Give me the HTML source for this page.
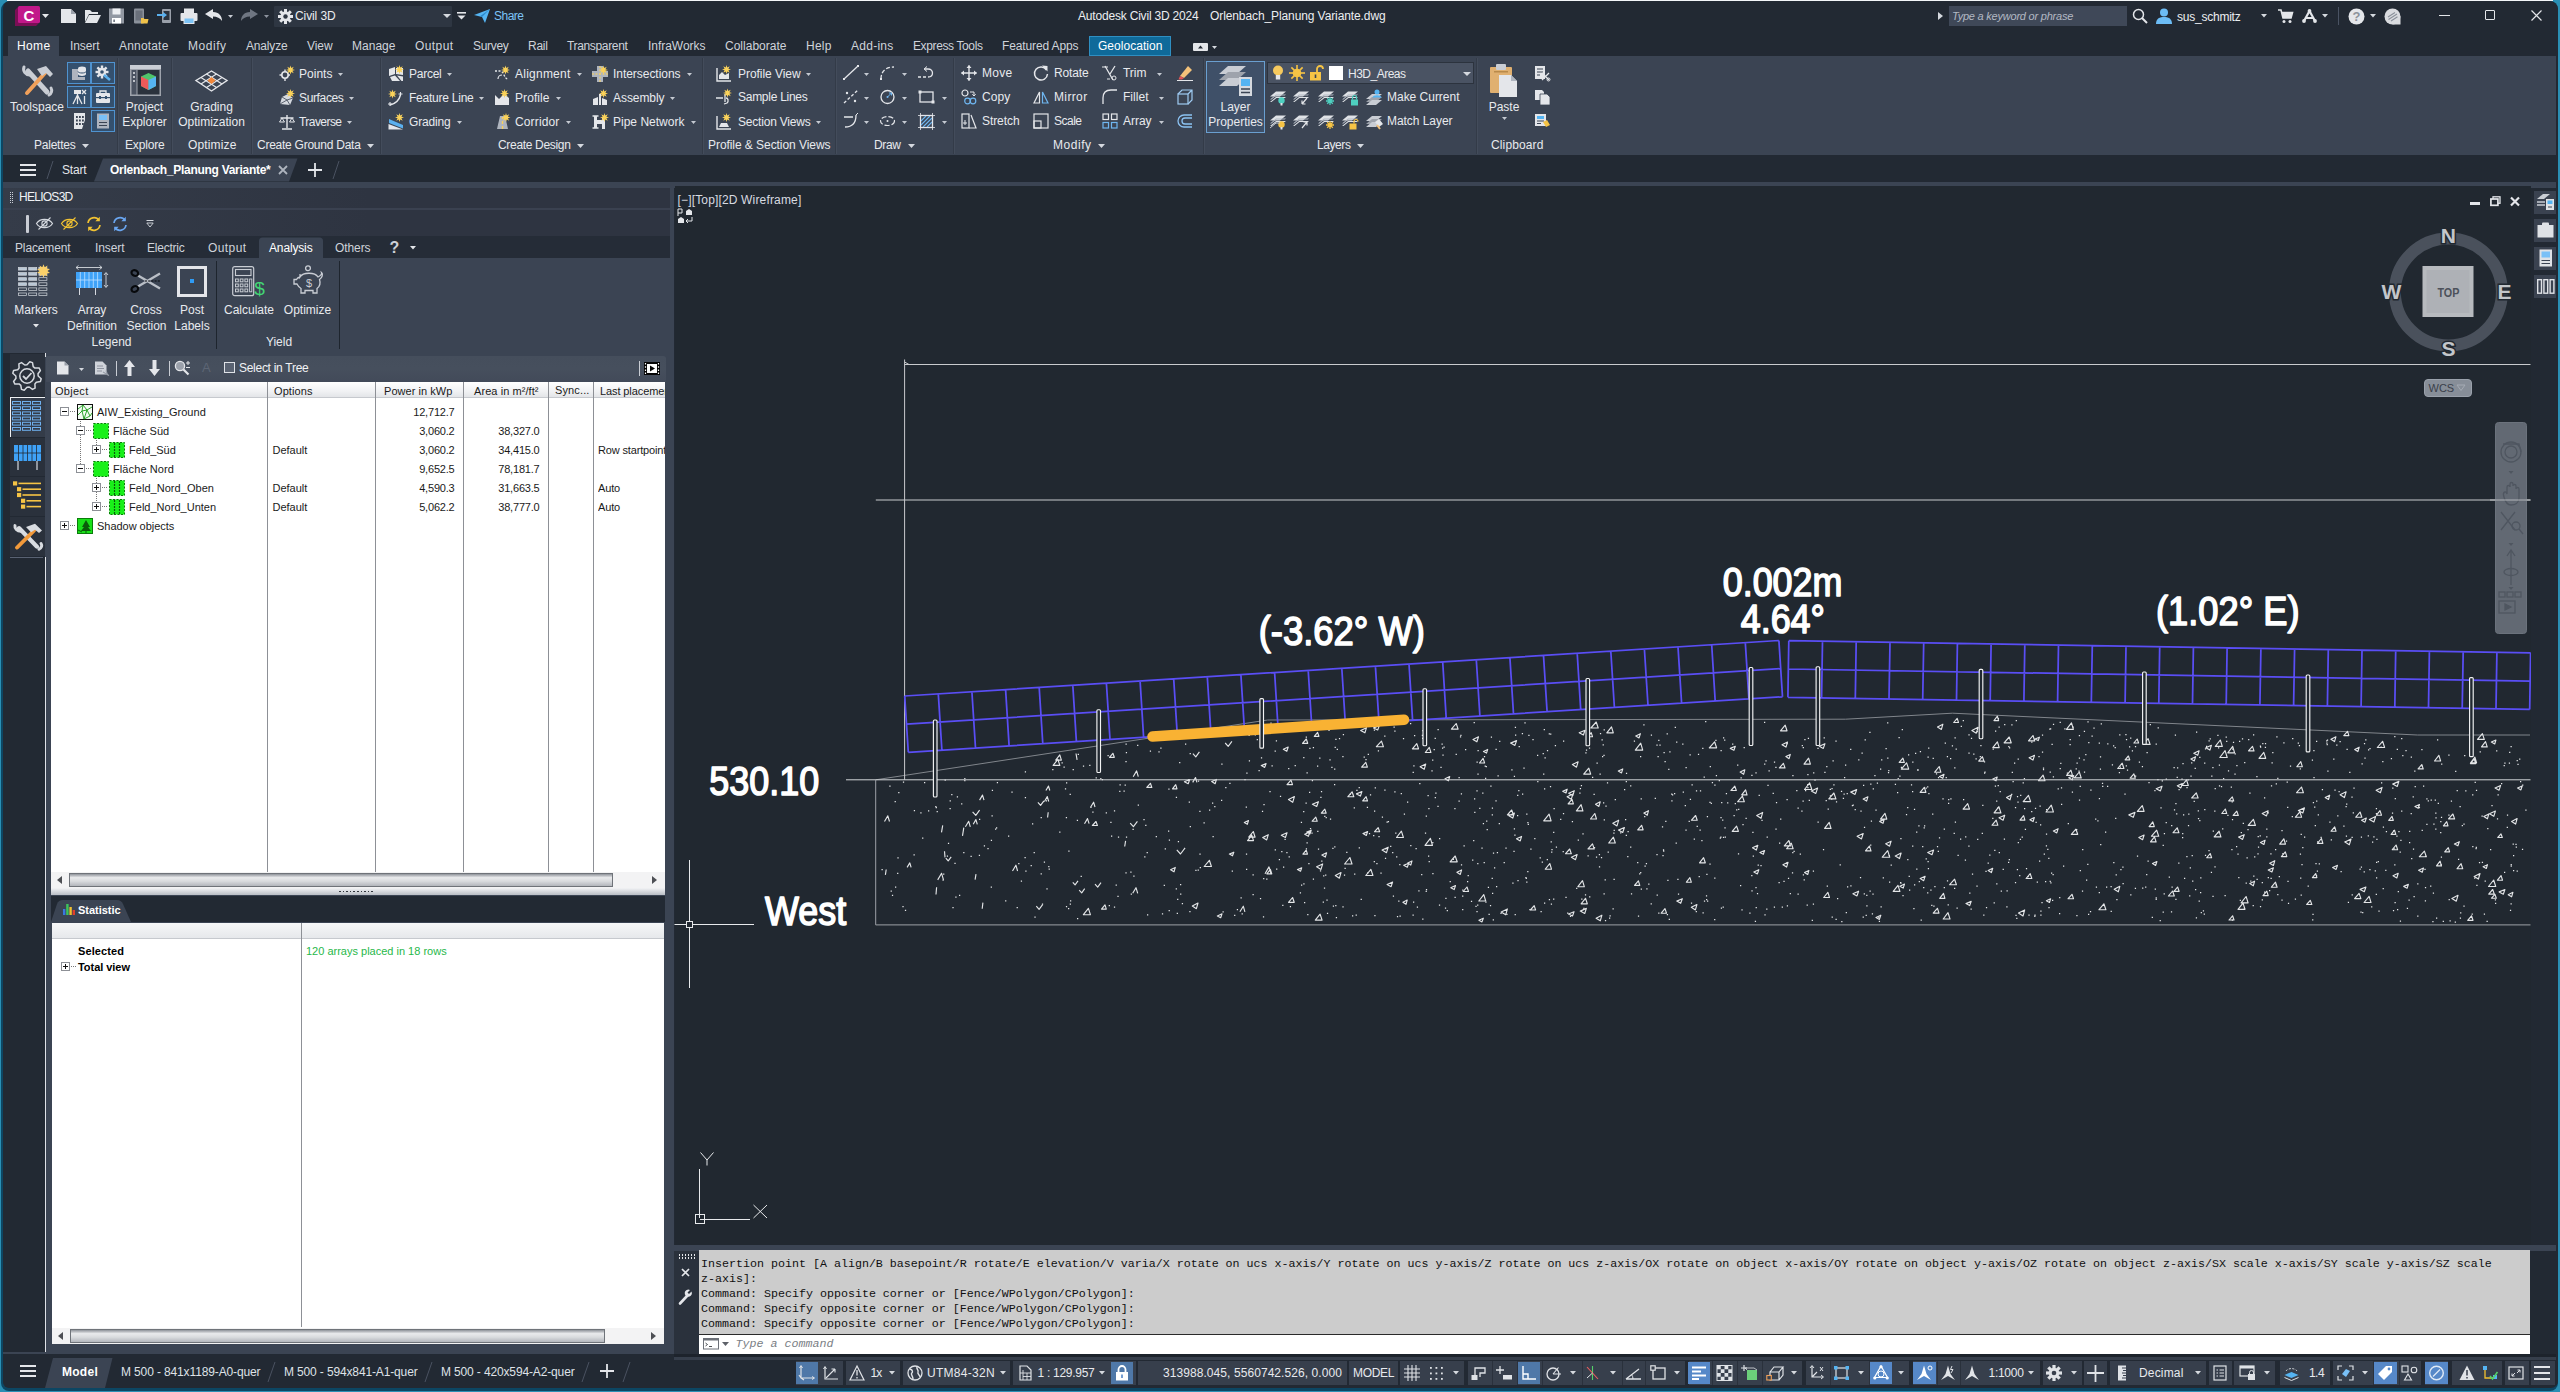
<!DOCTYPE html><html><head><meta charset="utf-8"><title>Autodesk Civil 3D 2024</title><style>html,body{margin:0;padding:0;background:#222933;}
body{width:2560px;height:1392px;position:relative;overflow:hidden;font-family:"Liberation Sans",sans-serif;}
#r{position:absolute;left:0;top:0;width:2560px;height:1392px;overflow:hidden;}
#r div,#r span,#r svg{position:absolute;}
#r span{white-space:nowrap;}
#r svg{overflow:visible;}
.m{font-family:"Liberation Mono",monospace;}
</style></head><body><div id="r">
<div style="left:0px;top:0px;width:2560px;height:1392px;background:#2a8fb4;"></div>
<div style="left:1.2px;top:1px;width:2557.2px;height:1389.7px;background:#0c4663;border-radius:9px 9px 8px 8px;"></div>
<div style="left:2.6px;top:1.2px;width:2555.7px;height:1387px;background:#222933;border-radius:7px 8px 7px 6px;"></div>
<div style="left:7px;top:0px;width:2546px;height:1px;background:#f4f7f9;"></div>
<div style="left:2.6px;top:56px;width:2553px;height:99px;background:#3b4453;"></div>
<div style="left:8px;top:36px;width:51px;height:21px;background:#3b4453;"></div>
<div style="left:2.6px;top:182px;width:2553.4px;height:6px;background:#3b4453;"></div>
<svg style="left:15px;top:6px;" width="26" height="21" viewBox="0 0 26 21"><path d="M3 1H24V17L21 20H0V4Z" fill="#7a0f55"/><rect x="3" y="0" width="22" height="17" rx="1.5" fill="#c2188a"/><text x="14" y="14.5" font-size="15" font-weight="bold" text-anchor="middle" fill="#fff" font-family="Liberation Sans, sans-serif">C</text></svg>
<svg style="left:42.0px;top:14.0px;" width="7" height="4" viewBox="0 0 7 4"><path d="M0 0H7L3.5 4Z" fill="#e6e8ec"/></svg>
<svg style="left:60px;top:8px;" width="18" height="16" viewBox="0 0 18 16"><path d="M1 1H11L16 6V15H1Z" fill="#e4e6ea"/><path d="M11 1V6H16" fill="#9aa0aa"/></svg>
<svg style="left:84px;top:8px;" width="18" height="16" viewBox="0 0 18 16"><path d="M1 14V2H6L8 4H14V6H5L1 14Z" fill="#e4e6ea"/><path d="M5 7H17L13 15H1Z" fill="#e4e6ea"/></svg>
<svg style="left:108px;top:8px;" width="18" height="16" viewBox="0 0 18 16"><path d="M1 0.5H16V15.5H1Z" fill="#9298a2"/><rect x="4.5" y="0.5" width="8" height="6" fill="#eceef1"/><rect x="4" y="10" width="9" height="5.5" fill="#ffffff"/><rect x="5.5" y="11.5" width="1.2" height="2.5" fill="#3b4453"/></svg>
<svg style="left:132px;top:8px;" width="18" height="16" viewBox="0 0 18 16"><rect x="2" y="0.5" width="10" height="15" rx="1" fill="#8b919b"/><rect x="3.5" y="2.5" width="7" height="10" fill="#6a707b"/><path d="M9 10H11.5L12.5 11H16.5L15.5 15.5H9Z" fill="#f0c24a"/></svg>
<svg style="left:156px;top:8px;" width="18" height="16" viewBox="0 0 18 16"><rect x="6" y="1" width="9" height="14" rx="1" fill="#9aa0aa"/><rect x="7.5" y="3" width="6" height="9" fill="#2b323d"/><path d="M1 6H7V4L11 7L7 10V8H1Z" fill="#5ab0ee"/></svg>
<svg style="left:180px;top:8px;" width="18" height="16" viewBox="0 0 18 16"><rect x="4" y="0.5" width="10" height="5" fill="#e4e6ea"/><rect x="0.5" y="5" width="17" height="8" rx="1" fill="#e4e6ea"/><rect x="4" y="10" width="10" height="5.5" fill="#7dc3f5" stroke="#e4e6ea" stroke-width="1"/></svg>
<svg style="left:205px;top:9px;" width="18" height="13" viewBox="0 0 18 13"><path d="M0 5L8 0V3C14 3 17 7 17 12C15 9 12 7.5 8 7.5V10Z" fill="#e4e6ea"/></svg>
<svg style="left:227.5px;top:14.5px;" width="5" height="3" viewBox="0 0 5 3"><path d="M0 0H5L2.5 3Z" fill="#c8ccd3"/></svg>
<svg style="left:241px;top:9px;" width="18" height="13" viewBox="0 0 18 13"><path d="M17 5L9 0V3C3 3 0 7 0 12C2 9 5 7.5 9 7.5V10Z" fill="#6f7682"/></svg>
<svg style="left:263.5px;top:14.5px;" width="5" height="3" viewBox="0 0 5 3"><path d="M0 0H5L2.5 3Z" fill="#8d939e"/></svg>
<div style="left:274px;top:6px;width:178px;height:21px;background:#2e3642;border-radius:1px;"></div>
<svg style="left:278px;top:9px;" width="15" height="15" viewBox="0 0 15 15"><g fill="#e4e6ea"><circle cx="7.5" cy="7.5" r="5"/><rect x="6" y="0" width="3" height="15" transform="rotate(0 7.5 7.5)"/><rect x="6" y="0" width="3" height="15" transform="rotate(45 7.5 7.5)"/><rect x="6" y="0" width="3" height="15" transform="rotate(90 7.5 7.5)"/><rect x="6" y="0" width="3" height="15" transform="rotate(135 7.5 7.5)"/></g><circle cx="7.5" cy="7.5" r="2.2" fill="#2e3642"/></svg>
<span style="left:295px;top:8.0px;font-size:12px;line-height:16px;color:#eceef1;letter-spacing:-0.10px;">Civil 3D</span>
<svg style="left:443.0px;top:14.0px;" width="8" height="4" viewBox="0 0 8 4"><path d="M0 0H8L4.0 4Z" fill="#d5d9df"/></svg>
<svg style="left:457px;top:12px;" width="9" height="8" viewBox="0 0 9 8"><rect x="0" y="0" width="9" height="1.6" fill="#e4e6ea"/><path d="M0.5 3.5H8.5L4.5 7.5Z" fill="#e4e6ea"/></svg>
<svg style="left:474px;top:9px;" width="16" height="14" viewBox="0 0 16 14"><path d="M0 6L16 0L11 14L8 8Z" fill="#55b4f2"/><path d="M8 8L16 0L6 7.2Z" fill="#2a86c9"/></svg>
<span style="left:494px;top:8.0px;font-size:12px;line-height:16px;color:#7cc4f7;letter-spacing:-0.50px;">Share</span>
<span style="left:1078px;top:8.0px;font-size:12px;line-height:16px;color:#eceef1;letter-spacing:-0.19px;">Autodesk Civil 3D 2024</span>
<span style="left:1210px;top:8.0px;font-size:12px;line-height:16px;color:#eceef1;letter-spacing:-0.10px;">Orlenbach_Planung Variante.dwg</span>
<svg style="left:1938px;top:12px;" width="5" height="8" viewBox="0 0 5 8"><path d="M0 0L5 4L0 8Z" fill="#d5d9df"/></svg>
<div style="left:1949px;top:6px;width:178px;height:20px;background:#3f4858;"></div>
<span style="left:1952px;top:8.0px;font-size:11px;line-height:16px;color:#b3b9c4;font-style:italic;letter-spacing:-0.22px;">Type a keyword or phrase</span>
<svg style="left:2132px;top:8px;" width="16" height="16" viewBox="0 0 16 16"><circle cx="6.5" cy="6.5" r="5" fill="none" stroke="#e4e6ea" stroke-width="1.5"/><path d="M10 10L15 15" stroke="#e4e6ea" stroke-width="2"/></svg>
<svg style="left:2156px;top:8px;" width="16" height="16" viewBox="0 0 16 16"><circle cx="8" cy="4.5" r="4" fill="#6cbcf5"/><path d="M0 16C0 10 4 9 8 9C12 9 16 10 16 16Z" fill="#6cbcf5"/></svg>
<span style="left:2177px;top:9.0px;font-size:12px;line-height:16px;color:#eceef1;letter-spacing:-0.23px;">sus_schmitz</span>
<svg style="left:2261.0px;top:14.25px;" width="6" height="3.5" viewBox="0 0 6 3.5"><path d="M0 0H6L3.0 3.5Z" fill="#d5d9df"/></svg>
<svg style="left:2278px;top:9px;" width="15" height="15" viewBox="0 0 15 15"><path d="M0 1H3L5 9H13L14.5 3.5H4" fill="none" stroke="#e4e6ea" stroke-width="1.6"/><circle cx="6" cy="12.5" r="1.5" fill="#e4e6ea"/><circle cx="12" cy="12.5" r="1.5" fill="#e4e6ea"/><path d="M4 3.5H14.5L13 9H5Z" fill="#e4e6ea"/></svg>
<svg style="left:2301.5px;top:9px;" width="15" height="14" viewBox="0 0 15 14"><path d="M7.5 2L2 12M7.5 2L13 12M3.5 9H11.5" stroke="#e4e6ea" stroke-width="2.2" fill="none"/><circle cx="7.5" cy="2" r="1.9" fill="#e4e6ea"/><circle cx="2" cy="12" r="1.9" fill="#e4e6ea"/><circle cx="13" cy="12" r="1.9" fill="#e4e6ea"/></svg>
<svg style="left:2322.0px;top:14.25px;" width="6" height="3.5" viewBox="0 0 6 3.5"><path d="M0 0H6L3.0 3.5Z" fill="#d5d9df"/></svg>
<div style="left:2338px;top:7px;width:1px;height:18px;background:#4a5363;"></div>
<svg style="left:2348px;top:8px;" width="17" height="17" viewBox="0 0 17 17"><circle cx="8.5" cy="8.5" r="8" fill="#e4e6ea"/><text x="8.5" y="13" font-size="13" font-weight="bold" text-anchor="middle" fill="#8d929b" font-family="Liberation Sans, sans-serif">?</text></svg>
<svg style="left:2370.0px;top:14.25px;" width="6" height="3.5" viewBox="0 0 6 3.5"><path d="M0 0H6L3.0 3.5Z" fill="#d5d9df"/></svg>
<svg style="left:2384px;top:8px;" width="17" height="17" viewBox="0 0 17 17"><circle cx="8.5" cy="8.5" r="8" fill="#d9dbdf"/><rect x="8.5" y="8.5" width="8" height="8" fill="#d9dbdf"/><path d="M4 9L11 4.5M4.5 11.5L13 6M7 13L13.5 8.8" stroke="#8a909a" stroke-width="1.1"/></svg>
<div style="left:2439px;top:15px;width:11px;height:1px;background:#e4e6ea;"></div>
<div style="left:2485px;top:10.3px;width:10px;height:10px;border:1px solid #e4e6ea;box-sizing:border-box;border-radius:1px;"></div>
<svg style="left:2530.5px;top:9.8px;" width="11" height="11" viewBox="0 0 11 11"><path d="M0.5 0.5L10.5 10.5M10.5 0.5L0.5 10.5" stroke="#e4e6ea" stroke-width="1.2"/></svg>
<span style="left:17px;top:38.0px;font-size:12px;line-height:16px;color:#fff;letter-spacing:0.37px;">Home</span>
<span style="left:70px;top:38.0px;font-size:12px;line-height:16px;color:#cfd3da;letter-spacing:-0.09px;">Insert</span>
<span style="left:119px;top:38.0px;font-size:12px;line-height:16px;color:#cfd3da;letter-spacing:0.18px;">Annotate</span>
<span style="left:188px;top:38.0px;font-size:12px;line-height:16px;color:#cfd3da;letter-spacing:0.53px;">Modify</span>
<span style="left:246px;top:38.0px;font-size:12px;line-height:16px;color:#cfd3da;letter-spacing:-0.17px;">Analyze</span>
<span style="left:307px;top:38.0px;font-size:12px;line-height:16px;color:#cfd3da;letter-spacing:-0.07px;">View</span>
<span style="left:352px;top:38.0px;font-size:12px;line-height:16px;color:#cfd3da;letter-spacing:0.02px;">Manage</span>
<span style="left:415px;top:38.0px;font-size:12px;line-height:16px;color:#cfd3da;letter-spacing:0.41px;">Output</span>
<span style="left:473px;top:38.0px;font-size:12px;line-height:16px;color:#cfd3da;letter-spacing:-0.31px;">Survey</span>
<span style="left:528px;top:38.0px;font-size:12px;line-height:16px;color:#cfd3da;letter-spacing:-0.29px;">Rail</span>
<span style="left:567px;top:38.0px;font-size:12px;line-height:16px;color:#cfd3da;letter-spacing:-0.34px;">Transparent</span>
<span style="left:648px;top:38.0px;font-size:12px;line-height:16px;color:#cfd3da;letter-spacing:-0.03px;">InfraWorks</span>
<span style="left:725px;top:38.0px;font-size:12px;line-height:16px;color:#cfd3da;letter-spacing:0.01px;">Collaborate</span>
<span style="left:806px;top:38.0px;font-size:12px;line-height:16px;color:#cfd3da;letter-spacing:0.21px;">Help</span>
<span style="left:851px;top:38.0px;font-size:12px;line-height:16px;color:#cfd3da;letter-spacing:0.26px;">Add-ins</span>
<span style="left:913px;top:38.0px;font-size:12px;line-height:16px;color:#cfd3da;letter-spacing:-0.38px;">Express Tools</span>
<span style="left:1002px;top:38.0px;font-size:12px;line-height:16px;color:#cfd3da;letter-spacing:-0.12px;">Featured Apps</span>
<div style="left:1089px;top:36px;width:82px;height:20px;background:#0f6a9a;border:1px solid #2f8fc2;box-sizing:border-box;"></div>
<span style="left:1098px;top:38.0px;font-size:12px;line-height:16px;color:#fff;letter-spacing:0.04px;">Geolocation</span>
<svg style="left:1193px;top:43px;" width="15" height="8" viewBox="0 0 15 8"><rect x="0" y="0" width="15" height="8" rx="1" fill="#e4e6ea"/><path d="M5 5.5H10L7.5 2.5Z" fill="#222933"/></svg>
<svg style="left:1211.5px;top:45.5px;" width="5" height="3" viewBox="0 0 5 3"><path d="M0 0H5L2.5 3Z" fill="#d5d9df"/></svg>
<div style="left:117px;top:58px;width:1px;height:96px;background:#333b48;"></div>
<div style="left:118px;top:58px;width:1px;height:96px;background:#434c5b;"></div>
<div style="left:171px;top:58px;width:1px;height:96px;background:#333b48;"></div>
<div style="left:172px;top:58px;width:1px;height:96px;background:#434c5b;"></div>
<div style="left:251px;top:58px;width:1px;height:96px;background:#333b48;"></div>
<div style="left:252px;top:58px;width:1px;height:96px;background:#434c5b;"></div>
<div style="left:380px;top:58px;width:1px;height:96px;background:#333b48;"></div>
<div style="left:381px;top:58px;width:1px;height:96px;background:#434c5b;"></div>
<div style="left:702px;top:58px;width:1px;height:96px;background:#333b48;"></div>
<div style="left:703px;top:58px;width:1px;height:96px;background:#434c5b;"></div>
<div style="left:835px;top:58px;width:1px;height:96px;background:#333b48;"></div>
<div style="left:836px;top:58px;width:1px;height:96px;background:#434c5b;"></div>
<div style="left:953px;top:58px;width:1px;height:96px;background:#333b48;"></div>
<div style="left:954px;top:58px;width:1px;height:96px;background:#434c5b;"></div>
<div style="left:1203px;top:58px;width:1px;height:96px;background:#333b48;"></div>
<div style="left:1204px;top:58px;width:1px;height:96px;background:#434c5b;"></div>
<div style="left:1476px;top:58px;width:1px;height:96px;background:#333b48;"></div>
<div style="left:1477px;top:58px;width:1px;height:96px;background:#434c5b;"></div>
<span style="left:34px;top:137.0px;font-size:12px;line-height:16px;color:#e8eaee;letter-spacing:-0.23px;">Palettes</span>
<svg style="left:81.5px;top:143.5px;" width="7" height="4" viewBox="0 0 7 4"><path d="M0 0H7L3.5 4Z" fill="#d5d9df"/></svg>
<span style="left:125px;top:137.0px;font-size:12px;line-height:16px;color:#e8eaee;letter-spacing:-0.17px;">Explore</span>
<span style="left:188px;top:137.0px;font-size:12px;line-height:16px;color:#e8eaee;letter-spacing:0.14px;">Optimize</span>
<span style="left:257px;top:137.0px;font-size:12px;line-height:16px;color:#e8eaee;letter-spacing:-0.25px;">Create Ground Data</span>
<svg style="left:366.5px;top:143.5px;" width="7" height="4" viewBox="0 0 7 4"><path d="M0 0H7L3.5 4Z" fill="#d5d9df"/></svg>
<span style="left:498px;top:137.0px;font-size:12px;line-height:16px;color:#e8eaee;letter-spacing:-0.32px;">Create Design</span>
<svg style="left:576.5px;top:143.5px;" width="7" height="4" viewBox="0 0 7 4"><path d="M0 0H7L3.5 4Z" fill="#d5d9df"/></svg>
<span style="left:708px;top:137.0px;font-size:12px;line-height:16px;color:#e8eaee;letter-spacing:-0.06px;">Profile &amp; Section Views</span>
<span style="left:874px;top:137.0px;font-size:12px;line-height:16px;color:#e8eaee;letter-spacing:-0.38px;">Draw</span>
<svg style="left:907.5px;top:143.5px;" width="7" height="4" viewBox="0 0 7 4"><path d="M0 0H7L3.5 4Z" fill="#d5d9df"/></svg>
<span style="left:1053px;top:137.0px;font-size:12px;line-height:16px;color:#e8eaee;letter-spacing:0.53px;">Modify</span>
<svg style="left:1097.5px;top:143.5px;" width="7" height="4" viewBox="0 0 7 4"><path d="M0 0H7L3.5 4Z" fill="#d5d9df"/></svg>
<span style="left:1317px;top:137.0px;font-size:12px;line-height:16px;color:#e8eaee;letter-spacing:-0.42px;">Layers</span>
<svg style="left:1356.5px;top:143.5px;" width="7" height="4" viewBox="0 0 7 4"><path d="M0 0H7L3.5 4Z" fill="#d5d9df"/></svg>
<span style="left:1491px;top:137.0px;font-size:12px;line-height:16px;color:#e8eaee;letter-spacing:0.13px;">Clipboard</span>
<svg style="left:20px;top:64px;" width="35" height="33" viewBox="0 0 35 33"><g stroke-linecap="round"><path d="M8 7L27 28" stroke="#c9cdd4" stroke-width="5"/><path d="M4 3A6 6 0 0 0 10 11" stroke="#c9cdd4" stroke-width="3" fill="none"/><path d="M29 31A5 5 0 0 0 31 24" stroke="#c9cdd4" stroke-width="3" fill="none"/><path d="M7 29L25 9" stroke="#f0a05a" stroke-width="4"/><path d="M17 5L26 2L33 10L30 13L26 9L22 12Z" fill="#c9cdd4" stroke="none"/></g></svg>
<span style="left:-113px;width:300px;text-align:center;top:99.0px;font-size:12px;line-height:16px;color:#e8eaee;">Toolspace</span>
<div style="left:67px;top:62px;width:24px;height:22px;background:#34506e;border:1px solid #4f93d0;box-sizing:border-box;"></div>
<div style="left:91px;top:62px;width:24px;height:22px;background:#34506e;border:1px solid #4f93d0;box-sizing:border-box;"></div>
<div style="left:67px;top:86px;width:24px;height:22px;background:#34506e;border:1px solid #4f93d0;box-sizing:border-box;"></div>
<div style="left:91px;top:86px;width:24px;height:22px;background:#34506e;border:1px solid #4f93d0;box-sizing:border-box;"></div>
<div style="left:91px;top:110px;width:24px;height:22px;background:#34506e;border:1px solid #4f93d0;box-sizing:border-box;"></div>
<svg style="left:71px;top:65px;" width="16" height="16" viewBox="0 0 16 16"><path d="M1 4H7V12H14V15H1Z" fill="#aeb4be"/><ellipse cx="11" cy="3.5" rx="4" ry="2" fill="#e4e6ea"/><path d="M7 4V9C7 11.5 15 11.5 15 9V4" fill="#e4e6ea"/><path d="M7 6.5C7 8.5 15 8.5 15 6.5" stroke="#34506e" fill="none"/></svg>
<svg style="left:95px;top:65px;" width="16" height="16" viewBox="0 0 16 16"><g fill="#e4e6ea"><circle cx="7" cy="7" r="4.2"/><rect x="5.8" y="0.5" width="2.4" height="13" transform="rotate(0 7 7)"/><rect x="5.8" y="0.5" width="2.4" height="13" transform="rotate(45 7 7)"/><rect x="5.8" y="0.5" width="2.4" height="13" transform="rotate(90 7 7)"/><rect x="5.8" y="0.5" width="2.4" height="13" transform="rotate(135 7 7)"/></g><circle cx="7" cy="7" r="1.8" fill="#34506e"/><path d="M9 10L15 15" stroke="#5ab0ee" stroke-width="2.5"/></svg>
<svg style="left:71px;top:89px;" width="16" height="16" viewBox="0 0 16 16"><rect x="3" y="1" width="7" height="4" fill="#e4e6ea"/><path d="M11 1L15 5M15 1L11 5" stroke="#e4e6ea" stroke-width="1.3"/><path d="M6.5 5V15M6.5 6L2 15M6.5 6L11 15M13.5 7V15" stroke="#e4e6ea" stroke-width="1.3" fill="none"/></svg>
<svg style="left:95px;top:89px;" width="16" height="16" viewBox="0 0 16 16"><path d="M5 4V2H11V4" stroke="#e4e6ea" fill="none" stroke-width="1.3"/><rect x="1" y="4" width="14" height="10" rx="1" fill="#e4e6ea"/><rect x="1" y="8" width="14" height="1.2" fill="#34506e"/><rect x="4" y="7" width="2" height="3" fill="#34506e"/><rect x="10" y="7" width="2" height="3" fill="#34506e"/></svg>
<svg style="left:72px;top:112px;" width="16" height="18" viewBox="0 0 16 18"><path d="M2 1H13V8L10 17H2Z" fill="#e4e6ea"/><rect x="4" y="4.0" width="1.8" height="2" fill="#3b4453"/><rect x="4" y="7.5" width="1.8" height="2" fill="#3b4453"/><rect x="4" y="11.0" width="1.8" height="2" fill="#3b4453"/><rect x="7" y="4.0" width="1.8" height="2" fill="#3b4453"/><rect x="7" y="7.5" width="1.8" height="2" fill="#3b4453"/><rect x="7" y="11.0" width="1.8" height="2" fill="#3b4453"/><rect x="10" y="4.0" width="1.8" height="2" fill="#3b4453"/><rect x="10" y="7.5" width="1.8" height="2" fill="#3b4453"/><rect x="10" y="11.0" width="1.8" height="2" fill="#3b4453"/></svg>
<svg style="left:95px;top:113px;" width="16" height="16" viewBox="0 0 16 16"><rect x="2" y="0.5" width="12" height="15" fill="#aeb4be"/><rect x="4" y="2" width="8" height="5" fill="#79c0f7"/><path d="M4 9.5H12M4 12.5H12" stroke="#3b4453" stroke-width="1.2"/></svg>
<svg style="left:130px;top:65px;" width="31" height="31" viewBox="0 0 31 31"><rect x="0" y="0" width="31" height="31" fill="#9ea3ac"/><rect x="0" y="0" width="31" height="4" fill="#c9cdd4"/><rect x="1.5" y="5" width="5" height="24.5" fill="#4a5261"/><rect x="7.5" y="5" width="22" height="24.5" fill="#2b323d"/><path d="M3 8H5M3 12H5M3 16H5" stroke="#e4e6ea" stroke-width="1.5"/><path d="M18.5 8L26 11.5V21L18.5 25L11 21V11.5Z" fill="#4fc36b"/><path d="M11 11.5L18.5 15V25L11 21Z" fill="#ee5a5a"/><path d="M26 11.5L18.5 15V25L26 21Z" fill="#55b4f2"/></svg>
<span style="left:-5.5px;width:300px;text-align:center;top:99.0px;font-size:12px;line-height:16px;color:#e8eaee;">Project</span>
<span style="left:-5.5px;width:300px;text-align:center;top:114.0px;font-size:12px;line-height:16px;color:#e8eaee;">Explorer</span>
<svg style="left:195px;top:70px;" width="33" height="22" viewBox="0 0 33 22"><path d="M16.5 1L32 10.5L16.5 21L1 10.5Z" fill="none" stroke="#e4e6ea" stroke-width="1.4"/><path d="M6 7.5L21.5 17.5M11.5 4L27 14M27 7.5L11.5 17.5M21.5 4L6 14" stroke="#e4e6ea" stroke-width="1.2"/><path d="M16.5 7L20.5 10.5L16.5 14L12.5 10.5Z" fill="#f2873a"/></svg>
<span style="left:61.5px;width:300px;text-align:center;top:99.0px;font-size:12px;line-height:16px;color:#e8eaee;">Grading</span>
<span style="left:61.5px;width:300px;text-align:center;top:114.0px;font-size:12px;line-height:16px;color:#e8eaee;">Optimization</span>
<svg style="left:279px;top:66px;" width="16" height="16" viewBox="0 0 16 16"><circle cx="6" cy="9" r="3.2" fill="none" stroke="#e4e6ea" stroke-width="1.6"/><path d="M6 3.5V5.5M6 12.5V15M0.5 9H2.8M9.2 9H11" stroke="#e4e6ea" stroke-width="1.4"/><path d="M11.5 -0.5L12.3 2.1L14.7 0.8L13.4 3.2L16.0 4.0L13.4 4.8L14.7 7.2L12.3 5.9L11.5 8.5L10.7 5.9L8.3 7.2L9.6 4.8L7.0 4.0L9.6 3.2L8.3 0.8L10.7 2.1Z" fill="#fad25a"/></svg>
<span style="left:299px;top:66.0px;font-size:12px;line-height:16px;color:#e8eaee;letter-spacing:0.02px;">Points</span>
<svg style="left:337.5px;top:73.0px;" width="5" height="3" viewBox="0 0 5 3"><path d="M0 0H5L2.5 3Z" fill="#c5cad2"/></svg>
<svg style="left:279px;top:90px;" width="16" height="16" viewBox="0 0 16 16"><path d="M1 14L3 7L9 4L14 8L11 15Z" fill="#d5d9df"/><path d="M3 7L8 10L14 8M8 10L11 15M8 10L1 14" stroke="#3b4453" stroke-width="0.8" fill="none"/><path d="M11.5 -1.0L12.3 1.6L14.7 0.3L13.4 2.7L16.0 3.5L13.4 4.3L14.7 6.7L12.3 5.4L11.5 8.0L10.7 5.4L8.3 6.7L9.6 4.3L7.0 3.5L9.6 2.7L8.3 0.3L10.7 1.6Z" fill="#fad25a"/></svg>
<span style="left:299px;top:90.0px;font-size:12px;line-height:16px;color:#e8eaee;letter-spacing:-0.36px;">Surfaces</span>
<svg style="left:348.5px;top:97.0px;" width="5" height="3" viewBox="0 0 5 3"><path d="M0 0H5L2.5 3Z" fill="#c5cad2"/></svg>
<svg style="left:279px;top:114px;" width="16" height="16" viewBox="0 0 16 16"><path d="M8 1V14M3 15H13M1.5 4H14.5" stroke="#e4e6ea" stroke-width="1.4" fill="none"/><path d="M0.5 8H5.5L3 4ZM10.5 8H15.5L13 4Z" fill="none" stroke="#e4e6ea" stroke-width="1"/></svg>
<span style="left:299px;top:114.0px;font-size:12px;line-height:16px;color:#e8eaee;letter-spacing:-0.55px;">Traverse</span>
<svg style="left:346.5px;top:121.0px;" width="5" height="3" viewBox="0 0 5 3"><path d="M0 0H5L2.5 3Z" fill="#c5cad2"/></svg>
<svg style="left:388px;top:66px;" width="16" height="16" viewBox="0 0 16 16"><path d="M1 3L7 1V8L1 10ZM8 2H15V9L8 8ZM2 11L7 9.5L12 15L4 15ZM9 9.5L15 10.5V15H13.5Z" fill="#e4e6ea"/><path d="M11.5 -1.0L12.3 1.6L14.7 0.3L13.4 2.7L16.0 3.5L13.4 4.3L14.7 6.7L12.3 5.4L11.5 8.0L10.7 5.4L8.3 6.7L9.6 4.3L7.0 3.5L9.6 2.7L8.3 0.3L10.7 1.6Z" fill="#fad25a"/></svg>
<span style="left:409px;top:66.0px;font-size:12px;line-height:16px;color:#e8eaee;letter-spacing:-0.25px;">Parcel</span>
<svg style="left:446.5px;top:73.0px;" width="5" height="3" viewBox="0 0 5 3"><path d="M0 0H5L2.5 3Z" fill="#c5cad2"/></svg>
<svg style="left:388px;top:90px;" width="16" height="16" viewBox="0 0 16 16"><path d="M2 15C6 14 11 11 12.5 5" stroke="#e4e6ea" stroke-width="1.4" fill="none"/><path d="M0 14H4M2 12V16M10.5 4H14.5M12.5 2V6" stroke="#e4e6ea" stroke-width="1.1"/><path d="M4.5 -0.5L5.3 2.1L7.7 0.8L6.4 3.2L9.0 4.0L6.4 4.8L7.7 7.2L5.3 5.9L4.5 8.5L3.7 5.9L1.3 7.2L2.6 4.8L0.0 4.0L2.6 3.2L1.3 0.8L3.7 2.1Z" fill="#fad25a"/></svg>
<span style="left:409px;top:90.0px;font-size:12px;line-height:16px;color:#e8eaee;letter-spacing:-0.24px;">Feature Line</span>
<svg style="left:478.5px;top:97.0px;" width="5" height="3" viewBox="0 0 5 3"><path d="M0 0H5L2.5 3Z" fill="#c5cad2"/></svg>
<svg style="left:388px;top:114px;" width="16" height="16" viewBox="0 0 16 16"><path d="M0.5 10L15 15.5H0.5Z" fill="#e4e6ea"/><path d="M1 5L15 11V14.5L1 9Z" fill="#5ab0ee"/><path d="M11.5 -1.0L12.3 1.6L14.7 0.3L13.4 2.7L16.0 3.5L13.4 4.3L14.7 6.7L12.3 5.4L11.5 8.0L10.7 5.4L8.3 6.7L9.6 4.3L7.0 3.5L9.6 2.7L8.3 0.3L10.7 1.6Z" fill="#fad25a"/></svg>
<span style="left:409px;top:114.0px;font-size:12px;line-height:16px;color:#e8eaee;letter-spacing:-0.17px;">Grading</span>
<svg style="left:456.5px;top:121.0px;" width="5" height="3" viewBox="0 0 5 3"><path d="M0 0H5L2.5 3Z" fill="#c5cad2"/></svg>
<svg style="left:494px;top:66px;" width="16" height="16" viewBox="0 0 16 16"><path d="M1 5H6C10 5 10 13 14 13" stroke="#e4e6ea" stroke-width="1.3" fill="none" stroke-dasharray="2 1.5"/><path d="M4 13A4 4 0 0 1 8 9" stroke="#e4e6ea" stroke-width="1.2" fill="none"/><path d="M11.5 -0.5L12.3 2.1L14.7 0.8L13.4 3.2L16.0 4.0L13.4 4.8L14.7 7.2L12.3 5.9L11.5 8.5L10.7 5.9L8.3 7.2L9.6 4.8L7.0 4.0L9.6 3.2L8.3 0.8L10.7 2.1Z" fill="#fad25a"/></svg>
<span style="left:515px;top:66.0px;font-size:12px;line-height:16px;color:#e8eaee;letter-spacing:0.24px;">Alignment</span>
<svg style="left:576.5px;top:73.0px;" width="5" height="3" viewBox="0 0 5 3"><path d="M0 0H5L2.5 3Z" fill="#c5cad2"/></svg>
<svg style="left:494px;top:90px;" width="16" height="16" viewBox="0 0 16 16"><path d="M1 5L5 9L10 4L15 8V15H1Z" fill="#e4e6ea"/><path d="M10.5 -1.0L11.3 1.6L13.7 0.3L12.4 2.7L15.0 3.5L12.4 4.3L13.7 6.7L11.3 5.4L10.5 8.0L9.7 5.4L7.3 6.7L8.6 4.3L6.0 3.5L8.6 2.7L7.3 0.3L9.7 1.6Z" fill="#fad25a"/></svg>
<span style="left:515px;top:90.0px;font-size:12px;line-height:16px;color:#e8eaee;letter-spacing:0.07px;">Profile</span>
<svg style="left:555.5px;top:97.0px;" width="5" height="3" viewBox="0 0 5 3"><path d="M0 0H5L2.5 3Z" fill="#c5cad2"/></svg>
<svg style="left:494px;top:114px;" width="16" height="16" viewBox="0 0 16 16"><path d="M3 15L6 2H11L14 15Z" fill="#aeb4be"/><path d="M8.5 3V5M8.5 7V10M8.5 12V15" stroke="#fad25a" stroke-width="1.3"/><path d="M12.0 -1.0L12.8 1.6L15.2 0.3L13.9 2.7L16.5 3.5L13.9 4.3L15.2 6.7L12.8 5.4L12.0 8.0L11.2 5.4L8.8 6.7L10.1 4.3L7.5 3.5L10.1 2.7L8.8 0.3L11.2 1.6Z" fill="#fad25a"/></svg>
<span style="left:515px;top:114.0px;font-size:12px;line-height:16px;color:#e8eaee;letter-spacing:0.14px;">Corridor</span>
<svg style="left:565.5px;top:121.0px;" width="5" height="3" viewBox="0 0 5 3"><path d="M0 0H5L2.5 3Z" fill="#c5cad2"/></svg>
<svg style="left:592px;top:66px;" width="16" height="16" viewBox="0 0 16 16"><path d="M5 0H11V5H16V11H11V16H5V11H0V5H5Z" fill="#aeb4be"/><path d="M8 0V16M0 8H16" stroke="#fad25a" stroke-width="1" stroke-dasharray="2 1.5"/><path d="M11.5 -0.5L12.3 2.1L14.7 0.8L13.4 3.2L16.0 4.0L13.4 4.8L14.7 7.2L12.3 5.9L11.5 8.5L10.7 5.9L8.3 7.2L9.6 4.8L7.0 4.0L9.6 3.2L8.3 0.8L10.7 2.1Z" fill="#fad25a"/></svg>
<span style="left:613px;top:66.0px;font-size:12px;line-height:16px;color:#e8eaee;letter-spacing:-0.04px;">Intersections</span>
<svg style="left:686.5px;top:73.0px;" width="5" height="3" viewBox="0 0 5 3"><path d="M0 0H5L2.5 3Z" fill="#c5cad2"/></svg>
<svg style="left:592px;top:90px;" width="16" height="16" viewBox="0 0 16 16"><path d="M1 15V9L6 7V15ZM7 15V4H9V15ZM10 15V8L15 10V15Z" fill="#e4e6ea"/><path d="M11.5 -1.0L12.3 1.6L14.7 0.3L13.4 2.7L16.0 3.5L13.4 4.3L14.7 6.7L12.3 5.4L11.5 8.0L10.7 5.4L8.3 6.7L9.6 4.3L7.0 3.5L9.6 2.7L8.3 0.3L10.7 1.6Z" fill="#fad25a"/></svg>
<span style="left:613px;top:90.0px;font-size:12px;line-height:16px;color:#e8eaee;letter-spacing:-0.06px;">Assembly</span>
<svg style="left:669.5px;top:97.0px;" width="5" height="3" viewBox="0 0 5 3"><path d="M0 0H5L2.5 3Z" fill="#c5cad2"/></svg>
<svg style="left:592px;top:114px;" width="16" height="16" viewBox="0 0 16 16"><path d="M2 2H5V14H2ZM5 6H10V10H5ZM10 3H13V15H10Z" fill="#e4e6ea"/><path d="M0.5 2H6.5M0.5 14H6.5" stroke="#e4e6ea" stroke-width="1.5"/><path d="M12.5 -1.0L13.3 1.6L15.7 0.3L14.4 2.7L17.0 3.5L14.4 4.3L15.7 6.7L13.3 5.4L12.5 8.0L11.7 5.4L9.3 6.7L10.6 4.3L8.0 3.5L10.6 2.7L9.3 0.3L11.7 1.6Z" fill="#fad25a"/></svg>
<span style="left:613px;top:114.0px;font-size:12px;line-height:16px;color:#e8eaee;letter-spacing:0.01px;">Pipe Network</span>
<svg style="left:690.5px;top:121.0px;" width="5" height="3" viewBox="0 0 5 3"><path d="M0 0H5L2.5 3Z" fill="#c5cad2"/></svg>
<svg style="left:716px;top:66px;" width="16" height="16" viewBox="0 0 16 16"><path d="M1 2V15H15" stroke="#e4e6ea" stroke-width="1.4" fill="none"/><path d="M3 13V9L6 6L9 9L13 7V13Z" fill="#e4e6ea"/><path d="M10.5 -1.0L11.3 1.6L13.7 0.3L12.4 2.7L15.0 3.5L12.4 4.3L13.7 6.7L11.3 5.4L10.5 8.0L9.7 5.4L7.3 6.7L8.6 4.3L6.0 3.5L8.6 2.7L7.3 0.3L9.7 1.6Z" fill="#fad25a"/></svg>
<span style="left:738px;top:66.0px;font-size:12px;line-height:16px;color:#e8eaee;letter-spacing:-0.05px;">Profile View</span>
<svg style="left:805.5px;top:73.0px;" width="5" height="3" viewBox="0 0 5 3"><path d="M0 0H5L2.5 3Z" fill="#c5cad2"/></svg>
<svg style="left:716px;top:89px;" width="16" height="16" viewBox="0 0 16 16"><path d="M0 9H7M10 9C12 9 13 12 11 14L8 15" stroke="#e4e6ea" stroke-width="1.3" fill="none"/><path d="M9 5V13" stroke="#e4e6ea" stroke-width="1.3"/><path d="M11.5 -0.5L12.3 2.1L14.7 0.8L13.4 3.2L16.0 4.0L13.4 4.8L14.7 7.2L12.3 5.9L11.5 8.5L10.7 5.9L8.3 7.2L9.6 4.8L7.0 4.0L9.6 3.2L8.3 0.8L10.7 2.1Z" fill="#fad25a"/></svg>
<span style="left:738px;top:89.0px;font-size:12px;line-height:16px;color:#e8eaee;letter-spacing:-0.27px;">Sample Lines</span>
<svg style="left:716px;top:114px;" width="16" height="16" viewBox="0 0 16 16"><path d="M1 2V15H15" stroke="#e4e6ea" stroke-width="1.4" fill="none"/><path d="M3 13L5 9H11L13 13Z" fill="#e4e6ea"/><path d="M10.5 -1.0L11.3 1.6L13.7 0.3L12.4 2.7L15.0 3.5L12.4 4.3L13.7 6.7L11.3 5.4L10.5 8.0L9.7 5.4L7.3 6.7L8.6 4.3L6.0 3.5L8.6 2.7L7.3 0.3L9.7 1.6Z" fill="#fad25a"/></svg>
<span style="left:738px;top:114.0px;font-size:12px;line-height:16px;color:#e8eaee;letter-spacing:-0.20px;">Section Views</span>
<svg style="left:815.5px;top:121.0px;" width="5" height="3" viewBox="0 0 5 3"><path d="M0 0H5L2.5 3Z" fill="#c5cad2"/></svg>
<svg style="left:843px;top:65px;" width="18" height="16" viewBox="0 0 18 16"><path d="M1 14L15 1" stroke="#e4e6ea" stroke-width="1.3"/><rect x="0" y="13" width="2" height="2" fill="#e4e6ea"/><rect x="14" y="0" width="2" height="2" fill="#e4e6ea"/></svg>
<svg style="left:843px;top:89px;" width="18" height="16" viewBox="0 0 18 16"><path d="M1 14L15 1" stroke="#e4e6ea" stroke-width="1.3" stroke-dasharray="3 2"/><circle cx="4" cy="4" r="1.2" fill="#e4e6ea"/><circle cx="12" cy="12" r="1.2" fill="#e4e6ea"/></svg>
<svg style="left:843px;top:113px;" width="18" height="16" viewBox="0 0 18 16"><path d="M2 14C10 14 13 9 13 2M1 4H10" stroke="#e4e6ea" stroke-width="1.3" fill="none"/><path d="M13 2L15 0" stroke="#e4e6ea"/></svg>
<svg style="left:880px;top:65px;" width="18" height="16" viewBox="0 0 18 16"><path d="M1 14C1 6 6 2 14 2" stroke="#e4e6ea" stroke-width="1.3" fill="none" stroke-dasharray="4 2"/><rect x="0" y="13" width="2" height="2" fill="#e4e6ea"/></svg>
<svg style="left:880px;top:89px;" width="18" height="16" viewBox="0 0 18 16"><circle cx="7.5" cy="8" r="6.5" stroke="#e4e6ea" stroke-width="1.3" fill="none"/><path d="M7.5 8L11.5 4M11.5 4H9M11.5 4V6.5" stroke="#6fb6f0" fill="none"/><circle cx="7.5" cy="8" r="1" fill="#6fb6f0"/></svg>
<svg style="left:880px;top:113px;" width="18" height="16" viewBox="0 0 18 16"><ellipse cx="7.5" cy="8" rx="7" ry="4.5" stroke="#e4e6ea" stroke-width="1.2" fill="none" stroke-dasharray="5 2"/><circle cx="7.5" cy="8" r="1" fill="#e4e6ea"/></svg>
<svg style="left:918px;top:65px;" width="18" height="16" viewBox="0 0 18 16"><path d="M0 12H3M5 12H8M10 12C16 12 16 4 10 4H7" stroke="#e4e6ea" stroke-width="1.3" fill="none"/><path d="M9 1.5L6 4L9 6.5" stroke="#e4e6ea" fill="none"/></svg>
<svg style="left:918px;top:89px;" width="18" height="16" viewBox="0 0 18 16"><rect x="2" y="3" width="13" height="10" stroke="#e4e6ea" stroke-width="1.3" fill="none"/><rect x="0.5" y="1.5" width="3" height="3" fill="#e4e6ea"/><rect x="13.5" y="11.5" width="3" height="3" fill="#e4e6ea"/></svg>
<svg style="left:918px;top:113px;" width="18" height="16" viewBox="0 0 18 16"><rect x="2.5" y="2.5" width="12" height="12" stroke="#e4e6ea" stroke-width="1.3" fill="none"/><path d="M3 8L8 3M3 12L12 3M5 14L14 5M9 14L14 9" stroke="#6fb6f0" stroke-width="1.1"/><path d="M0 2.5H17M0 14.5H17M2.5 0V17M14.5 0V17" stroke="#e4e6ea" stroke-width="0.8"/></svg>
<svg style="left:863.5px;top:72.5px;" width="5" height="3" viewBox="0 0 5 3"><path d="M0 0H5L2.5 3Z" fill="#c5cad2"/></svg>
<svg style="left:863.5px;top:96.5px;" width="5" height="3" viewBox="0 0 5 3"><path d="M0 0H5L2.5 3Z" fill="#c5cad2"/></svg>
<svg style="left:863.5px;top:120.5px;" width="5" height="3" viewBox="0 0 5 3"><path d="M0 0H5L2.5 3Z" fill="#c5cad2"/></svg>
<svg style="left:901.5px;top:72.5px;" width="5" height="3" viewBox="0 0 5 3"><path d="M0 0H5L2.5 3Z" fill="#c5cad2"/></svg>
<svg style="left:901.5px;top:96.5px;" width="5" height="3" viewBox="0 0 5 3"><path d="M0 0H5L2.5 3Z" fill="#c5cad2"/></svg>
<svg style="left:901.5px;top:120.5px;" width="5" height="3" viewBox="0 0 5 3"><path d="M0 0H5L2.5 3Z" fill="#c5cad2"/></svg>
<svg style="left:941.5px;top:96.5px;" width="5" height="3" viewBox="0 0 5 3"><path d="M0 0H5L2.5 3Z" fill="#c5cad2"/></svg>
<svg style="left:941.5px;top:120.5px;" width="5" height="3" viewBox="0 0 5 3"><path d="M0 0H5L2.5 3Z" fill="#c5cad2"/></svg>
<svg style="left:961px;top:65px;" width="16" height="16" viewBox="0 0 16 16"><path d="M8 0.5V15.5M0.5 8H15.5" stroke="#e4e6ea" stroke-width="1.4"/><path d="M8 0L5.5 3H10.5ZM8 16L5.5 13H10.5ZM0 8L3 5.5V10.5ZM16 8L13 5.5V10.5Z" fill="#e4e6ea"/></svg>
<span style="left:982px;top:65.0px;font-size:12px;line-height:16px;color:#e8eaee;letter-spacing:0.29px;">Move</span>
<svg style="left:961px;top:89px;" width="16" height="16" viewBox="0 0 16 16"><circle cx="4" cy="4" r="3" stroke="#e4e6ea" stroke-width="1.2" fill="none"/><circle cx="6.5" cy="12" r="2.8" stroke="#6fb6f0" stroke-width="1.2" fill="none"/><circle cx="12" cy="12" r="2.8" stroke="#6fb6f0" stroke-width="1.2" fill="none"/><path d="M9 3H13V7M11.3 5.3L13 7L14.7 5.3" stroke="#e4e6ea" fill="none"/></svg>
<span style="left:982px;top:89.0px;font-size:12px;line-height:16px;color:#e8eaee;letter-spacing:0.12px;">Copy</span>
<svg style="left:961px;top:113px;" width="16" height="16" viewBox="0 0 16 16"><rect x="1" y="1" width="7" height="14" stroke="#e4e6ea" stroke-width="1.2" fill="none"/><path d="M8 15H15L10 2" stroke="#e4e6ea" stroke-width="1.2" fill="none"/><path d="M4 7V12M2 10H6" stroke="#e4e6ea"/></svg>
<span style="left:982px;top:113.0px;font-size:12px;line-height:16px;color:#e8eaee;letter-spacing:-0.07px;">Stretch</span>
<svg style="left:1033px;top:65px;" width="16" height="16" viewBox="0 0 16 16"><path d="M13.5 5A6.5 6.5 0 1 0 14.5 9" stroke="#e4e6ea" stroke-width="1.5" fill="none"/><path d="M9 0.5L14.5 1V6.5Z" fill="#e4e6ea"/></svg>
<span style="left:1054px;top:65.0px;font-size:12px;line-height:16px;color:#e8eaee;letter-spacing:-0.14px;">Rotate</span>
<svg style="left:1033px;top:89px;" width="16" height="16" viewBox="0 0 16 16"><path d="M6.5 3V14H1Z" stroke="#e4e6ea" stroke-width="1.2" fill="none"/><path d="M9.5 3V14H15Z" stroke="#6fb6f0" stroke-width="1.2" fill="none"/></svg>
<span style="left:1054px;top:89.0px;font-size:12px;line-height:16px;color:#e8eaee;letter-spacing:0.36px;">Mirror</span>
<svg style="left:1033px;top:113px;" width="16" height="16" viewBox="0 0 16 16"><rect x="1" y="1" width="14" height="14" stroke="#e4e6ea" stroke-width="1.2" fill="none"/><rect x="1" y="8" width="7" height="7" stroke="#e4e6ea" stroke-width="1.2" fill="none"/></svg>
<span style="left:1054px;top:113.0px;font-size:12px;line-height:16px;color:#e8eaee;letter-spacing:-0.50px;">Scale</span>
<svg style="left:1102px;top:65px;" width="16" height="16" viewBox="0 0 16 16"><path d="M3 1L11 15M13 1L8 9" stroke="#e4e6ea" stroke-width="1.3"/><circle cx="12" cy="13" r="2" stroke="#e4e6ea" fill="none"/><path d="M0 2H6" stroke="#e4e6ea"/><path d="M5 14H8" stroke="#e4e6ea"/></svg>
<span style="left:1123px;top:65.0px;font-size:12px;line-height:16px;color:#e8eaee;letter-spacing:-0.01px;">Trim</span>
<svg style="left:1156.5px;top:72.5px;" width="5" height="3" viewBox="0 0 5 3"><path d="M0 0H5L2.5 3Z" fill="#c5cad2"/></svg>
<svg style="left:1102px;top:89px;" width="16" height="16" viewBox="0 0 16 16"><path d="M1 15V9C1 4 4 1 9 1H15" stroke="#e4e6ea" stroke-width="1.3" fill="none"/></svg>
<span style="left:1123px;top:89.0px;font-size:12px;line-height:16px;color:#e8eaee;letter-spacing:0.03px;">Fillet</span>
<svg style="left:1158.5px;top:96.5px;" width="5" height="3" viewBox="0 0 5 3"><path d="M0 0H5L2.5 3Z" fill="#c5cad2"/></svg>
<svg style="left:1102px;top:113px;" width="16" height="16" viewBox="0 0 16 16"><g stroke="#e4e6ea" stroke-width="1.2" fill="none"><rect x="1" y="1" width="5.5" height="5.5"/><rect x="9.5" y="1" width="5.5" height="5.5"/><rect x="1" y="9.5" width="5.5" height="5.5" stroke="#6fb6f0"/><rect x="9.5" y="9.5" width="5.5" height="5.5" stroke="#6fb6f0"/></g></svg>
<span style="left:1123px;top:113.0px;font-size:12px;line-height:16px;color:#e8eaee;letter-spacing:-0.03px;">Array</span>
<svg style="left:1158.5px;top:120.5px;" width="5" height="3" viewBox="0 0 5 3"><path d="M0 0H5L2.5 3Z" fill="#c5cad2"/></svg>
<svg style="left:1177px;top:65px;" width="16" height="16" viewBox="0 0 16 16"><path d="M3 11L11 1L15 5L7 13Z" fill="#f4c27a"/><path d="M3 11L7 13L5 14.5H1.5Z" fill="#e25555"/><path d="M0 15.5H16" stroke="#e4e6ea"/></svg>
<svg style="left:1177px;top:89px;" width="16" height="16" viewBox="0 0 16 16"><g stroke="#9fcbf2" stroke-width="1.2" fill="none"><rect x="1" y="5" width="10" height="10"/><path d="M1 5L5 1H15V11L11 15M11 5L15 1"/></g></svg>
<svg style="left:1177px;top:113px;" width="16" height="16" viewBox="0 0 16 16"><path d="M15 2H7A6 6 0 0 0 7 14H15M15 5H8A3 3 0 0 0 8 11H15" stroke="#8cc3f3" stroke-width="1.3" fill="none"/></svg>
<div style="left:1206px;top:61px;width:59px;height:72px;background:#3f5068;border:1px solid #6a9fd0;box-sizing:border-box;"></div>
<svg style="left:1218px;top:64px;" width="36" height="34" viewBox="0 0 36 34"><path d="M1 10L10 2H28L19 10Z" fill="#c9cdd4"/><path d="M1 16L10 8H28L19 16Z" fill="#9ea3ac"/><path d="M1 22L10 14H28L19 22Z" fill="#c9cdd4"/><rect x="21" y="13" width="13" height="19" fill="#d5d9df"/><rect x="23" y="15" width="9" height="7" fill="#55b4f2"/><path d="M23 25H32M23 28.5H32" stroke="#3b4453" stroke-width="1.3"/></svg>
<span style="left:1085.5px;width:300px;text-align:center;top:99.0px;font-size:12px;line-height:16px;color:#e8eaee;">Layer</span>
<span style="left:1085.5px;width:300px;text-align:center;top:114.0px;font-size:12px;line-height:16px;color:#e8eaee;">Properties</span>
<div style="left:1267px;top:62px;width:207px;height:22px;background:#4a5363;border:1px solid #2c333e;box-sizing:border-box;"></div>
<svg style="left:1272px;top:65px;" width="12" height="16" viewBox="0 0 12 16"><circle cx="6" cy="5.5" r="5" fill="#f6c95e"/><rect x="3.8" y="10" width="4.4" height="4.5" fill="#e4e6ea"/></svg>
<svg style="left:1289px;top:65px;" width="16" height="16" viewBox="0 0 16 16"><g stroke="#f6c445" stroke-width="1.6"><path d="M8 0V16" transform="rotate(0 8 8)"/><path d="M8 0V16" transform="rotate(45 8 8)"/><path d="M8 0V16" transform="rotate(90 8 8)"/><path d="M8 0V16" transform="rotate(135 8 8)"/></g><circle cx="8" cy="8" r="4.3" fill="#f6c445"/></svg>
<svg style="left:1309px;top:64px;" width="15" height="17" viewBox="0 0 15 17"><path d="M8 8V5A3 3 0 0 1 14 5" stroke="#f6c445" stroke-width="1.8" fill="none"/><rect x="1" y="8" width="11" height="8.5" fill="#f6c445"/><rect x="5.7" y="10.5" width="1.6" height="3.5" fill="#3b4453"/></svg>
<div style="left:1329px;top:66px;width:14px;height:14px;background:#ffffff;"></div>
<span style="left:1348px;top:66.0px;font-size:12px;line-height:16px;color:#e8eaee;letter-spacing:-0.50px;">H3D_Areas</span>
<svg style="left:1463.0px;top:72.0px;" width="8" height="4" viewBox="0 0 8 4"><path d="M0 0H8L4.0 4Z" fill="#d5d9df"/></svg>
<svg style="left:1270px;top:89px;" width="17" height="17" viewBox="0 0 17 17"><path d="M0 7.5L6 2.5H16L10 7.5Z" fill="#dfe2e6"/><path d="M0 10.5L6 5.5H16L14.8 6.5H6.5L1.5 10.5Z" fill="#b4bac4"/><path d="M0 13L6 8H16L14.8 9H6.5L1.5 13Z" fill="#dfe2e6"/><circle cx="11.5" cy="11.5" r="3.2" fill="#4ed0c0"/><rect x="10.5" y="14" width="2" height="2.5" fill="#e4e6ea"/></svg>
<svg style="left:1293px;top:89px;" width="17" height="17" viewBox="0 0 17 17"><path d="M0 7.5L6 2.5H16L10 7.5Z" fill="#dfe2e6"/><path d="M0 10.5L6 5.5H16L14.8 6.5H6.5L1.5 10.5Z" fill="#b4bac4"/><path d="M0 13L6 8H16L14.8 9H6.5L1.5 13Z" fill="#dfe2e6"/><path d="M14 9L9 15M9 15V11.5M9 15H12.5" stroke="#e4e6ea" stroke-width="1.2" fill="none"/></svg>
<svg style="left:1318px;top:89px;" width="17" height="17" viewBox="0 0 17 17"><path d="M0 7.5L6 2.5H16L10 7.5Z" fill="#dfe2e6"/><path d="M0 10.5L6 5.5H16L14.8 6.5H6.5L1.5 10.5Z" fill="#b4bac4"/><path d="M0 13L6 8H16L14.8 9H6.5L1.5 13Z" fill="#dfe2e6"/><g stroke="#4ed0c0" stroke-width="1.3"><path d="M12 8V16M8 12H16M9.2 9.2L14.8 14.8M14.8 9.2L9.2 14.8"/></g></svg>
<svg style="left:1342px;top:89px;" width="17" height="17" viewBox="0 0 17 17"><path d="M0 7.5L6 2.5H16L10 7.5Z" fill="#dfe2e6"/><path d="M0 10.5L6 5.5H16L14.8 6.5H6.5L1.5 10.5Z" fill="#b4bac4"/><path d="M0 13L6 8H16L14.8 9H6.5L1.5 13Z" fill="#dfe2e6"/><rect x="9" y="10.5" width="7" height="6" fill="#4ed0c0"/><path d="M10.5 10.5V8.5A2 2 0 0 1 14.5 8.5V10.5" stroke="#4ed0c0" fill="none" stroke-width="1.2"/></svg>
<svg style="left:1366px;top:89px;" width="18" height="17" viewBox="0 0 18 17"><path d="M0 10L6 5H16L10 10Z" fill="#c9cdd4"/><path d="M0 13L6 8H16L10 13Z" fill="#9ea3ac"/><path d="M0 16L6 11H16L10 16Z" fill="#c9cdd4"/><circle cx="11" cy="3" r="2.5" fill="#55b4f2"/><path d="M6.5 8.5C6.5 5.5 15.5 5.5 15.5 8.5Z" fill="#55b4f2"/></svg>
<span style="left:1387px;top:89.0px;font-size:12px;line-height:16px;color:#e8eaee;letter-spacing:-0.02px;">Make Current</span>
<svg style="left:1270px;top:113px;" width="17" height="17" viewBox="0 0 17 17"><path d="M0 7.5L6 2.5H16L10 7.5Z" fill="#dfe2e6"/><path d="M0 10.5L6 5.5H16L14.8 6.5H6.5L1.5 10.5Z" fill="#b4bac4"/><path d="M0 13L6 8H16L14.8 9H6.5L1.5 13Z" fill="#dfe2e6"/><circle cx="11.5" cy="11.5" r="3.2" fill="#f6c445"/><rect x="10.5" y="14" width="2" height="2.5" fill="#e4e6ea"/><path d="M0 15L6 10H10" stroke="#c9cdd4" fill="none"/></svg>
<svg style="left:1293px;top:113px;" width="17" height="17" viewBox="0 0 17 17"><path d="M0 7.5L6 2.5H16L10 7.5Z" fill="#dfe2e6"/><path d="M0 10.5L6 5.5H16L14.8 6.5H6.5L1.5 10.5Z" fill="#b4bac4"/><path d="M0 13L6 8H16L14.8 9H6.5L1.5 13Z" fill="#dfe2e6"/><path d="M9 15L14 9M14 9V12.5M14 9H10.5" stroke="#e4e6ea" stroke-width="1.2" fill="none"/></svg>
<svg style="left:1318px;top:113px;" width="17" height="17" viewBox="0 0 17 17"><path d="M0 7.5L6 2.5H16L10 7.5Z" fill="#dfe2e6"/><path d="M0 10.5L6 5.5H16L14.8 6.5H6.5L1.5 10.5Z" fill="#b4bac4"/><path d="M0 13L6 8H16L14.8 9H6.5L1.5 13Z" fill="#dfe2e6"/><g stroke="#f6c445" stroke-width="1.3"><path d="M12 8V16M8 12H16M9.2 9.2L14.8 14.8M14.8 9.2L9.2 14.8"/></g><circle cx="12" cy="12" r="2.2" fill="#f6c445"/></svg>
<svg style="left:1342px;top:113px;" width="17" height="17" viewBox="0 0 17 17"><path d="M0 7.5L6 2.5H16L10 7.5Z" fill="#dfe2e6"/><path d="M0 10.5L6 5.5H16L14.8 6.5H6.5L1.5 10.5Z" fill="#b4bac4"/><path d="M0 13L6 8H16L14.8 9H6.5L1.5 13Z" fill="#dfe2e6"/><rect x="7.5" y="10.5" width="7" height="6" fill="#f6c445"/><path d="M12 10.5V8.5A2 2 0 0 1 16 8.5" stroke="#f6c445" fill="none" stroke-width="1.2"/></svg>
<svg style="left:1366px;top:113px;" width="18" height="17" viewBox="0 0 18 17"><path d="M0 8L6 3H16L10 8Z" fill="#c9cdd4"/><path d="M0 11L6 6H16L10 11Z" fill="#9ea3ac"/><path d="M0 14L6 9H16L10 14Z" fill="#c9cdd4"/><path d="M9 9L13 6L17 11L13 14Z" fill="#e4e6ea"/><path d="M11 12L14 16" stroke="#f4c27a" stroke-width="2"/></svg>
<span style="left:1387px;top:113.0px;font-size:12px;line-height:16px;color:#e8eaee;letter-spacing:-0.05px;">Match Layer</span>
<svg style="left:1490px;top:64px;" width="28" height="33" viewBox="0 0 28 33"><rect x="0" y="3" width="22" height="26" rx="1" fill="#e0b070"/><rect x="6" y="0" width="10" height="6" rx="1" fill="#c9cdd4"/><rect x="4" y="7" width="14" height="1.5" fill="#b98a4a"/><path d="M9 11H21L27 17V33H9Z" fill="#e4e6ea"/><path d="M21 11V17H27" fill="#aeb4be"/></svg>
<span style="left:1354px;width:300px;text-align:center;top:99.0px;font-size:12px;line-height:16px;color:#e8eaee;">Paste</span>
<svg style="left:1501.5px;top:117.0px;" width="5" height="3" viewBox="0 0 5 3"><path d="M0 0H5L2.5 3Z" fill="#c5cad2"/></svg>
<svg style="left:1534px;top:65px;" width="17" height="16" viewBox="0 0 17 16"><rect x="1" y="1" width="10" height="13" fill="#e4e6ea"/><path d="M3 4H9M3 7H9M3 10H6" stroke="#3b4453" stroke-width="1.1"/><path d="M8 8L15 15M15 8L8 15" stroke="#e4e6ea" stroke-width="1.3"/><circle cx="14.5" cy="14.5" r="1.5" fill="none" stroke="#e4e6ea"/></svg>
<svg style="left:1534px;top:89px;" width="17" height="16" viewBox="0 0 17 16"><path d="M1 1H8L10 3V11H1Z" fill="#e4e6ea"/><path d="M6 5H13L16 8V16H6Z" fill="#e4e6ea" stroke="#3b4453" stroke-width="0.8"/></svg>
<svg style="left:1534px;top:113px;" width="17" height="16" viewBox="0 0 17 16"><rect x="1" y="1" width="11" height="12" fill="#e4e6ea"/><rect x="3" y="3" width="7" height="3" fill="#55b4f2"/><path d="M3 8H10M3 10.5H7" stroke="#3b4453" stroke-width="1.1"/><path d="M9 9L13 7L16 12L12 14Z" fill="#f6c445"/></svg>
<div style="left:20px;top:164px;width:16px;height:2px;background:#e4e6ea;"></div>
<div style="left:20px;top:169px;width:16px;height:2px;background:#e4e6ea;"></div>
<div style="left:20px;top:174px;width:16px;height:2px;background:#e4e6ea;"></div>
<svg style="left:46px;top:160px;" width="8" height="20" viewBox="0 0 8 20"><path d="M7 1L1 19" stroke="#4a5261" stroke-width="1"/></svg>
<span style="left:62px;top:162.0px;font-size:12px;line-height:16px;color:#e4e6ea;letter-spacing:-0.17px;">Start</span>
<svg style="left:90px;top:158px;" width="212" height="24" viewBox="0 0 212 24"><path d="M13 0.5H207.5L199 23.5H4Z" fill="#3b4453"/></svg>
<span style="left:110px;top:162.0px;font-size:12px;line-height:16px;color:#fff;font-weight:bold;letter-spacing:-0.28px;">Orlenbach_Planung Variante*</span>
<svg style="left:278px;top:165px;" width="10" height="10" viewBox="0 0 10 10"><path d="M1 1L9 9M9 1L1 9" stroke="#aeb4be" stroke-width="1.8"/></svg>
<svg style="left:308px;top:163px;" width="14" height="14" viewBox="0 0 14 14"><path d="M7 0V14M0 7H14" stroke="#e4e6ea" stroke-width="1.8"/></svg>
<svg style="left:332px;top:160px;" width="8" height="20" viewBox="0 0 8 20"><path d="M7 1L1 19" stroke="#4a5261" stroke-width="1"/></svg>
<div style="left:2.6px;top:188px;width:671.4px;height:1166px;background:#3b4453;"></div>
<div style="left:2.6px;top:188px;width:667.4px;height:20px;background:linear-gradient(90deg,#353c49,#2e3441 55%);"></div>
<div style="left:2.6px;top:208px;width:667.4px;height:2px;background:#3a4150;"></div>
<div style="left:2.6px;top:210px;width:667.4px;height:26px;background:linear-gradient(90deg,#353c49,#2e3441 55%);"></div>
<div style="left:2.6px;top:236px;width:667.4px;height:22px;background:#252c37;"></div>
<div style="left:10px;top:191.5px;width:1px;height:1px;background:#c9cdd4;"></div>
<div style="left:12px;top:191.5px;width:1px;height:1px;background:#c9cdd4;"></div>
<div style="left:10px;top:193.5px;width:1px;height:1px;background:#c9cdd4;"></div>
<div style="left:12px;top:193.5px;width:1px;height:1px;background:#c9cdd4;"></div>
<div style="left:10px;top:195.5px;width:1px;height:1px;background:#c9cdd4;"></div>
<div style="left:12px;top:195.5px;width:1px;height:1px;background:#c9cdd4;"></div>
<div style="left:10px;top:197.5px;width:1px;height:1px;background:#c9cdd4;"></div>
<div style="left:12px;top:197.5px;width:1px;height:1px;background:#c9cdd4;"></div>
<div style="left:10px;top:199.5px;width:1px;height:1px;background:#c9cdd4;"></div>
<div style="left:12px;top:199.5px;width:1px;height:1px;background:#c9cdd4;"></div>
<div style="left:10px;top:201.5px;width:1px;height:1px;background:#c9cdd4;"></div>
<div style="left:12px;top:201.5px;width:1px;height:1px;background:#c9cdd4;"></div>
<span style="left:19px;top:189.0px;font-size:12px;line-height:16px;color:#f0f2f5;letter-spacing:-0.73px;">HELIOS3D</span>
<div style="left:26px;top:215px;width:3px;height:18px;background:#c9cdd4;border-radius:1px;"></div>
<svg style="left:36px;top:216px;" width="17" height="15" viewBox="0 0 17 15"><path d="M0.5 7.5C4 2 13 2 16.5 7.5C13 13 4 13 0.5 7.5Z" fill="none" stroke="#d5d9df" stroke-width="1.2"/><circle cx="8.5" cy="7.5" r="2.6" fill="none" stroke="#d5d9df" stroke-width="1.1"/><path d="M2.5 13.5L14.5 1.5" stroke="#d5d9df" stroke-width="1.1"/></svg>
<svg style="left:60.5px;top:216px;" width="17" height="15" viewBox="0 0 17 15"><path d="M0.5 7.5C4 2 13 2 16.5 7.5C13 13 4 13 0.5 7.5Z" fill="none" stroke="#f1c232" stroke-width="1.2"/><circle cx="8.5" cy="7.5" r="2.6" fill="none" stroke="#f1c232" stroke-width="1.1"/><path d="M2.5 13.5L14.5 1.5" stroke="#f1c232" stroke-width="1.1"/></svg>
<svg style="left:86px;top:216px;" width="16" height="16" viewBox="0 0 16 16"><path d="M2 7A6 6 0 0 1 13 4.5M14 9A6 6 0 0 1 3 11.5" fill="none" stroke="#f1c232" stroke-width="1.7"/><path d="M13.8 0.8V5.3H9.3ZM2.2 15.2V10.7H6.7Z" fill="#f1c232"/></svg>
<svg style="left:111.5px;top:216px;" width="16" height="16" viewBox="0 0 16 16"><path d="M2 7A6 6 0 0 1 13 4.5M14 9A6 6 0 0 1 3 11.5" fill="none" stroke="#6aa6f0" stroke-width="1.7"/><path d="M13.8 0.8V5.3H9.3ZM2.2 15.2V10.7H6.7Z" fill="#6aa6f0"/></svg>
<svg style="left:146px;top:220px;" width="8" height="8" viewBox="0 0 8 8"><path d="M0.5 0.5H7.5" stroke="#d5d9df"/><path d="M0.8 3H7.2L4 7Z" fill="none" stroke="#d5d9df" stroke-width="0.9"/></svg>
<svg style="left:259px;top:236px;" width="64" height="22" viewBox="0 0 64 22"><path d="M0 22V5Q0 1.5 3.5 1.5H60.5Q64 1.5 64 5V22Z" fill="#3b4453"/></svg>
<span style="left:15px;top:239.5px;font-size:12px;line-height:16px;color:#cfd3da;letter-spacing:-0.13px;">Placement</span>
<span style="left:95px;top:239.5px;font-size:12px;line-height:16px;color:#cfd3da;letter-spacing:-0.09px;">Insert</span>
<span style="left:147px;top:239.5px;font-size:12px;line-height:16px;color:#cfd3da;letter-spacing:-0.23px;">Electric</span>
<span style="left:208px;top:239.5px;font-size:12px;line-height:16px;color:#cfd3da;letter-spacing:0.41px;">Output</span>
<span style="left:269px;top:239.5px;font-size:12px;line-height:16px;color:#fff;letter-spacing:-0.15px;">Analysis</span>
<span style="left:335px;top:239.5px;font-size:12px;line-height:16px;color:#cfd3da;letter-spacing:-0.09px;">Others</span>
<span style="left:389.5px;top:237.5px;font-size:16px;line-height:20px;color:#cdd1d7;font-weight:bold;">?</span>
<svg style="left:410.0px;top:246.25px;" width="6" height="3.5" viewBox="0 0 6 3.5"><path d="M0 0H6L3.0 3.5Z" fill="#e4e6ea"/></svg>
<div style="left:216px;top:261px;width:1px;height:88px;background:#1e252e;"></div>
<div style="left:339px;top:261px;width:1px;height:88px;background:#1e252e;"></div>
<svg style="left:18px;top:264px;" width="33" height="34" viewBox="0 0 33 34"><rect x="0.5" y="3.5" width="8" height="2.6" fill="#b9c7d6" stroke="#d5d9df" stroke-width="0.7"/><rect x="10.7" y="3.5" width="8" height="2.6" fill="#b9c7d6" stroke="#d5d9df" stroke-width="0.7"/><rect x="20.9" y="3.5" width="8" height="2.6" fill="#b9c7d6" stroke="#d5d9df" stroke-width="0.7"/><rect x="0.5" y="8.6" width="8" height="2.6" fill="#b9c7d6" stroke="#d5d9df" stroke-width="0.7"/><rect x="10.7" y="8.6" width="8" height="2.6" fill="#b9c7d6" stroke="#d5d9df" stroke-width="0.7"/><rect x="20.9" y="8.6" width="8" height="2.6" fill="#b9c7d6" stroke="#d5d9df" stroke-width="0.7"/><rect x="0.5" y="13.7" width="8" height="2.6" fill="#b9c7d6" stroke="#d5d9df" stroke-width="0.7"/><rect x="10.7" y="13.7" width="8" height="2.6" fill="#b9c7d6" stroke="#d5d9df" stroke-width="0.7"/><rect x="20.9" y="13.7" width="8" height="2.6" fill="none" stroke="#d5d9df" stroke-width="0.7"/><rect x="0.5" y="18.799999999999997" width="8" height="2.6" fill="#b9c7d6" stroke="#d5d9df" stroke-width="0.7"/><rect x="10.7" y="18.799999999999997" width="8" height="2.6" fill="#b9c7d6" stroke="#d5d9df" stroke-width="0.7"/><rect x="20.9" y="18.799999999999997" width="8" height="2.6" fill="none" stroke="#d5d9df" stroke-width="0.7"/><rect x="0.5" y="23.9" width="8" height="2.6" fill="none" stroke="#d5d9df" stroke-width="0.7"/><rect x="10.7" y="23.9" width="8" height="2.6" fill="none" stroke="#d5d9df" stroke-width="0.7"/><rect x="20.9" y="23.9" width="8" height="2.6" fill="none" stroke="#d5d9df" stroke-width="0.7"/><rect x="0.5" y="29.0" width="8" height="2.6" fill="none" stroke="#d5d9df" stroke-width="0.7"/><rect x="10.7" y="29.0" width="8" height="2.6" fill="none" stroke="#d5d9df" stroke-width="0.7"/><rect x="20.9" y="29.0" width="8" height="2.6" fill="none" stroke="#d5d9df" stroke-width="0.7"/><path d="M25.5 0.2L26.7 3.2L29.5 1.5L28.7 4.6L32.0 4.9L29.5 7.0L32.0 9.1L28.7 9.4L29.5 12.5L26.7 10.8L25.5 13.8L24.3 10.8L21.5 12.5L22.3 9.4L19.0 9.1L21.5 7.0L19.0 4.9L22.3 4.6L21.5 1.5L24.3 3.2Z" fill="#fbd16a"/></svg>
<span style="left:-114px;width:300px;text-align:center;top:301.7px;font-size:12px;line-height:16px;color:#e8eaee;">Markers</span>
<svg style="left:32.5px;top:323.75px;" width="6" height="3.5" viewBox="0 0 6 3.5"><path d="M0 0H6L3.0 3.5Z" fill="#e4e6ea"/></svg>
<svg style="left:75px;top:265px;" width="34" height="32" viewBox="0 0 34 32"><rect x="1" y="7" width="26" height="16" fill="#3fa2f7"/><path d="M5.3 7V23" stroke="#bfe0ff" stroke-width="0.8"/><path d="M9.7 7V23" stroke="#bfe0ff" stroke-width="0.8"/><path d="M14.0 7V23" stroke="#bfe0ff" stroke-width="0.8"/><path d="M18.3 7V23" stroke="#bfe0ff" stroke-width="0.8"/><path d="M22.6 7V23" stroke="#bfe0ff" stroke-width="0.8"/><path d="M1 15H27" stroke="#bfe0ff" stroke-width="0.8"/><path d="M4.5 23V30M20.5 23V30" stroke="#d5d9df" stroke-width="1"/><path d="M1 2.5H27M3.5 0.5L1 2.5L3.5 4.5M24.5 0.5L27 2.5L24.5 4.5M31 8V22M29 10L31 7.5L33 10M29 20L31 22.5L33 20" stroke="#d5d9df" stroke-width="0.9" fill="none"/></svg>
<span style="left:-58px;width:300px;text-align:center;top:301.7px;font-size:12px;line-height:16px;color:#e8eaee;">Array</span>
<span style="left:-58px;width:300px;text-align:center;top:317.8px;font-size:12px;line-height:16px;color:#e8eaee;">Definition</span>
<svg style="left:130px;top:268px;" width="32" height="26" viewBox="0 0 32 26"><path d="M8 7.5L30 20.5M8 18.5L30 5.5" stroke="#b9bec6" stroke-width="2.4"/><ellipse cx="4.8" cy="5" rx="3.4" ry="2.8" fill="none" stroke="#07090c" stroke-width="2.1" transform="rotate(25 4.8 5)"/><ellipse cx="4.8" cy="21" rx="3.4" ry="2.8" fill="none" stroke="#07090c" stroke-width="2.1" transform="rotate(-25 4.8 21)"/><path d="M15 13H30" stroke="#07090c" stroke-width="1" stroke-dasharray="2 1.2"/></svg>
<span style="left:-4px;width:300px;text-align:center;top:301.7px;font-size:12px;line-height:16px;color:#e8eaee;">Cross</span>
<span style="left:-3.5px;width:300px;text-align:center;top:317.8px;font-size:12px;line-height:16px;color:#e8eaee;">Section</span>
<div style="left:177px;top:266px;width:30px;height:31px;border:3px solid #e4e6ea;box-sizing:border-box;"></div>
<div style="left:190px;top:279px;width:4px;height:4px;background:#2f9bf5;"></div>
<span style="left:42px;width:300px;text-align:center;top:301.7px;font-size:12px;line-height:16px;color:#e8eaee;">Post</span>
<span style="left:42px;width:300px;text-align:center;top:317.8px;font-size:12px;line-height:16px;color:#e8eaee;">Labels</span>
<span style="left:-38.5px;width:300px;text-align:center;top:334.0px;font-size:12px;line-height:16px;color:#e8eaee;">Legend</span>
<svg style="left:232px;top:266px;" width="34" height="32" viewBox="0 0 34 32"><rect x="0.7" y="0.7" width="21" height="29" rx="2" fill="none" stroke="#c9cdd4" stroke-width="1.2"/><rect x="3.5" y="3.5" width="15.5" height="6" fill="none" stroke="#c9cdd4" stroke-width="1.1"/><rect x="3.5" y="13.0" width="2.8" height="2.8" fill="none" stroke="#c9cdd4" stroke-width="1"/><rect x="8.2" y="13.0" width="2.8" height="2.8" fill="none" stroke="#c9cdd4" stroke-width="1"/><rect x="12.9" y="13.0" width="2.8" height="2.8" fill="none" stroke="#c9cdd4" stroke-width="1"/><rect x="3.5" y="18.0" width="2.8" height="2.8" fill="none" stroke="#c9cdd4" stroke-width="1"/><rect x="8.2" y="18.0" width="2.8" height="2.8" fill="none" stroke="#c9cdd4" stroke-width="1"/><rect x="12.9" y="18.0" width="2.8" height="2.8" fill="none" stroke="#c9cdd4" stroke-width="1"/><rect x="3.5" y="23.0" width="2.8" height="2.8" fill="none" stroke="#c9cdd4" stroke-width="1"/><rect x="8.2" y="23.0" width="2.8" height="2.8" fill="none" stroke="#c9cdd4" stroke-width="1"/><rect x="12.9" y="23.0" width="2.8" height="2.8" fill="none" stroke="#c9cdd4" stroke-width="1"/><rect x="17.6" y="13" width="2.2" height="12.8" fill="none" stroke="#c9cdd4" stroke-width="0.9"/><text x="27.5" y="29" font-size="19" fill="#43d675" text-anchor="middle" font-family="Liberation Sans, sans-serif">$</text></svg>
<span style="left:99px;width:300px;text-align:center;top:301.7px;font-size:12px;line-height:16px;color:#e8eaee;">Calculate</span>
<svg style="left:291px;top:265px;" width="34" height="32" viewBox="0 0 34 32"><g fill="none" stroke="#c9cdd4" stroke-width="1.3"><circle cx="17" cy="3.2" r="2.4"/><path d="M9 12C12 7 24 7 27 12C29 11 31 9 30.5 7.5C32.5 9 31 13 28.5 14.5C30 19 28 22 26 23.5V28H22V25.5H14V28H10V23.5C8 22.5 7 21 6 19H3V14.5H5.5C6 13.5 7 12.5 9 12V9Z"/></g><text x="18" y="22" font-size="11" fill="#c9cdd4" text-anchor="middle" font-family="Liberation Sans, sans-serif">$</text></svg>
<span style="left:157.5px;width:300px;text-align:center;top:301.7px;font-size:12px;line-height:16px;color:#e8eaee;">Optimize</span>
<span style="left:129px;width:300px;text-align:center;top:334.0px;font-size:12px;line-height:16px;color:#e8eaee;">Yield</span>
<div style="left:2.6px;top:353px;width:42.4px;height:999px;background:#222933;"></div>
<div style="left:44.5px;top:353px;width:1px;height:4px;background:#dfe2e7;"></div>
<div style="left:44.5px;top:557px;width:1px;height:795px;background:#dfe2e7;"></div>
<div style="left:9.5px;top:354px;width:35.2px;height:41.5px;background:#2a313c;"></div>
<div style="left:9.5px;top:437.5px;width:35.2px;height:38.5px;background:#2a313c;"></div>
<div style="left:9.5px;top:477px;width:35.2px;height:39px;background:#2a313c;"></div>
<div style="left:9.5px;top:517px;width:35.2px;height:38.5px;background:#2a313c;"></div>
<div style="left:9.5px;top:396.5px;width:35.2px;height:40px;background:#343c49;"></div>
<div style="left:9.5px;top:396.5px;width:35.2px;height:1.2px;background:#eef0f3;"></div>
<div style="left:9.5px;top:396.5px;width:1.2px;height:40px;background:#eef0f3;"></div>
<div style="left:9.5px;top:556.5px;width:33px;height:1px;background:#596273;"></div>
<svg style="left:12px;top:361px;" width="30" height="30" viewBox="0 0 30 30"><g fill="none" stroke="#d5d9df" stroke-width="1.5"><path d="M29.2 17.8L28.4 20.5L24.3 21.2L22.9 22.9L23.1 27.1L20.5 28.4L17.2 26.0L15.0 26.2L12.2 29.2L9.5 28.4L8.8 24.3L7.1 22.9L2.9 23.1L1.6 20.5L4.0 17.2L3.8 15.0L0.8 12.2L1.6 9.5L5.7 8.8L7.1 7.1L6.9 2.9L9.5 1.6L12.8 4.0L15.0 3.8L17.8 0.8L20.5 1.6L21.2 5.7L22.9 7.1L27.1 6.9L28.4 9.5L26.0 12.8L26.2 15.0Z" stroke-linejoin="round"/><circle cx="15" cy="15" r="7.2"/><path d="M11 15L14 18L19.5 12" stroke-width="1.8"/></g></svg>
<svg style="left:12px;top:401px;" width="30" height="31" viewBox="0 0 30 31"><rect x="0.5" y="0.5" width="8" height="2.8" fill="none" stroke="#6fb0ee" stroke-width="1"/><rect x="10.5" y="0.5" width="8" height="2.8" fill="none" stroke="#6fb0ee" stroke-width="1"/><rect x="20.5" y="0.5" width="8" height="2.8" fill="none" stroke="#6fb0ee" stroke-width="1"/><rect x="0.5" y="5.7" width="8" height="2.8" fill="none" stroke="#6fb0ee" stroke-width="1"/><rect x="10.5" y="5.7" width="8" height="2.8" fill="none" stroke="#6fb0ee" stroke-width="1"/><rect x="20.5" y="5.7" width="8" height="2.8" fill="none" stroke="#6fb0ee" stroke-width="1"/><rect x="0.5" y="10.9" width="8" height="2.8" fill="none" stroke="#6fb0ee" stroke-width="1"/><rect x="10.5" y="10.9" width="8" height="2.8" fill="none" stroke="#6fb0ee" stroke-width="1"/><rect x="20.5" y="10.9" width="8" height="2.8" fill="none" stroke="#6fb0ee" stroke-width="1"/><rect x="0.5" y="16.1" width="8" height="2.8" fill="none" stroke="#6fb0ee" stroke-width="1"/><rect x="10.5" y="16.1" width="8" height="2.8" fill="none" stroke="#6fb0ee" stroke-width="1"/><rect x="20.5" y="16.1" width="8" height="2.8" fill="none" stroke="#6fb0ee" stroke-width="1"/><rect x="0.5" y="21.3" width="8" height="2.8" fill="none" stroke="#6fb0ee" stroke-width="1"/><rect x="10.5" y="21.3" width="8" height="2.8" fill="none" stroke="#6fb0ee" stroke-width="1"/><rect x="20.5" y="21.3" width="8" height="2.8" fill="none" stroke="#6fb0ee" stroke-width="1"/><rect x="0.5" y="26.5" width="8" height="2.8" fill="none" stroke="#6fb0ee" stroke-width="1"/><rect x="10.5" y="26.5" width="8" height="2.8" fill="none" stroke="#6fb0ee" stroke-width="1"/><rect x="20.5" y="26.5" width="8" height="2.8" fill="none" stroke="#6fb0ee" stroke-width="1"/></svg>
<svg style="left:13.5px;top:445px;" width="27" height="25" viewBox="0 0 27 25"><rect x="0" y="0" width="27" height="16" fill="#3fa2f7"/><path d="M4.5 0V16" stroke="#222933" stroke-width="0.8"/><path d="M9.0 0V16" stroke="#222933" stroke-width="0.8"/><path d="M13.5 0V16" stroke="#222933" stroke-width="0.8"/><path d="M18.0 0V16" stroke="#222933" stroke-width="0.8"/><path d="M22.5 0V16" stroke="#222933" stroke-width="0.8"/><path d="M0 8H27" stroke="#222933" stroke-width="0.8"/><path d="M4 16V25M23 16V25" stroke="#d5d9df" stroke-width="1.2"/></svg>
<svg style="left:13px;top:481px;" width="28" height="28" viewBox="0 0 28 28"><rect x="0" y="0.3" width="4.2" height="4.2" fill="#f6c445"/><rect x="5.5" y="1.6" width="22.5" height="1.6" fill="#f6c445"/><rect x="4" y="6.1" width="4.2" height="4.2" fill="#f6c445"/><rect x="9.5" y="7.4" width="18.5" height="1.6" fill="#f6c445"/><rect x="4" y="11.9" width="4.2" height="4.2" fill="#f6c445"/><rect x="9.5" y="13.2" width="18.5" height="1.6" fill="#f6c445"/><rect x="8" y="17.7" width="4.2" height="4.2" fill="#f6c445"/><rect x="13.5" y="19.0" width="14.5" height="1.6" fill="#f6c445"/><rect x="8" y="23.5" width="4.2" height="4.2" fill="#f6c445"/><rect x="13.5" y="24.8" width="14.5" height="1.6" fill="#f6c445"/></svg>
<svg style="left:12px;top:521.5px;" width="30" height="29" viewBox="0 0 30 34" preserveAspectRatio="none"><g stroke-linecap="round"><path d="M7 7L25 29" stroke="#d9dce1" stroke-width="4.5"/><path d="M3 4A6 6 0 0 0 9 11" stroke="#d9dce1" stroke-width="3" fill="none"/><path d="M27 32A5 5 0 0 0 29 25" stroke="#d9dce1" stroke-width="3" fill="none"/><path d="M5 30L22 10" stroke="#f39a3b" stroke-width="4"/><path d="M14 6L23 2L30 10L27 13L23 9L19 12Z" fill="#d9dce1" stroke="none"/></g></svg>
<div style="left:45.5px;top:356px;width:620px;height:26px;background:linear-gradient(#454e5c,#464f5d 50%,#424a59);border-radius:0 3px 0 0;"></div>
<svg style="left:56px;top:361px;" width="13" height="14" viewBox="0 0 13 14"><path d="M1 0.5H8.5L12.5 4.5V13.5H1Z" fill="#e4e6ea"/><path d="M8.5 0.5V4.5H12.5" fill="#9aa0aa"/></svg>
<svg style="left:78.5px;top:367.5px;" width="5" height="3" viewBox="0 0 5 3"><path d="M0 0H5L2.5 3Z" fill="#d5d9df"/></svg>
<svg style="left:94px;top:361px;" width="16" height="15" viewBox="0 0 16 15"><path d="M1 0.5H8.5L12.5 4.5V13.5H1Z" fill="#cfd3da"/><path d="M3 5H9M3 7.5H10M3 10H8" stroke="#7d8490" stroke-width="0.8"/><path d="M9 11L15 14.5M12 9.5L13.5 14" stroke="#9aa0aa" stroke-width="1.2"/></svg>
<div style="left:116px;top:361px;width:1px;height:15px;background:#c9cdd4;"></div>
<svg style="left:124px;top:360px;" width="11" height="16" viewBox="0 0 11 16"><path d="M5.5 0L11 7H7.5V16H3.5V7H0Z" fill="#e4e6ea"/></svg>
<svg style="left:149px;top:360px;" width="11" height="16" viewBox="0 0 11 16"><path d="M5.5 16L11 9H7.5V0H3.5V9H0Z" fill="#e4e6ea"/></svg>
<div style="left:169px;top:361px;width:1px;height:15px;background:#c9cdd4;"></div>
<svg style="left:174px;top:360px;" width="17" height="16" viewBox="0 0 17 16"><circle cx="6" cy="6" r="4.6" fill="#9aa0aa" stroke="#e4e6ea" stroke-width="1.3"/><path d="M9.5 9.5L14.5 14.5" stroke="#e4e6ea" stroke-width="2.2"/><path d="M12 3H16M14 1V5M12 7.5H16" stroke="#e4e6ea" stroke-width="1"/></svg>
<span style="left:202px;top:360.0px;font-size:13px;line-height:16px;color:#5d6675;">A</span>
<div style="left:223.7px;top:361.9px;width:11px;height:11.5px;background:#5a6372;border:1.5px solid #dfe2e7;box-sizing:border-box;"></div>
<span style="left:239px;top:360.0px;font-size:12px;line-height:16px;color:#f0f2f5;letter-spacing:-0.28px;">Select in Tree</span>
<div style="left:639px;top:361px;width:1px;height:15px;background:#c9cdd4;"></div>
<svg style="left:644px;top:361.5px;" width="16" height="13" viewBox="0 0 16 13"><rect x="0" y="0" width="16" height="13" fill="#050505"/><rect x="3" y="2" width="10" height="9" fill="#ffffff"/><path d="M1.5 1V12M14.5 1V12" stroke="#ffffff" stroke-width="1.2" stroke-dasharray="1.6 1.6"/><path d="M6 3.5L11 6.5L6 9.5Z" fill="#050505"/></svg>
<div style="left:51px;top:382px;width:614px;height:506px;background:#ffffff;"></div>
<div style="left:51px;top:382px;width:614px;height:16px;background:linear-gradient(#ffffff,#f1f2f4 60%,#e3e5e8);border-bottom:1px solid #c6c9ce;box-sizing:border-box;"></div>
<div style="left:267px;top:382px;width:1px;height:490px;background:#8d9096;"></div>
<div style="left:375px;top:382px;width:1px;height:490px;background:#8d9096;"></div>
<div style="left:463px;top:382px;width:1px;height:490px;background:#8d9096;"></div>
<div style="left:548px;top:382px;width:1px;height:490px;background:#8d9096;"></div>
<div style="left:593px;top:382px;width:1px;height:490px;background:#8d9096;"></div>
<div style="left:600px;top:383px;width:65px;height:14px;overflow:hidden;"></div>
<span style="left:55px;top:382.5px;font-size:11px;line-height:16px;color:#1a1a1a;letter-spacing:0.28px;">Object</span>
<span style="left:274px;top:382.5px;font-size:11px;line-height:16px;color:#1a1a1a;letter-spacing:0.08px;">Options</span>
<span style="left:384px;top:382.5px;font-size:11px;line-height:16px;color:#1a1a1a;letter-spacing:0.05px;">Power in kWp</span>
<span style="left:474px;top:382.5px;font-size:11px;line-height:16px;color:#1a1a1a;letter-spacing:0.07px;">Area in m²/ft²</span>
<span style="left:555px;top:381.5px;font-size:11px;line-height:16px;color:#1a1a1a;letter-spacing:0.13px;">Sync...</span>
<div style="left:600px;top:382px;width:65px;height:16px;overflow:hidden;"><span style="left:0;top:0.5px;font-size:11px;line-height:16px;color:#1a1a1a;letter-spacing:-0.1px;">Last placement</span></div>
<div style="left:80px;top:421px;width:1px;height:48px;background:repeating-linear-gradient(180deg,#777 0 1px,transparent 1px 2px);"></div>
<div style="left:96px;top:440px;width:1px;height:10px;background:repeating-linear-gradient(180deg,#777 0 1px,transparent 1px 2px);"></div>
<div style="left:96px;top:478px;width:1px;height:29px;background:repeating-linear-gradient(180deg,#777 0 1px,transparent 1px 2px);"></div>
<svg style="left:60px;top:407px;" width="9" height="9" viewBox="0 0 9 9"><rect x="0.5" y="0.5" width="8" height="8" fill="#fff" stroke="#8d9096"/><path d="M2 4.5H7" stroke="#111"/></svg>
<div style="left:70px;top:411px;width:6px;height:1px;background:repeating-linear-gradient(90deg,#777 0 1px,transparent 1px 2px);"></div>
<svg style="left:77px;top:404px;" width="16" height="16" viewBox="0 0 16 16"><rect x="0.5" y="0.5" width="15" height="15" fill="#f4fbf4" stroke="#111"/><path d="M1 5L6 1L10 6L15 3M1 11L5 7L10 6L13 12L15 9M5 7L7 15M6 1L5 7M10 6L7 15L13 12" stroke="#1a9a1a" stroke-width="0.9" fill="none"/></svg>
<span style="left:97px;top:403.8px;font-size:11px;line-height:16px;color:#1a1a1a;letter-spacing:0.03px;">AIW_Existing_Ground</span>
<span style="left:154.5px;width:300px;text-align:right;top:403.8px;font-size:11px;line-height:16px;color:#1a1a1a;letter-spacing:-0.2px;">12,712.7</span>
<svg style="left:76px;top:426px;" width="9" height="9" viewBox="0 0 9 9"><rect x="0.5" y="0.5" width="8" height="8" fill="#fff" stroke="#8d9096"/><path d="M2 4.5H7" stroke="#111"/></svg>
<div style="left:86px;top:430px;width:6px;height:1px;background:repeating-linear-gradient(90deg,#777 0 1px,transparent 1px 2px);"></div>
<svg style="left:93px;top:423px;" width="16" height="16" viewBox="0 0 16 16"><rect x="0.5" y="0.5" width="15" height="15" fill="#19f019" stroke="#0a7d0a" stroke-dasharray="2 1.5"/></svg>
<span style="left:113px;top:422.6px;font-size:11px;line-height:16px;color:#1a1a1a;letter-spacing:0.06px;">Fläche Süd</span>
<span style="left:154.5px;width:300px;text-align:right;top:422.6px;font-size:11px;line-height:16px;color:#1a1a1a;letter-spacing:-0.2px;">3,060.2</span>
<span style="left:239.5px;width:300px;text-align:right;top:422.6px;font-size:11px;line-height:16px;color:#1a1a1a;letter-spacing:-0.2px;">38,327.0</span>
<svg style="left:92px;top:445px;" width="9" height="9" viewBox="0 0 9 9"><rect x="0.5" y="0.5" width="8" height="8" fill="#fff" stroke="#8d9096"/><path d="M2 4.5H7" stroke="#111"/><path d="M4.5 2V7" stroke="#111"/></svg>
<div style="left:102px;top:449px;width:6px;height:1px;background:repeating-linear-gradient(90deg,#777 0 1px,transparent 1px 2px);"></div>
<svg style="left:109px;top:442px;" width="16" height="16" viewBox="0 0 16 16"><rect x="0.5" y="0.5" width="15" height="15" fill="#19f019" stroke="#0a7d0a" stroke-dasharray="2 1.5"/><path d="M5.5 1V15M10.5 1V15" stroke="#0a5c0a" stroke-width="1.2" stroke-dasharray="2 1"/></svg>
<span style="left:129px;top:441.7px;font-size:11px;line-height:16px;color:#1a1a1a;letter-spacing:-0.04px;">Feld_Süd</span>
<span style="left:272.5px;top:441.7px;font-size:11px;line-height:16px;color:#1a1a1a;letter-spacing:-0.01px;">Default</span>
<span style="left:154.5px;width:300px;text-align:right;top:441.7px;font-size:11px;line-height:16px;color:#1a1a1a;letter-spacing:-0.2px;">3,060.2</span>
<span style="left:239.5px;width:300px;text-align:right;top:441.7px;font-size:11px;line-height:16px;color:#1a1a1a;letter-spacing:-0.2px;">34,415.0</span>
<div style="left:598px;top:441.7px;width:67px;height:16px;overflow:hidden;"><span style="left:0;top:0;font-size:11px;line-height:16px;color:#1a1a1a;letter-spacing:-0.15px;">Row startpoint</span></div>
<svg style="left:76px;top:464px;" width="9" height="9" viewBox="0 0 9 9"><rect x="0.5" y="0.5" width="8" height="8" fill="#fff" stroke="#8d9096"/><path d="M2 4.5H7" stroke="#111"/></svg>
<div style="left:86px;top:468px;width:6px;height:1px;background:repeating-linear-gradient(90deg,#777 0 1px,transparent 1px 2px);"></div>
<svg style="left:93px;top:461px;" width="16" height="16" viewBox="0 0 16 16"><rect x="0.5" y="0.5" width="15" height="15" fill="#19f019" stroke="#0a7d0a" stroke-dasharray="2 1.5"/></svg>
<span style="left:113px;top:460.6px;font-size:11px;line-height:16px;color:#1a1a1a;letter-spacing:0.10px;">Fläche Nord</span>
<span style="left:154.5px;width:300px;text-align:right;top:460.6px;font-size:11px;line-height:16px;color:#1a1a1a;letter-spacing:-0.2px;">9,652.5</span>
<span style="left:239.5px;width:300px;text-align:right;top:460.6px;font-size:11px;line-height:16px;color:#1a1a1a;letter-spacing:-0.2px;">78,181.7</span>
<svg style="left:92px;top:483px;" width="9" height="9" viewBox="0 0 9 9"><rect x="0.5" y="0.5" width="8" height="8" fill="#fff" stroke="#8d9096"/><path d="M2 4.5H7" stroke="#111"/><path d="M4.5 2V7" stroke="#111"/></svg>
<div style="left:102px;top:487px;width:6px;height:1px;background:repeating-linear-gradient(90deg,#777 0 1px,transparent 1px 2px);"></div>
<svg style="left:109px;top:480px;" width="16" height="16" viewBox="0 0 16 16"><rect x="0.5" y="0.5" width="15" height="15" fill="#19f019" stroke="#0a7d0a" stroke-dasharray="2 1.5"/><path d="M5.5 1V15M10.5 1V15" stroke="#0a5c0a" stroke-width="1.2" stroke-dasharray="2 1"/></svg>
<span style="left:129px;top:479.7px;font-size:11px;line-height:16px;color:#1a1a1a;letter-spacing:0.04px;">Feld_Nord_Oben</span>
<span style="left:272.5px;top:479.7px;font-size:11px;line-height:16px;color:#1a1a1a;letter-spacing:-0.01px;">Default</span>
<span style="left:154.5px;width:300px;text-align:right;top:479.7px;font-size:11px;line-height:16px;color:#1a1a1a;letter-spacing:-0.2px;">4,590.3</span>
<span style="left:239.5px;width:300px;text-align:right;top:479.7px;font-size:11px;line-height:16px;color:#1a1a1a;letter-spacing:-0.2px;">31,663.5</span>
<div style="left:598px;top:479.7px;width:67px;height:16px;overflow:hidden;"><span style="left:0;top:0;font-size:11px;line-height:16px;color:#1a1a1a;letter-spacing:-0.15px;">Auto</span></div>
<svg style="left:92px;top:502px;" width="9" height="9" viewBox="0 0 9 9"><rect x="0.5" y="0.5" width="8" height="8" fill="#fff" stroke="#8d9096"/><path d="M2 4.5H7" stroke="#111"/><path d="M4.5 2V7" stroke="#111"/></svg>
<div style="left:102px;top:506px;width:6px;height:1px;background:repeating-linear-gradient(90deg,#777 0 1px,transparent 1px 2px);"></div>
<svg style="left:109px;top:499px;" width="16" height="16" viewBox="0 0 16 16"><rect x="0.5" y="0.5" width="15" height="15" fill="#19f019" stroke="#0a7d0a" stroke-dasharray="2 1.5"/><path d="M5.5 1V15M10.5 1V15" stroke="#0a5c0a" stroke-width="1.2" stroke-dasharray="2 1"/></svg>
<span style="left:129px;top:498.8px;font-size:11px;line-height:16px;color:#1a1a1a;letter-spacing:0.02px;">Feld_Nord_Unten</span>
<span style="left:272.5px;top:498.8px;font-size:11px;line-height:16px;color:#1a1a1a;letter-spacing:-0.01px;">Default</span>
<span style="left:154.5px;width:300px;text-align:right;top:498.8px;font-size:11px;line-height:16px;color:#1a1a1a;letter-spacing:-0.2px;">5,062.2</span>
<span style="left:239.5px;width:300px;text-align:right;top:498.8px;font-size:11px;line-height:16px;color:#1a1a1a;letter-spacing:-0.2px;">38,777.0</span>
<div style="left:598px;top:498.8px;width:67px;height:16px;overflow:hidden;"><span style="left:0;top:0;font-size:11px;line-height:16px;color:#1a1a1a;letter-spacing:-0.15px;">Auto</span></div>
<svg style="left:60px;top:521px;" width="9" height="9" viewBox="0 0 9 9"><rect x="0.5" y="0.5" width="8" height="8" fill="#fff" stroke="#8d9096"/><path d="M2 4.5H7" stroke="#111"/><path d="M4.5 2V7" stroke="#111"/></svg>
<div style="left:70px;top:525px;width:6px;height:1px;background:repeating-linear-gradient(90deg,#777 0 1px,transparent 1px 2px);"></div>
<svg style="left:77px;top:518px;" width="16" height="16" viewBox="0 0 16 16"><rect x="0.5" y="0.5" width="15" height="15" fill="#19e019" stroke="#0a7d0a"/><path d="M9 2L5 9H7L4 13H8.5V15H9.5V13H14L11 9H13Z" fill="#0a5c0a"/><path d="M1 12L5 14" stroke="#0a5c0a"/></svg>
<span style="left:97px;top:517.6px;font-size:11px;line-height:16px;color:#1a1a1a;letter-spacing:-0.03px;">Shadow objects</span>
<div style="left:51px;top:872px;width:614px;height:16px;background:#f3f3f4;"></div>
<svg style="left:57px;top:876px;" width="5" height="8" viewBox="0 0 5 8"><path d="M5 0V8L0 4Z" fill="#4d4f54"/></svg>
<svg style="left:652px;top:876px;" width="5" height="8" viewBox="0 0 5 8"><path d="M0 0V8L5 4Z" fill="#4d4f54"/></svg>
<div style="left:69px;top:873px;width:544px;height:14px;background:linear-gradient(#8f939a,#e9eaec 30%,#d9dbde 60%,#b3b6bc);border:1px solid #6f7379;box-sizing:border-box;"></div>
<div style="left:51px;top:888px;width:614px;height:7px;background:linear-gradient(#f2f3f5,#b9bdc4);"></div>
<div style="left:339.0px;top:890.5px;width:1.6px;height:1.6px;background:#30343b;"></div>
<div style="left:342.6px;top:890.5px;width:1.6px;height:1.6px;background:#30343b;"></div>
<div style="left:346.2px;top:890.5px;width:1.6px;height:1.6px;background:#30343b;"></div>
<div style="left:349.8px;top:890.5px;width:1.6px;height:1.6px;background:#30343b;"></div>
<div style="left:353.4px;top:890.5px;width:1.6px;height:1.6px;background:#30343b;"></div>
<div style="left:357.0px;top:890.5px;width:1.6px;height:1.6px;background:#30343b;"></div>
<div style="left:360.6px;top:890.5px;width:1.6px;height:1.6px;background:#30343b;"></div>
<div style="left:364.2px;top:890.5px;width:1.6px;height:1.6px;background:#30343b;"></div>
<div style="left:367.8px;top:890.5px;width:1.6px;height:1.6px;background:#30343b;"></div>
<div style="left:371.4px;top:890.5px;width:1.6px;height:1.6px;background:#30343b;"></div>
<div style="left:51px;top:896px;width:614px;height:26px;background:#222933;"></div>
<svg style="left:51px;top:899px;" width="82" height="23" viewBox="0 0 82 23"><path d="M0 23L6 5Q7.5 1 12 1H66Q70 1 72 5L80 23Z" fill="#3b4453"/></svg>
<svg style="left:63px;top:903px;" width="12" height="12" viewBox="0 0 12 12"><rect x="0" y="6" width="2.4" height="6" fill="#3a78e0"/><rect x="3.2" y="1" width="2.4" height="11" fill="#3fc45a"/><rect x="6.4" y="4" width="2.4" height="8" fill="#f0c030"/><rect x="9.6" y="7" width="2.4" height="5" fill="#e0402a"/></svg>
<span style="left:78px;top:901.5px;font-size:11px;line-height:16px;color:#fff;font-weight:bold;letter-spacing:-0.03px;">Statistic</span>
<div style="left:51px;top:922px;width:614px;height:431px;background:#3b4453;"></div>
<div style="left:52px;top:923px;width:612px;height:421px;background:#ffffff;"></div>
<div style="left:52px;top:923px;width:612px;height:15.5px;background:linear-gradient(#f6f7f8,#e6e8eb);border-bottom:1px solid #c6c9ce;box-sizing:border-box;"></div>
<div style="left:301px;top:923px;width:1px;height:404px;background:#8d9096;"></div>
<span style="left:78px;top:942.8px;font-size:11px;line-height:16px;color:#000;font-weight:bold;letter-spacing:0.09px;">Selected</span>
<span style="left:78px;top:958.6px;font-size:11px;line-height:16px;color:#000;font-weight:bold;letter-spacing:-0.04px;">Total view</span>
<svg style="left:61px;top:962px;" width="9" height="9" viewBox="0 0 9 9"><rect x="0.5" y="0.5" width="8" height="8" fill="#fff" stroke="#8d9096"/><path d="M2 4.5H7" stroke="#111"/><path d="M4.5 2V7" stroke="#111"/></svg>
<div style="left:71px;top:966px;width:6px;height:1px;background:repeating-linear-gradient(90deg,#777 0 1px,transparent 1px 2px);"></div>
<span style="left:306px;top:942.8px;font-size:11px;line-height:16px;color:#27b84a;letter-spacing:-0.00px;">120 arrays placed in 18 rows</span>
<div style="left:52px;top:1328px;width:612px;height:16px;background:#f3f3f4;"></div>
<svg style="left:58px;top:1332px;" width="5" height="8" viewBox="0 0 5 8"><path d="M5 0V8L0 4Z" fill="#4d4f54"/></svg>
<svg style="left:651px;top:1332px;" width="5" height="8" viewBox="0 0 5 8"><path d="M0 0V8L5 4Z" fill="#4d4f54"/></svg>
<div style="left:70px;top:1329px;width:535px;height:14px;background:linear-gradient(#8f939a,#e9eaec 30%,#d9dbde 60%,#b3b6bc);border:1px solid #6f7379;box-sizing:border-box;"></div>
<div style="left:674.5px;top:186px;width:1856.5px;height:1059px;background:#212830;"></div>
<div style="left:2531px;top:182px;width:25px;height:6px;background:#3b4453;"></div>
<div style="left:674px;top:1245px;width:1882px;height:5.5px;background:#3b4453;"></div>
<svg style="left:0;top:0;" width="2560" height="1392" viewBox="0 0 2560 1392"><path d="M875.7 779.8L1267.6 720L1845.6 719.2L1952.5 713.2L2417.4 735L2530 735" stroke="#80858b" stroke-width="1" fill="none"/><path d="M1412.4 748.8h6.1L1416.8 743.6ZM973.2 824.3L975.9 819.6L977.3 824.3M1577.9 886.7h6.4L1582.5 880.7ZM1828.8 798.9h7.1L1833.9 793.0ZM1387.1 884.5L1392.6 882.0L1391.1 886.7ZM1780.5 730.8h6.5L1785.2 725.2ZM1396.5 837.5h6.9L1401.4 831.2ZM1281.3 835.2L1287.0 832.7L1285.4 837.5ZM2491.4 742.1L2495.9 740.0L2494.7 744.0ZM944.5 851.2L945.0 857.4M1857.1 836.3L1863.2 833.5L1861.5 838.9ZM1971.9 730.4L1978.1 727.3L1976.3 733.2ZM1347.9 796.7h5.9L1352.1 791.8ZM2143.0 744.4h7.1L2148.1 738.6ZM1618.5 830.1L1624.4 827.5L1622.7 832.5ZM1562.7 791.2L1567.2 789.2L1566.0 793.0ZM1261.3 765.6L1266.1 763.6L1264.7 767.4ZM1568.7 793.3L1574.3 790.7L1572.8 795.7ZM1895.3 855.9L1901.1 853.0L1899.5 858.6ZM2191.7 798.0h6.4L2196.3 792.9ZM1146.8 787.4h5.0L1150.4 783.3ZM2317.4 843.3h5.5L2321.4 838.5ZM1079.2 890.1L1081.7 892.8L1084.7 888.7M1045.9 790.5L1048.5 786.1L1049.8 790.5M2443.4 825.8h4.6L2446.7 821.7ZM2488.7 894.1h5.6L2492.7 889.5ZM2149.1 826.6h5.2L2152.8 821.9ZM2499.2 891.9L2504.9 889.5L2503.3 894.2ZM1731.0 790.5h5.3L1734.8 786.1ZM2018.5 913.1L2024.7 909.9L2023.0 916.0ZM1479.5 763.0h5.1L1483.1 758.4ZM2360.1 889.4L2365.9 887.0L2364.3 891.7ZM1966.0 903.6L1971.2 901.4L1969.7 905.6ZM2177.3 785.8L2182.3 783.6L2180.9 787.9ZM2436.5 865.9h5.0L2440.1 861.2ZM2205.9 747.8L2211.4 745.3L2209.9 750.1ZM1782.0 744.7L1787.5 742.1L1786.0 747.1ZM2414.9 806.5L2419.5 804.5L2418.2 808.3ZM1361.6 767.1h5.8L1365.8 762.4ZM2376.1 790.2L2382.1 787.4L2380.4 792.7ZM2388.7 820.3h4.6L2392.0 816.4ZM2193.8 753.2L2199.1 750.8L2197.7 755.3ZM1732.2 831.3h6.2L1736.6 826.1ZM1335.3 875.5L1341.0 872.6L1339.4 878.2ZM1608.7 843.0h6.6L1613.4 837.2ZM1756.7 815.5L1762.7 812.4L1761.0 818.3ZM1306.8 832.1L1311.2 830.2L1310.0 833.9ZM1606.8 732.8h6.5L1611.5 726.8ZM2354.7 749.5L2359.2 747.2L2357.9 751.6ZM2470.6 762.8h6.0L2474.9 757.1ZM2248.5 750.9h5.5L2252.5 746.4ZM1403.7 865.3L1408.7 863.2L1407.3 867.2ZM1425.0 845.3h7.5L1430.4 838.4ZM2477.5 739.4h6.8L2482.4 733.6ZM1090.7 807.0L1093.6 802.2L1095.0 807.0M2391.1 834.4h4.7L2394.5 830.2ZM1579.2 732.8L1585.0 730.3L1583.4 735.0ZM2298.4 810.6L2304.5 807.9L2302.8 813.0ZM1092.4 825.5h5.0L1096.0 821.5ZM1211.7 781.6L1216.5 779.4L1215.1 783.7ZM1172.5 788.8h4.5L1175.7 784.7ZM1785.9 756.6L1790.3 754.4L1789.1 758.7ZM1590.5 819.0h6.0L1594.8 813.5ZM2495.1 787.9L2500.6 785.4L2499.1 790.2ZM1451.4 729.1h6.7L1456.2 723.5ZM2263.0 895.6h5.2L2266.8 891.2ZM1635.3 750.1h7.4L1640.7 743.2ZM1779.4 767.9h5.6L1783.4 763.4ZM1507.4 814.8h6.0L1511.7 810.0ZM1314.3 736.3h4.6L1317.6 732.4ZM1262.7 837.5L1268.3 834.7L1266.7 839.9ZM2325.2 797.5L2329.7 795.2L2328.5 799.5ZM1937.5 726.9L1942.9 724.2L1941.4 729.4ZM2215.3 746.4h7.0L2220.3 740.0ZM2238.6 837.1L2244.2 834.7L2242.6 839.4ZM1473.0 739.4L1478.5 736.8L1476.9 741.8ZM1999.0 817.8L2004.7 815.2L2003.1 820.2ZM1759.9 852.5L1764.6 850.5L1763.3 854.3ZM1316.6 866.8L1322.7 863.9L1321.0 869.4ZM1508.9 815.7L1514.4 813.1L1512.8 818.1ZM1297.5 869.6L1301.7 867.8L1300.5 871.2ZM1321.9 855.1L1326.6 852.8L1325.3 857.1ZM1643.9 813.1L1648.5 810.7L1647.2 815.3ZM1634.5 885.3h5.3L1638.4 880.8ZM2434.5 761.0h6.1L2438.9 755.3ZM1095.0 884.1L1097.7 887.1L1101.0 882.7M2355.8 817.2h6.0L2360.1 812.0ZM1376.4 746.7h7.0L1381.5 741.1ZM2114.2 889.2L2119.8 886.3L2118.3 891.8ZM1356.5 793.9L1361.9 791.5L1360.4 796.1ZM1583.7 774.1h7.0L1588.8 768.2ZM2418.1 768.9h5.1L2421.8 764.5ZM2451.9 898.4L2458.0 895.3L2456.3 901.2ZM1782.9 864.8L1788.0 862.3L1786.6 867.1ZM1939.5 776.4L1944.0 774.3L1942.8 778.3ZM1445.0 778.7L1449.7 776.5L1448.4 780.8ZM1374.6 831.7h5.0L1378.2 827.6ZM2369.4 819.4L2375.6 816.5L2373.9 822.0ZM1109.5 757.3h4.8L1112.9 753.3ZM1304.7 834.2L1309.8 831.9L1308.4 836.3ZM1741.7 794.9h5.3L1745.6 789.8ZM1084.5 823.7L1087.5 818.6L1089.1 823.7M1288.5 799.6L1294.4 796.6L1292.7 802.3ZM2046.4 900.7L2050.6 898.8L2049.5 902.5ZM2403.7 886.4L2408.4 884.4L2407.1 888.2ZM1130.2 823.1L1133.4 826.7L1137.4 821.3M2137.3 811.3h6.8L2142.3 805.6ZM2392.3 849.7h5.3L2396.1 845.0ZM2028.5 740.9h6.2L2033.0 735.5ZM1247.6 840.6h5.9L1251.8 835.1ZM1939.7 898.3h5.2L1943.5 893.3ZM2038.5 780.7h6.5L2043.1 775.1ZM1302.9 854.1h4.6L1306.2 850.2ZM1571.4 857.2L1577.1 854.6L1575.5 859.7ZM1217.4 915.9L1222.0 913.8L1220.7 917.7ZM2130.2 778.2h5.1L2133.9 773.9ZM1565.6 853.7h5.7L1569.7 849.0ZM2481.5 746.9h5.7L2485.5 741.6ZM2332.6 867.5L2337.5 865.4L2336.1 869.4ZM2418.6 870.2L2423.5 868.0L2422.2 872.3ZM1425.3 752.5h5.6L1429.3 747.3ZM1083.4 914.7h7.0L1088.4 908.3ZM1590.9 728.0h7.3L1596.2 722.0ZM1478.8 901.0h6.9L1483.8 894.6ZM982.9 902.6L982.2 908.8M2454.4 843.9L2459.3 841.7L2457.9 845.8ZM886.2 869.5L885.4 874.8M1661.2 913.2h5.3L1665.0 908.6ZM1691.3 907.3L1696.9 904.5L1695.4 909.9ZM2150.5 841.9h5.6L2154.5 836.8ZM2117.7 768.5h6.2L2122.2 763.2ZM2491.5 898.2h4.8L2495.0 894.4ZM1699.5 862.8h5.8L1703.6 857.7ZM1988.2 870.6L1992.7 868.3L1991.4 872.6ZM1363.0 833.6L1367.6 831.6L1366.3 835.5ZM1283.3 749.3L1288.2 747.1L1286.8 751.3ZM2511.6 821.5L2517.1 818.6L2515.6 824.1ZM1048.2 812.2L1047.6 817.5M1076.0 753.5L1077.1 759.9M1618.3 771.0L1622.8 768.9L1621.5 772.9ZM1899.2 762.4h5.1L1902.9 758.1ZM1865.5 850.9h5.5L1869.4 846.0ZM1184.4 781.7L1189.7 779.5L1188.2 783.7ZM1044.4 801.5L1047.3 796.6L1048.7 801.5M2023.2 801.6h7.4L2028.5 795.4ZM1811.4 790.9L1817.6 788.1L1815.8 793.4ZM1204.2 866.5h7.2L1209.4 860.3ZM2228.7 800.9h5.0L2232.3 796.9ZM1786.7 848.7h6.4L1791.3 843.2ZM1709.3 747.8h7.3L1714.6 741.8ZM1686.4 882.2h4.9L1689.9 877.6ZM2483.8 816.5L2488.8 813.9L2487.4 818.8ZM1899.8 886.2L1904.5 884.1L1903.2 888.1ZM2271.4 887.2h5.7L2275.5 882.2ZM1510.6 743.1L1516.6 740.6L1514.9 745.4ZM1804.5 872.5L1808.9 870.4L1807.7 874.5ZM1784.3 845.9h6.2L1788.8 840.5ZM1963.1 809.1h6.4L1967.7 803.6ZM1266.8 873.8h5.0L1270.4 869.4ZM1587.9 736.7h4.6L1591.2 732.6ZM1012.5 871.0L1015.9 865.2L1017.6 871.0M1501.2 912.0L1507.4 908.9L1505.7 914.8ZM2219.8 757.5h7.4L2225.1 750.6ZM1456.9 872.3L1461.6 869.9L1460.3 874.4ZM1312.2 821.2h5.0L1315.8 817.1ZM2419.4 856.7h6.9L2424.4 851.1ZM1752.5 847.8L1757.8 845.3L1756.3 850.1ZM2330.9 739.3L2335.9 736.8L2334.5 741.6ZM1315.3 920.1h6.8L1320.1 914.2ZM1170.6 869.7L1175.3 867.4L1174.0 871.8ZM2497.8 837.5h4.5L2501.0 833.9ZM1125.6 840.9L1124.7 846.5M1953.7 722.5h4.8L1957.2 718.4ZM1248.7 837.1h6.4L1253.3 831.5ZM1101.5 909.1h4.8L1105.0 904.8ZM2312.4 877.6h4.5L2315.7 873.5ZM1804.5 789.5h7.3L1809.7 782.8ZM1288.5 902.3h5.7L1292.6 897.5ZM976.0 874.1L975.1 879.7M1879.7 821.4L1884.2 819.4L1883.0 823.3ZM1373.6 727.9L1379.3 725.6L1377.7 730.0ZM2268.2 870.0L2273.4 867.8L2271.9 872.0ZM1053.1 765.4h6.7L1057.9 759.3ZM2269.7 863.2L2274.8 860.7L2273.4 865.5ZM1740.2 772.1L1744.8 769.8L1743.6 774.3ZM1265.0 873.8L1269.0 866.9L1271.0 873.8M1420.1 766.8L1425.7 764.1L1424.2 769.3ZM2489.5 813.8L2495.4 811.1L2493.8 816.3ZM2071.3 834.3h6.4L2075.9 829.2ZM2377.3 747.5h7.3L2382.6 741.3ZM945.8 858.2L948.2 860.9L951.2 856.9M1850.7 792.1L1856.7 789.6L1855.0 794.4ZM2306.7 904.5h5.1L2310.3 900.4ZM936.6 887.3L936.0 894.5M2125.1 759.8h4.6L2128.4 756.0ZM1344.6 864.0h7.4L1349.9 857.5ZM2279.7 844.1h5.8L2283.8 838.8ZM1450.1 861.8h7.1L1455.2 856.0ZM2227.8 752.8h6.8L2232.7 746.3ZM884.5 821.5L887.8 815.8L889.5 821.5M1450.8 887.7L1455.5 885.6L1454.2 889.6ZM2029.9 819.7L2034.3 817.5L2033.1 821.6ZM2026.1 878.5h5.7L2030.2 873.6ZM2343.8 735.6h5.1L2347.5 731.3ZM2361.6 820.2L2366.3 818.1L2365.0 822.2ZM1753.9 871.9L1758.8 869.7L1757.4 873.9ZM1132.7 893.3L1136.0 887.7L1137.7 893.3M2151.5 836.2h7.2L2156.7 830.2ZM1192.7 782.4L1195.5 777.5L1196.9 782.4M1287.0 784.6h5.5L1291.0 780.1ZM2483.1 866.7L2487.5 864.7L2486.3 868.5ZM2497.4 880.2h5.1L2501.1 875.6ZM1055.7 760.1h5.7L1059.8 754.9ZM2020.0 820.1h4.9L2023.6 815.7ZM1545.3 869.2h6.2L1549.8 863.5ZM1572.4 764.6L1578.1 761.8L1576.5 767.2ZM2281.4 856.6h5.4L2285.3 851.8ZM1037.9 802.4L1040.6 805.4L1043.9 800.9M1576.4 810.9h6.5L1581.1 804.7ZM1176.8 849.9L1180.5 854.0L1185.1 847.8M942.7 825.4L941.5 832.3M1824.6 828.4h6.4L1829.2 822.4ZM1737.7 801.7h6.6L1742.4 796.1ZM2133.9 743.0h4.7L2137.2 739.0ZM1568.1 803.8h5.3L1572.0 799.4ZM2099.0 909.7h6.9L2103.9 903.8ZM1225.2 743.0L1228.2 746.4L1231.9 741.4M1804.0 764.1h6.4L1808.6 758.2ZM2221.8 813.5h4.9L2225.3 809.0ZM1463.2 891.5h5.3L1467.0 887.0ZM2066.6 775.4h5.9L2070.9 770.2ZM1927.7 852.5L1933.6 850.0L1932.0 854.7ZM2241.1 902.8h7.0L2246.1 896.5ZM2444.7 851.8h4.9L2448.3 847.7ZM2156.2 788.7L2162.0 786.2L2160.4 790.9ZM2345.0 842.1L2351.0 839.1L2349.3 844.8ZM2259.0 758.3h6.7L2263.8 752.4ZM2331.1 831.2h4.9L2334.7 826.9ZM972.6 811.9L975.8 815.4L979.6 810.2M2262.2 813.5L2268.1 810.8L2266.5 815.9ZM1568.5 914.0L1574.0 911.7L1572.5 916.0ZM1882.3 857.2h7.4L1887.7 850.7ZM1676.8 901.1L1682.3 898.7L1680.7 903.3ZM2296.6 792.7h6.8L2301.5 787.0ZM1595.5 804.2L1600.2 801.8L1598.9 806.4ZM1543.7 820.8h7.4L1549.1 814.1ZM2182.0 785.5h6.3L2186.5 779.9ZM2068.1 898.7h5.4L2072.0 894.3ZM1192.3 906.0L1198.0 903.0L1196.4 908.7ZM1885.7 843.8L1891.1 841.2L1889.6 846.2ZM1229.4 854.1L1233.8 852.2L1232.5 855.8ZM937.7 879.9L941.6 873.3L943.5 879.9M2173.1 832.7h5.8L2177.2 827.8ZM1588.0 848.9h6.2L1592.5 843.9ZM1072.8 882.3L1075.1 884.9L1078.0 880.9M1516.5 838.8L1521.6 836.4L1520.2 840.9ZM2004.1 742.8h7.1L2009.2 737.0ZM907.1 867.4L909.8 862.9L911.1 867.4M2152.5 863.6L2156.9 861.5L2155.6 865.5ZM2046.0 812.0h7.4L2051.3 805.2ZM1949.7 884.7h6.7L1954.6 879.2ZM2295.4 817.2h6.2L2299.9 811.8ZM1992.8 747.6h6.4L1997.4 741.8ZM1567.1 796.7L1572.9 794.0L1571.3 799.2ZM1360.7 730.4L1366.5 727.7L1364.9 732.8ZM1876.0 917.4L1880.8 915.2L1879.4 919.4ZM2340.1 794.8L2346.1 791.8L2344.4 797.6ZM1312.4 804.2L1318.4 801.7L1316.7 806.5ZM2249.8 883.6L2254.6 881.2L2253.3 885.8ZM2206.8 857.7h4.8L2210.2 853.5ZM2190.9 758.9L2195.6 756.7L2194.3 760.9ZM1994.1 812.9h6.8L1998.9 806.7ZM1635.8 735.9L1640.4 733.7L1639.1 737.9ZM2354.6 898.6h6.3L2359.1 893.4ZM1192.9 753.6L1195.8 756.8L1199.4 751.9M1730.3 748.4L1735.3 746.3L1733.9 750.3ZM1920.2 878.6L1925.1 876.3L1923.7 880.7ZM2508.2 894.7L2512.9 892.3L2511.6 896.8ZM1580.3 911.1L1586.4 908.4L1584.7 913.5ZM963.8 827.6L962.5 835.8M1863.2 799.1L1867.9 796.8L1866.6 801.1ZM1933.2 913.1h5.8L1937.4 908.3ZM2467.7 920.3h5.3L2471.5 915.8ZM2364.1 902.5h6.9L2369.1 896.3ZM1943.2 919.0h6.8L1948.0 912.7ZM1992.8 779.0L1997.2 777.0L1996.0 780.8ZM1302.5 743.3h5.2L1306.3 739.0ZM1994.0 720.6h4.6L1997.4 716.2ZM1239.9 911.8L1243.3 906.2L1244.9 911.8M1036.3 906.2L1039.1 909.4L1042.6 904.6M2233.1 815.4h5.2L2236.8 811.2ZM2053.4 830.9L2058.1 828.7L2056.8 832.9ZM1133.2 776.7L1136.6 770.9L1138.3 776.7M1402.9 902.2L1407.2 900.0L1406.0 904.3ZM1978.7 761.1h5.3L1982.4 756.7ZM1478.9 920.2L1483.3 918.2L1482.0 921.9ZM2074.3 777.9h6.9L2079.3 772.0ZM2248.2 825.4h7.2L2253.4 819.4ZM1819.3 746.2L1824.9 743.7L1823.3 748.4ZM1880.5 819.1h6.3L1885.0 813.3ZM2214.2 836.9h6.7L2219.1 831.1ZM2066.4 729.3h7.0L2071.5 722.8ZM2376.4 815.2h5.1L2380.0 810.6ZM1483.5 751.4L1487.7 749.4L1486.5 753.1ZM1612.8 823.2L1618.7 820.2L1617.0 825.9ZM1407.7 863.1L1412.0 860.9L1410.8 865.1ZM2448.5 818.9h6.1L2452.9 814.0ZM2470.4 763.6h5.3L2474.2 758.8ZM2029.1 757.8L2034.5 755.3L2033.0 760.1ZM2035.1 739.0L2039.4 737.2L2038.2 740.6ZM1691.5 820.2h5.7L1695.6 815.5ZM1852.9 893.7L1858.6 891.2L1857.0 895.9ZM2238.0 909.3h7.0L2243.0 903.1ZM1530.4 910.0h5.2L1534.2 905.6ZM1596.1 918.2L1601.9 915.2L1600.3 920.8ZM965.4 826.8L968.7 821.3L970.3 826.8M1920.1 792.3h5.8L1924.3 787.3ZM2474.2 876.4L2480.0 873.5L2478.4 879.1ZM1934.7 772.2h6.1L1939.2 766.5ZM1901.3 769.1h7.4L1906.6 762.9ZM1382.1 850.1L1388.2 847.2L1386.5 852.7ZM1321.3 813.1h4.9L1324.8 809.2ZM1362.7 800.9h4.8L1366.1 796.7ZM2260.5 842.4L2265.1 840.2L2263.9 844.5ZM1637.7 829.8h5.4L1641.6 825.3ZM1244.3 822.5L1248.5 820.6L1247.3 824.3ZM2296.9 766.7h5.4L2300.8 761.6ZM1365.8 875.5h7.1L1370.9 869.4ZM979.6 800.1L982.5 795.1L984.0 800.1M2457.1 868.7h5.6L2461.1 863.7ZM1893.2 891.4h6.7L1898.0 885.3ZM2128.9 814.9L2135.0 812.4L2133.3 817.3ZM2138.8 837.5L2144.1 835.1L2142.6 839.7ZM2168.4 896.0h5.9L2172.6 891.0ZM2068.7 777.8L2073.7 775.5L2072.3 779.8ZM2174.0 891.3h5.1L2177.6 887.0ZM2392.7 784.1L2398.9 781.4L2397.2 786.5ZM1581.1 903.8h6.2L1585.5 898.3ZM2393.0 875.8L2398.2 873.3L2396.8 878.0ZM2006.5 797.5L2011.4 794.9L2010.0 799.8ZM1992.1 825.2h5.7L1996.2 820.1ZM1823.7 897.5h5.8L1827.9 892.3ZM2517.6 788.0L2522.2 786.0L2520.9 789.9ZM2488.5 886.5h7.2L2493.7 880.0ZM2229.0 920.0h5.0L2232.6 915.8Z" stroke="#e3e5e7" stroke-width="1.15" fill="none" stroke-linejoin="round"/><path d="M1722.1 820.0h1.25M1189.6 753.6h1.25M1872.7 788.8h1.25M2515.7 847.1h1.25M949.6 800.8h1.25M1384.9 858.3h1.25M2266.2 836.8h1.25M1979.7 756.5h1.25M1699.5 830.0h1.25M1317.9 849.2h1.25M1754.8 921.4h1.25M1825.6 800.7h1.25M2130.1 738.0h1.25M1740.0 885.6h1.25M1889.0 882.2h1.25M2148.4 782.5h1.25M2057.6 788.9h1.25M2367.7 835.9h1.25M1454.3 808.7h1.25M1514.8 727.3h1.25M2345.8 836.0h1.25M2459.5 806.6h1.25M1900.8 767.4h1.25M952.4 907.7h1.25M1398.2 901.2h1.25M2223.0 778.6h1.25M1871.8 913.8h1.25M1695.7 911.6h1.25M1279.9 796.3h1.25M1244.4 779.7h1.25M1677.3 879.3h1.25M1804.3 739.7h1.25M1758.6 795.4h1.25M1543.7 729.5h1.25M1270.4 723.2h1.25M1442.0 748.1h1.25M2041.9 735.1h1.25M1323.9 888.0h1.25M1090.3 807.3h1.25M2204.9 748.8h1.25M1460.9 864.8h1.25M1500.4 913.4h1.25M1222.5 911.9h1.25M2042.9 769.7h1.25M2360.8 837.0h1.25M1485.7 766.7h1.25M1881.1 759.8h1.25M2316.0 741.3h1.25M1724.4 827.8h1.25M1325.1 875.0h1.25M1513.4 851.4h1.25M1814.4 780.0h1.25M1521.8 733.7h1.25M1970.9 738.4h1.25M1805.0 790.5h1.25M1703.6 777.2h1.25M1544.0 903.2h1.25M2155.6 897.8h1.25M2297.7 743.2h1.25M1335.2 722.1h1.25M1998.7 852.7h1.25M1458.5 801.0h1.25M1964.8 860.0h1.25M1915.0 753.4h1.25M1069.7 904.0h1.25M2052.9 724.3h1.25M944.6 780.0h1.25M1175.7 888.9h1.25M2059.6 768.5h1.25M1595.9 857.0h1.25M2253.2 876.0h1.25M1351.3 724.8h1.25M2285.9 841.1h1.25M2385.2 870.4h1.25M2110.5 886.7h1.25M1342.8 734.5h1.25M2437.7 803.3h1.25M2411.1 858.5h1.25M2095.8 887.0h1.25M1913.9 809.3h1.25M1722.6 907.2h1.25M2036.7 882.0h1.25M1309.9 828.6h1.25M2475.7 847.3h1.25M1775.3 767.4h1.25M2043.7 854.1h1.25M1271.5 765.8h1.25M1612.5 908.8h1.25M1458.5 777.7h1.25M2336.2 745.2h1.25M1807.1 784.7h1.25M2222.1 828.9h1.25M2131.8 750.9h1.25M1977.1 839.3h1.25M1639.1 873.8h1.25M2248.1 739.6h1.25M1356.3 790.3h1.25M1342.3 756.6h1.25M2034.9 808.3h1.25M1066.0 782.8h1.25M1477.5 750.6h1.25M2513.0 870.6h1.25M1018.2 863.7h1.25M1807.8 738.4h1.25M1684.7 805.5h1.25M2393.6 848.8h1.25M1913.3 908.7h1.25M1954.2 767.8h1.25M2154.7 889.0h1.25M1367.7 754.3h1.25M1930.3 890.2h1.25M2405.4 750.7h1.25M2171.5 887.1h1.25M2101.9 783.3h1.25M1486.6 829.5h1.25M1487.8 887.3h1.25M1274.0 724.5h1.25M1914.0 884.9h1.25M2041.4 902.5h1.25M2435.4 817.8h1.25M1702.2 748.4h1.25M1373.1 835.7h1.25M1609.5 915.8h1.25M1603.4 755.3h1.25M2264.0 892.2h1.25M2175.3 803.6h1.25M1346.2 852.3h1.25M1727.1 802.8h1.25M1437.4 806.4h1.25M1976.4 886.2h1.25M2368.0 749.9h1.25M1366.8 807.3h1.25M1807.3 787.7h1.25M1637.9 916.1h1.25M2375.7 894.3h1.25M2483.8 914.1h1.25M1900.3 883.1h1.25M978.8 855.3h1.25M1368.9 833.7h1.25M2448.3 815.0h1.25M1945.6 777.7h1.25M1445.3 898.3h1.25M1997.1 808.2h1.25M1835.9 801.8h1.25M1752.3 832.4h1.25M1532.4 739.5h1.25M1177.1 899.3h1.25M1685.4 830.1h1.25M1724.7 837.2h1.25M1603.5 893.9h1.25M1786.2 863.2h1.25M2125.9 739.6h1.25M2510.6 864.6h1.25M1161.9 913.8h1.25M2155.6 744.2h1.25M2157.6 727.9h1.25M1858.2 759.9h1.25M1373.7 861.7h1.25M1581.2 899.1h1.25M1902.4 895.7h1.25M1806.6 905.0h1.25M2313.3 750.6h1.25M2107.0 786.3h1.25M2136.9 856.2h1.25M2239.0 741.3h1.25M1494.0 867.9h1.25M2440.5 864.7h1.25M1783.4 881.4h1.25M1065.9 906.6h1.25M2259.6 835.8h1.25M1792.3 775.7h1.25M2011.1 794.4h1.25M1117.4 896.3h1.25M2014.9 882.5h1.25M1443.5 747.1h1.25M1705.9 895.9h1.25M1180.0 884.6h1.25M1526.2 814.0h1.25M2317.0 841.8h1.25M2351.5 837.4h1.25M1474.2 812.4h1.25M1829.8 795.9h1.25M1833.3 784.8h1.25M913.8 810.6h1.25M1984.4 772.2h1.25M1329.9 819.0h1.25M1311.4 833.2h1.25M1749.3 913.1h1.25M1802.8 874.8h1.25M2315.9 875.5h1.25M1922.1 846.7h1.25M1477.4 774.0h1.25M2189.1 895.8h1.25M2425.0 856.4h1.25M1380.4 873.2h1.25M2097.3 820.8h1.25M1925.6 788.2h1.25M1786.5 799.6h1.25M2506.9 815.2h1.25M1484.6 766.1h1.25M891.9 895.4h1.25M1613.3 833.2h1.25M1377.8 750.8h1.25M2076.1 829.6h1.25M2423.0 786.1h1.25M2396.3 836.2h1.25M1835.5 919.4h1.25M1467.6 875.5h1.25M1584.9 894.9h1.25M991.5 815.8h1.25M1334.1 769.1h1.25M1321.2 861.1h1.25M1872.4 894.0h1.25M1946.8 756.5h1.25M2088.0 914.4h1.25M1869.3 732.3h1.25M2212.4 896.4h1.25M1441.5 744.2h1.25M1189.7 826.6h1.25M1933.3 906.1h1.25M1229.3 783.3h1.25M1948.1 799.5h1.25M1997.6 785.6h1.25M1910.9 784.9h1.25M1693.7 839.2h1.25M1303.1 811.5h1.25M902.4 906.6h1.25M1890.6 865.2h1.25M1421.8 735.3h1.25M1137.1 745.4h1.25M1766.6 837.2h1.25M1793.5 851.4h1.25M1870.2 784.2h1.25M2099.8 769.1h1.25M2051.0 873.2h1.25M2157.3 779.7h1.25M2151.7 917.3h1.25M1625.9 773.3h1.25M1741.4 909.8h1.25M1663.1 851.0h1.25M2154.3 790.7h1.25M2508.8 763.0h1.25M2125.3 734.5h1.25M979.0 819.4h1.25M1125.8 752.6h1.25M2396.7 749.4h1.25M2496.9 818.8h1.25M1927.1 786.9h1.25M2197.7 810.8h1.25M1413.0 902.1h1.25M1942.4 798.8h1.25M1808.7 800.4h1.25M2392.9 910.7h1.25M1912.2 762.2h1.25M1260.9 757.9h1.25M1937.9 777.5h1.25M2516.6 760.6h1.25M1817.4 748.3h1.25M2300.6 895.1h1.25M1319.9 870.8h1.25M2234.4 774.2h1.25M1425.7 816.0h1.25M2346.5 749.3h1.25M2003.8 839.1h1.25M1625.7 835.3h1.25M2333.2 759.2h1.25M2334.4 790.2h1.25M2163.6 893.8h1.25M1180.1 894.0h1.25M2380.5 747.1h1.25M2091.5 736.1h1.25M1438.9 905.2h1.25M2059.1 897.7h1.25M1266.2 879.2h1.25M1588.6 737.6h1.25M2326.1 740.8h1.25M1682.2 744.0h1.25M1585.3 752.9h1.25M2008.2 746.5h1.25M2095.1 819.2h1.25M1064.9 788.8h1.25M2392.2 788.0h1.25M1234.1 915.3h1.25M2083.9 772.2h1.25M1796.2 790.7h1.25M897.4 857.8h1.25M1775.4 829.1h1.25M2016.2 918.4h1.25M2318.7 863.9h1.25M1537.2 781.6h1.25M1569.9 916.4h1.25M1517.1 795.4h1.25M1554.8 745.5h1.25M1880.5 906.8h1.25M2267.7 877.5h1.25M2022.6 782.8h1.25M1943.7 829.1h1.25M1399.5 916.2h1.25M881.5 869.7h1.25M1719.7 838.0h1.25M2517.4 764.3h1.25M1916.2 869.1h1.25M1503.6 862.7h1.25M1527.7 824.4h1.25M1888.7 855.5h1.25M1410.2 845.6h1.25M1773.9 762.0h1.25M1888.2 770.6h1.25M2375.8 813.5h1.25M2067.7 823.5h1.25M1664.5 761.6h1.25M1113.9 907.0h1.25M1742.4 824.7h1.25M2218.8 765.2h1.25M1163.7 885.3h1.25M1934.3 886.5h1.25M2351.6 894.8h1.25M951.2 794.5h1.25M2226.1 741.3h1.25M1467.0 881.5h1.25M1738.1 809.3h1.25M1024.8 797.5h1.25M2024.0 808.6h1.25M1667.3 880.4h1.25M2129.0 746.9h1.25M1999.6 791.6h1.25M1737.1 765.0h1.25M1490.3 786.1h1.25M1413.3 765.8h1.25M2253.0 734.8h1.25M1927.1 892.9h1.25M1212.0 803.2h1.25M1897.0 792.6h1.25M2052.8 776.8h1.25M1551.4 849.5h1.25M2214.6 788.6h1.25M1514.3 835.2h1.25M2402.2 755.5h1.25M2478.9 862.7h1.25M1492.9 853.1h1.25M1422.3 730.6h1.25M2124.4 794.2h1.25M1745.5 818.3h1.25M2363.6 871.9h1.25M922.1 838.1h1.25M1640.7 889.0h1.25M1562.9 813.6h1.25M2345.5 806.6h1.25M1688.6 821.4h1.25M2237.4 854.1h1.25M2098.8 798.7h1.25M946.8 856.0h1.25M2146.1 874.6h1.25M2225.6 737.0h1.25M1025.3 871.2h1.25M970.5 856.3h1.25M1674.7 727.3h1.25M2017.4 802.1h1.25M1841.2 921.6h1.25M2224.5 895.6h1.25M1119.5 784.9h1.25M1311.8 780.5h1.25M1299.8 892.9h1.25M1721.1 802.6h1.25M964.2 778.7h1.25M2200.0 892.5h1.25M1303.2 757.6h1.25M1644.1 816.7h1.25M1840.9 791.3h1.25M2199.2 757.3h1.25M2393.3 830.6h1.25M964.2 780.7h1.25M1553.1 832.4h1.25M1412.6 772.4h1.25M2190.4 776.1h1.25M2049.6 881.3h1.25M1854.6 809.7h1.25M2418.8 807.6h1.25M1593.9 847.7h1.25M1861.5 753.1h1.25M2398.3 831.6h1.25M2197.9 818.6h1.25M1989.2 855.0h1.25M1365.4 759.5h1.25M2259.8 746.0h1.25M2390.8 758.6h1.25M2170.9 911.9h1.25M1562.6 851.7h1.25M1304.0 902.6h1.25M2009.0 747.9h1.25M2256.3 776.5h1.25M1802.7 747.7h1.25M2381.0 782.8h1.25M2264.8 747.3h1.25M2195.8 917.9h1.25M1524.4 722.8h1.25M1505.4 848.0h1.25M1644.5 866.0h1.25M1587.5 855.9h1.25M2399.8 921.2h1.25M2426.3 824.4h1.25M1358.6 787.7h1.25M2115.1 818.3h1.25M1677.9 894.0h1.25M1863.9 827.4h1.25M1326.4 900.0h1.25M2271.5 762.8h1.25M1865.6 915.3h1.25M1446.7 910.5h1.25M1960.7 726.3h1.25M1428.3 808.6h1.25M2176.6 777.4h1.25M1787.9 878.3h1.25M1860.4 811.0h1.25M1944.7 743.2h1.25M1831.4 788.7h1.25M1496.8 852.6h1.25M1149.8 751.0h1.25M1425.9 889.5h1.25M2317.7 814.9h1.25M2326.9 740.1h1.25M1696.6 826.4h1.25M1761.4 820.4h1.25M1483.9 756.7h1.25M1544.5 757.9h1.25M1089.2 765.4h1.25M1706.0 899.5h1.25M904.9 910.3h1.25M2182.1 833.5h1.25M2014.0 763.2h1.25M2114.6 747.7h1.25M1314.8 722.4h1.25M1527.3 822.7h1.25M1360.6 899.4h1.25M1859.9 877.5h1.25M2050.0 728.8h1.25M1284.5 839.4h1.25M947.9 843.4h1.25M2220.9 786.5h1.25M2214.2 811.1h1.25M2427.7 800.9h1.25M1550.1 734.1h1.25M1283.0 867.2h1.25M2486.5 921.4h1.25M2183.0 814.8h1.25M1698.6 876.5h1.25M2374.7 870.8h1.25M1927.5 757.0h1.25M1909.0 890.2h1.25M2174.8 735.0h1.25M2060.9 787.9h1.25M1147.0 914.9h1.25M2107.2 743.8h1.25M2243.6 909.0h1.25M2369.3 869.5h1.25M2250.2 881.2h1.25M1851.8 805.7h1.25M2238.2 877.6h1.25M2313.4 777.6h1.25M2461.7 825.5h1.25M2437.0 739.9h1.25M2474.1 878.2h1.25M1690.9 903.1h1.25M2008.0 862.3h1.25M1525.3 877.5h1.25M2186.3 856.7h1.25M2430.1 886.1h1.25M1548.7 733.9h1.25M1954.0 888.3h1.25M1439.0 838.5h1.25M2256.5 879.3h1.25M1875.4 810.2h1.25M1432.1 760.0h1.25M1462.2 890.0h1.25M1899.3 776.2h1.25M1024.8 771.8h1.25M1607.6 852.2h1.25M2208.5 740.9h1.25M2004.1 724.6h1.25M2234.6 753.9h1.25M1326.9 913.3h1.25M1476.5 762.2h1.25M2344.7 841.7h1.25M2351.4 797.2h1.25M1702.5 912.9h1.25M1714.1 919.6h1.25M1168.6 910.7h1.25M2212.3 767.7h1.25M1459.9 736.8h1.25M1789.7 893.6h1.25M1725.8 793.6h1.25M2408.5 900.1h1.25M1976.7 731.6h1.25M1907.1 807.5h1.25M2456.6 790.5h1.25M1968.3 846.2h1.25M1498.7 823.6h1.25M1993.6 902.9h1.25M1699.9 790.9h1.25M2254.1 856.8h1.25M1797.5 808.2h1.25M2116.3 899.6h1.25M2079.7 870.5h1.25M2448.6 899.6h1.25M1117.9 837.0h1.25M956.8 796.8h1.25M1935.9 773.9h1.25M2135.0 776.0h1.25M1775.9 802.7h1.25M2490.0 849.7h1.25M2204.9 855.4h1.25M1506.3 914.4h1.25M2048.2 858.3h1.25M1336.7 749.3h1.25M1826.7 886.1h1.25M2186.4 787.5h1.25M1110.3 822.3h1.25M1393.5 727.0h1.25M1369.9 794.9h1.25M2471.6 914.2h1.25M1188.0 779.7h1.25M1514.6 914.5h1.25M1319.2 758.0h1.25M2375.8 808.7h1.25M2257.9 847.2h1.25M2161.7 780.8h1.25M1130.3 872.0h1.25M1799.7 854.1h1.25M2118.8 772.7h1.25M1477.1 905.0h1.25M1751.3 775.4h1.25M1917.3 769.5h1.25M2149.7 724.5h1.25M2240.7 832.7h1.25M1462.1 909.6h1.25M1317.0 766.1h1.25M995.0 829.0h1.25M1996.1 801.0h1.25M2209.6 738.9h1.25M1385.2 848.8h1.25M2472.2 846.6h1.25M2019.1 875.6h1.25M1529.3 909.7h1.25M2102.1 786.4h1.25M1526.2 882.0h1.25M1455.6 754.3h1.25M2314.7 825.5h1.25M1737.9 853.9h1.25M2363.9 743.5h1.25M1437.5 729.6h1.25M1560.1 819.4h1.25M2282.3 853.6h1.25M1831.1 799.2h1.25M1824.3 772.4h1.25M2270.5 878.4h1.25M2260.0 747.1h1.25M1985.4 871.3h1.25M1703.9 901.1h1.25M2359.5 869.1h1.25M2231.3 849.7h1.25M2326.3 743.0h1.25M2039.0 861.0h1.25M1887.9 772.7h1.25M990.8 840.3h1.25M1329.4 759.9h1.25M1248.5 735.3h1.25M2484.6 881.2h1.25M1472.1 860.1h1.25M1332.8 728.2h1.25M1613.6 830.3h1.25M2241.9 738.8h1.25M1424.9 833.1h1.25M2261.7 882.6h1.25M1764.0 722.3h1.25M1710.7 803.3h1.25M983.8 845.8h1.25M1842.8 798.4h1.25M1722.9 837.3h1.25M1252.5 894.7h1.25M2203.7 914.0h1.25M1422.2 919.2h1.25M1627.2 856.6h1.25M2046.0 809.7h1.25M1442.4 755.1h1.25M1543.1 774.2h1.25M1199.7 867.6h1.25M1602.0 756.7h1.25M2038.4 756.5h1.25M1317.2 831.4h1.25M2034.2 916.4h1.25M2110.6 911.4h1.25M2394.2 864.8h1.25M2064.3 728.9h1.25M2301.4 864.7h1.25M1917.3 770.3h1.25M1465.0 749.7h1.25M1920.6 920.2h1.25M1383.3 725.1h1.25M1168.3 789.2h1.25M2204.2 809.7h1.25M1133.3 876.2h1.25M2510.5 903.8h1.25M2188.2 814.1h1.25M2232.9 742.4h1.25M1059.2 832.1h1.25M2376.0 862.3h1.25M2436.0 918.0h1.25M1598.9 866.9h1.25M1512.3 883.2h1.25M2264.9 743.6h1.25M1843.5 794.1h1.25M895.0 887.0h1.25M1643.3 724.9h1.25M2343.3 826.0h1.25M996.8 782.6h1.25M2337.2 815.8h1.25M1932.6 758.4h1.25M1209.0 810.0h1.25M1927.5 861.6h1.25M1603.6 729.9h1.25M2072.5 727.1h1.25M1654.7 798.4h1.25M1987.6 863.0h1.25M1274.7 849.8h1.25M1656.4 745.2h1.25M2376.3 839.4h1.25M2504.3 763.1h1.25M1525.7 878.3h1.25M2236.0 846.6h1.25M2100.7 723.9h1.25M1034.4 917.1h1.25M1985.9 907.7h1.25M1931.2 905.4h1.25M1312.8 747.6h1.25M2481.8 862.3h1.25M1723.0 737.8h1.25M2175.3 899.3h1.25M2281.4 830.5h1.25M2231.9 819.5h1.25M1900.3 838.5h1.25M2196.0 732.0h1.25M2245.6 883.2h1.25M1633.8 741.2h1.25M1950.0 758.7h1.25M1586.2 738.7h1.25M2487.2 828.5h1.25M1460.3 735.4h1.25M2081.9 891.0h1.25M2276.3 736.9h1.25M1485.0 778.4h1.25M2134.9 746.5h1.25M1878.2 917.6h1.25M2019.8 839.3h1.25M1736.1 809.9h1.25M1550.6 841.9h1.25M1947.6 904.8h1.25M2086.0 880.1h1.25M2382.6 888.5h1.25M2059.6 722.3h1.25M2000.7 891.1h1.25M1589.1 896.9h1.25M2042.9 768.0h1.25M1374.7 787.8h1.25M1414.0 735.5h1.25M1609.0 918.1h1.25M1956.5 908.0h1.25M2134.8 888.4h1.25M2516.6 871.1h1.25M1331.3 767.4h1.25M1259.9 898.6h1.25M1421.1 874.7h1.25M2155.6 899.3h1.25M2187.9 825.6h1.25M1912.0 791.6h1.25M1764.4 914.9h1.25M1145.2 825.4h1.25M1766.2 909.2h1.25M1550.8 904.2h1.25M2015.4 915.3h1.25M1308.3 863.5h1.25M2509.1 752.3h1.25M1600.9 857.5h1.25M2016.8 869.7h1.25M2119.7 767.2h1.25M2017.6 759.1h1.25M1307.2 914.6h1.25M1938.9 837.8h1.25M1960.0 839.2h1.25M2023.8 778.6h1.25M1065.8 817.7h1.25M2011.7 772.3h1.25M2146.5 752.6h1.25M2014.9 807.7h1.25M2078.8 735.5h1.25M2414.6 786.5h1.25M2244.1 762.6h1.25M2287.4 881.4h1.25M1984.0 773.2h1.25M2369.4 748.6h1.25M1965.1 836.9h1.25M1968.4 753.2h1.25M2497.5 794.9h1.25M1953.6 833.3h1.25M2283.3 742.8h1.25M2465.2 790.9h1.25M2069.5 744.5h1.25M2177.0 767.8h1.25M1482.8 823.7h1.25M1063.5 767.1h1.25M1349.6 794.4h1.25M2138.8 762.1h1.25M1481.4 848.1h1.25M1656.6 895.2h1.25M963.2 852.7h1.25M1601.5 739.9h1.25M1637.1 862.6h1.25M1669.3 751.8h1.25M991.8 790.4h1.25M2421.6 830.3h1.25M2105.0 832.0h1.25M2312.4 914.3h1.25M2292.1 738.7h1.25M2433.3 824.1h1.25M1274.6 751.2h1.25M2401.1 811.0h1.25M2083.8 731.3h1.25M1625.7 781.5h1.25M1077.0 918.7h1.25M1954.8 822.0h1.25M920.3 812.9h1.25M1764.1 764.2h1.25M1701.3 840.6h1.25M1951.8 745.9h1.25M2202.8 910.8h1.25M2098.7 892.6h1.25M1485.3 902.0h1.25M1179.1 762.7h1.25M1602.6 744.9h1.25M1195.3 870.3h1.25M2426.3 798.8h1.25M1997.8 718.6h1.25M2441.1 764.0h1.25M1665.2 821.4h1.25M2440.9 817.4h1.25M2512.6 844.0h1.25M2525.3 810.1h1.25M1549.9 786.7h1.25M1980.6 720.7h1.25M1495.5 749.4h1.25M1880.0 769.1h1.25M1627.5 831.7h1.25M2051.5 744.4h1.25M1275.8 740.8h1.25M1125.5 744.2h1.25M1837.0 898.6h1.25M1155.7 836.6h1.25M1553.1 899.0h1.25M1969.2 893.2h1.25M2455.1 771.4h1.25M2430.6 800.0h1.25M1355.6 915.2h1.25M2312.8 802.5h1.25M1751.4 890.9h1.25M2208.4 850.6h1.25M1724.1 740.0h1.25M1281.2 851.6h1.25M2198.6 901.1h1.25M2464.1 755.7h1.25M1005.1 900.9h1.25M1269.4 791.5h1.25M1995.0 731.1h1.25M2100.1 844.6h1.25M1656.4 854.5h1.25M1662.4 855.7h1.25M2047.2 849.4h1.25M1176.7 913.4h1.25M1263.4 804.7h1.25M1221.0 800.3h1.25M2361.5 763.9h1.25M2090.3 790.1h1.25M1971.9 874.0h1.25M1317.9 723.3h1.25M1008.0 836.0h1.25M1829.7 789.3h1.25M2039.5 806.1h1.25M1992.6 749.2h1.25M1488.5 914.3h1.25M2142.1 888.1h1.25M1936.9 846.7h1.25M2040.3 915.1h1.25M1301.0 885.2h1.25M1869.5 891.0h1.25M2320.5 837.3h1.25M1760.4 865.5h1.25M1328.4 730.4h1.25M1258.5 770.6h1.25M1068.0 908.5h1.25M1124.6 785.1h1.25M1407.0 802.0h1.25M1668.2 769.3h1.25M1907.2 859.5h1.25M1312.8 879.1h1.25M2079.6 786.4h1.25M1689.5 754.8h1.25M2409.1 831.4h1.25M2020.1 795.4h1.25M2060.2 763.3h1.25M2192.1 881.2h1.25M2045.0 881.6h1.25M2182.4 763.6h1.25M1033.6 852.7h1.25M1107.5 755.7h1.25M1305.5 803.2h1.25M1757.6 865.2h1.25M1358.7 847.8h1.25M2017.7 842.6h1.25M2364.4 758.2h1.25M1392.1 852.5h1.25M1309.3 748.4h1.25M1252.5 874.9h1.25M2059.0 913.5h1.25M2187.5 779.8h1.25M1399.2 864.6h1.25M2413.5 896.7h1.25M1640.0 756.7h1.25M1076.8 820.4h1.25M1477.2 863.6h1.25M1751.2 875.7h1.25M1517.0 815.6h1.25M1403.8 814.2h1.25M2052.5 874.7h1.25M1491.8 808.1h1.25M2406.8 908.4h1.25M1898.5 737.6h1.25M1630.1 847.2h1.25M1338.6 723.7h1.25M2495.0 903.4h1.25M1092.3 812.0h1.25M1373.8 730.1h1.25M2115.6 874.8h1.25M1599.9 733.7h1.25M1528.3 735.4h1.25M1354.1 874.2h1.25M1755.4 887.6h1.25M1158.4 751.8h1.25M1580.8 785.6h1.25M1082.9 766.0h1.25M1072.6 769.5h1.25M2347.8 902.3h1.25M1658.2 913.0h1.25M1874.3 775.5h1.25M1645.8 863.5h1.25M2088.2 742.7h1.25M2218.9 785.8h1.25M1288.1 768.6h1.25M2510.5 746.6h1.25M2286.6 782.2h1.25M1188.7 802.2h1.25M2300.6 834.4h1.25M897.1 873.3h1.25M2360.4 912.1h1.25M1418.3 890.8h1.25M2227.9 770.8h1.25M1482.2 793.2h1.25M1460.8 793.9h1.25M1061.5 762.8h1.25M1555.8 847.0h1.25M2340.5 871.7h1.25M1282.2 905.4h1.25M2510.6 866.0h1.25M2122.5 883.5h1.25M2262.2 743.5h1.25M1767.4 785.3h1.25M2230.7 787.1h1.25M2269.0 890.7h1.25M2326.6 744.7h1.25M2424.4 869.3h1.25M1994.2 850.4h1.25M959.0 895.3h1.25M1630.1 785.9h1.25M2168.7 877.1h1.25M2311.8 760.1h1.25M1440.4 767.4h1.25M2191.1 762.8h1.25M2099.9 756.9h1.25M1640.6 798.8h1.25M2200.7 912.5h1.25M1390.1 846.3h1.25M2352.7 812.9h1.25M2360.8 867.1h1.25M1392.8 896.0h1.25M1823.6 737.8h1.25M1847.0 886.8h1.25M1733.5 815.7h1.25M1565.4 897.4h1.25M1975.5 758.8h1.25M1476.4 790.8h1.25M2458.0 859.4h1.25M1852.6 805.1h1.25M2061.0 804.4h1.25M1032.0 823.9h1.25M2178.5 789.5h1.25M1246.0 869.4h1.25M1240.5 897.9h1.25M1593.5 794.4h1.25M2048.4 907.5h1.25M2085.2 754.5h1.25M1780.1 819.1h1.25M1980.3 745.5h1.25M2454.7 922.0h1.25M1803.6 879.8h1.25M1181.8 903.5h1.25M2130.2 894.9h1.25M1475.4 906.3h1.25M1707.0 901.1h1.25M2362.1 912.7h1.25M1720.8 908.1h1.25M1801.7 745.6h1.25M1918.7 881.5h1.25M1577.7 840.0h1.25M1306.5 772.9h1.25M1571.8 821.7h1.25M1650.8 735.0h1.25M889.3 786.1h1.25M2111.8 764.8h1.25M1300.8 822.4h1.25M1168.8 840.2h1.25M1212.5 836.6h1.25M2113.2 862.7h1.25M2049.6 772.1h1.25M2259.9 906.6h1.25M2191.6 855.6h1.25M1113.9 810.8h1.25M2522.1 785.2h1.25M2141.8 766.5h1.25M1897.6 778.5h1.25M1197.9 781.1h1.25M2481.5 816.2h1.25M2435.2 813.1h1.25M2034.4 915.2h1.25M1544.0 788.9h1.25M1579.8 788.5h1.25M2016.9 796.7h1.25M1130.7 894.1h1.25M890.6 891.0h1.25M1463.5 845.8h1.25M2394.7 798.7h1.25M1592.0 777.4h1.25M1792.2 852.5h1.25M2089.9 911.6h1.25M1119.2 791.4h1.25M2182.0 837.5h1.25M1994.8 786.1h1.25M2435.2 829.2h1.25M1542.6 753.6h1.25M1070.0 900.9h1.25M924.0 782.6h1.25M1695.9 790.9h1.25M2353.4 788.1h1.25M1755.6 907.5h1.25M1932.1 814.2h1.25M1427.5 795.7h1.25M1882.7 877.9h1.25M1309.0 792.3h1.25M1518.2 790.7h1.25M2382.8 827.0h1.25M1334.0 784.5h1.25M2232.1 749.0h1.25M2015.7 720.5h1.25M2206.0 746.3h1.25M2087.2 864.3h1.25M2378.4 911.1h1.25M1786.8 905.9h1.25M1197.6 870.1h1.25M1515.0 735.2h1.25M2316.8 871.2h1.25M1862.6 917.2h1.25M2045.8 845.8h1.25M1177.8 841.5h1.25M2475.9 790.3h1.25M2491.4 805.5h1.25M1523.4 768.2h1.25M1262.9 916.8h1.25M2041.9 752.1h1.25M2093.4 728.1h1.25M1752.7 856.2h1.25M935.2 806.6h1.25M1827.6 809.0h1.25M2330.7 839.8h1.25M1434.7 797.6h1.25M2432.8 893.0h1.25M2385.8 831.5h1.25M2200.2 877.9h1.25M2193.6 801.3h1.25M1981.7 833.4h1.25M2078.9 800.2h1.25M2460.1 912.8h1.25M2409.0 842.7h1.25M1400.7 793.6h1.25M1322.7 902.2h1.25M2184.0 878.4h1.25M2231.8 920.1h1.25M2012.5 781.6h1.25M2126.9 770.0h1.25M1885.5 748.6h1.25M2291.7 816.7h1.25M1332.8 906.1h1.25M1016.6 907.6h1.25M1125.4 872.8h1.25M2373.3 836.8h1.25M1583.3 908.3h1.25M1335.3 739.4h1.25M2314.1 807.0h1.25M2075.6 768.9h1.25M2082.1 849.6h1.25M1040.6 817.7h1.25M1489.9 905.5h1.25M2432.3 921.6h1.25M1582.4 833.8h1.25M2210.8 872.3h1.25M1630.9 893.9h1.25M1540.5 911.7h1.25M1658.2 740.4h1.25M2113.0 745.8h1.25M1998.5 727.0h1.25M2506.7 827.4h1.25M2098.7 743.0h1.25M1928.3 793.6h1.25M1666.6 733.9h1.25M2281.4 900.0h1.25M936.6 811.7h1.25M2063.0 866.2h1.25M1444.9 908.2h1.25M1185.0 744.1h1.25M1077.7 754.3h1.25M1433.6 749.7h1.25M2410.6 813.6h1.25M2173.5 767.5h1.25M2382.2 761.6h1.25M2372.0 842.2h1.25M2478.4 874.9h1.25M1918.3 825.8h1.25M2287.1 807.4h1.25M1041.9 904.2h1.25M2002.6 869.4h1.25M1261.9 811.4h1.25M2463.4 906.2h1.25M1144.2 856.9h1.25M1546.9 750.6h1.25M1105.7 812.9h1.25M1320.9 791.7h1.25M1791.9 872.9h1.25M1850.1 749.4h1.25M2338.5 791.7h1.25M2459.8 918.2h1.25M1111.0 836.0h1.25M1513.8 828.8h1.25M1396.6 721.9h1.25M1916.1 832.0h1.25M2440.8 857.2h1.25M1476.4 911.6h1.25M1923.6 827.9h1.25M2299.8 854.0h1.25M1473.1 840.6h1.25M1374.3 915.7h1.25M1715.3 740.3h1.25M2257.4 853.8h1.25M2006.3 906.9h1.25M2513.0 855.7h1.25M961.1 803.9h1.25M1395.2 833.1h1.25M894.6 801.6h1.25M1850.3 885.8h1.25M2414.2 771.1h1.25M2329.3 822.2h1.25M1412.5 915.1h1.25M1546.7 859.7h1.25M990.7 887.1h1.25M1123.5 791.0h1.25M2449.5 920.8h1.25M2515.4 844.4h1.25M1955.6 749.2h1.25M2075.1 829.6h1.25M1470.9 901.4h1.25M1125.9 837.2h1.25M1143.4 819.6h1.25M1802.5 801.0h1.25M2125.7 765.8h1.25M2236.3 765.7h1.25M1432.3 873.6h1.25M1245.9 854.0h1.25M1625.0 819.6h1.25M2400.3 840.4h1.25M1948.0 803.3h1.25M1387.8 821.5h1.25M2421.7 766.3h1.25M2377.7 861.5h1.25M1585.9 750.2h1.25M2275.0 849.5h1.25M1714.3 785.1h1.25M1048.6 869.0h1.25M1720.5 750.6h1.25M1982.2 805.3h1.25M1968.4 734.8h1.25M1024.5 857.6h1.25M1431.4 770.8h1.25M1983.9 761.9h1.25M1539.6 857.8h1.25M1588.9 748.1h1.25M996.0 827.9h1.25M2394.2 736.6h1.25M1706.8 816.6h1.25M1199.4 854.0h1.25M2211.2 776.1h1.25M2417.2 883.8h1.25M1659.4 745.1h1.25M1676.1 742.2h1.25M2008.7 859.7h1.25M1831.6 917.1h1.25M954.4 863.3h1.25M1839.6 864.9h1.25M1452.8 859.3h1.25M1483.6 862.7h1.25M1335.8 917.5h1.25M1030.6 865.6h1.25M1928.1 748.0h1.25M2315.4 863.7h1.25M1069.6 794.4h1.25M1462.1 896.2h1.25M2520.0 781.6h1.25M2376.0 877.9h1.25M2304.0 837.2h1.25M2475.5 848.7h1.25M2440.1 832.6h1.25M1203.5 822.9h1.25M1435.3 793.0h1.25M1720.3 837.1h1.25M1246.3 773.1h1.25M1709.4 802.3h1.25M1973.2 754.2h1.25M1755.4 772.8h1.25M2147.5 861.0h1.25M2165.6 822.6h1.25M1289.8 906.7h1.25M1497.5 775.8h1.25M1541.7 862.0h1.25M2227.3 815.4h1.25M2083.4 759.9h1.25M1624.0 789.7h1.25M1384.3 790.0h1.25M2122.3 867.1h1.25M1221.3 764.2h1.25M1957.5 855.3h1.25M1925.6 858.9h1.25M1329.0 728.5h1.25M1473.6 722.7h1.25M2463.4 824.1h1.25M1983.2 915.1h1.25M2204.1 763.2h1.25M1434.6 738.4h1.25M2189.7 867.8h1.25M1682.7 792.1h1.25M1324.2 816.4h1.25M2052.0 900.4h1.25M2277.2 894.7h1.25M1603.0 802.8h1.25M1396.9 916.7h1.25M2397.7 891.7h1.25M1425.6 891.4h1.25M2346.1 804.0h1.25M1534.2 838.6h1.25M1522.0 794.1h1.25M898.2 792.6h1.25M1428.0 856.0h1.25M1908.0 754.8h1.25M913.5 854.9h1.25M1363.6 757.2h1.25M2287.9 903.3h1.25M1264.1 836.7h1.25M1410.0 723.5h1.25M1415.5 848.7h1.25M1870.8 821.1h1.25M1565.5 790.8h1.25M2365.2 739.9h1.25M2503.6 765.5h1.25M2289.9 766.2h1.25M1846.6 793.7h1.25M942.5 880.1h1.25M1323.1 875.9h1.25M1668.7 919.3h1.25M1908.6 876.3h1.25M2266.2 829.0h1.25M1517.4 880.7h1.25M1052.2 769.6h1.25M1604.9 920.6h1.25M1715.8 775.6h1.25M2035.5 822.3h1.25M2496.1 750.9h1.25M1720.4 817.7h1.25M1492.0 893.4h1.25M1432.2 842.7h1.25M1807.3 774.5h1.25M1068.3 851.2h1.25M1419.2 783.7h1.25M2270.9 785.8h1.25M1567.1 913.1h1.25M1474.0 798.8h1.25M1146.6 852.5h1.25M1614.7 799.6h1.25M1263.1 878.7h1.25M2249.3 793.2h1.25M2087.4 721.9h1.25M1241.6 913.9h1.25M1992.2 818.4h1.25M1657.5 756.7h1.25M1164.7 848.9h1.25M1305.8 848.8h1.25M1718.7 780.7h1.25M1786.4 743.6h1.25M1675.6 843.0h1.25M1101.8 779.6h1.25M1779.0 843.0h1.25M2163.8 833.7h1.25M1245.7 807.2h1.25M1812.8 871.1h1.25M1479.2 808.4h1.25M2476.3 885.4h1.25M1954.5 737.9h1.25M1887.1 722.8h1.25M2417.2 916.2h1.25M2078.4 771.1h1.25M2272.2 752.5h1.25M2242.7 823.3h1.25M2246.5 857.8h1.25M1756.9 893.7h1.25M2394.5 902.5h1.25M2312.1 919.9h1.25M1604.6 879.9h1.25M1342.4 906.9h1.25M2214.4 866.8h1.25M1254.7 734.8h1.25M1788.9 842.1h1.25M2298.8 745.6h1.25M2031.1 811.6h1.25M2173.9 809.9h1.25M2106.0 887.2h1.25M1248.8 760.8h1.25M1486.1 821.0h1.25M1705.1 721.5h1.25M2120.3 869.5h1.25M2321.8 789.5h1.25M1225.2 787.6h1.25M1963.0 799.6h1.25M1743.6 747.7h1.25M2391.9 813.2h1.25M1714.2 878.1h1.25M2217.3 735.4h1.25M1334.2 846.9h1.25M1674.0 793.6h1.25M1832.5 760.9h1.25M2194.6 768.3h1.25M2247.4 829.7h1.25M1870.1 845.0h1.25M2300.1 878.0h1.25M1996.2 883.9h1.25M1598.8 854.7h1.25M2448.3 755.0h1.25M1045.8 800.9h1.25M1125.4 761.6h1.25M1518.6 746.7h1.25M1661.9 826.8h1.25M1603.7 819.8h1.25M2410.7 757.0h1.25M943.1 874.1h1.25M1765.4 760.8h1.25M2165.7 779.1h1.25M2076.5 763.0h1.25M1822.9 849.5h1.25M1491.7 814.9h1.25M987.4 848.5h1.25M1132.5 829.4h1.25M1046.4 888.8h1.25M1685.5 767.6h1.25M1374.0 811.1h1.25M1491.6 878.4h1.25M2069.6 739.5h1.25M1422.0 738.3h1.25M2027.5 876.7h1.25M2519.1 759.1h1.25M2412.6 796.8h1.25M1394.3 731.0h1.25M2440.2 821.5h1.25M1605.4 806.0h1.25M2145.1 887.1h1.25M1663.5 752.7h1.25M1548.8 899.6h1.25M1551.1 852.1h1.25M1801.3 811.0h1.25M1826.2 766.5h1.25M1797.5 894.1h1.25M1011.4 792.0h1.25M1912.1 846.2h1.25M2267.7 812.8h1.25M1095.6 777.8h1.25M2078.8 758.1h1.25M1937.7 851.3h1.25M1962.7 720.5h1.25M1606.9 782.9h1.25M1863.0 785.4h1.25M2181.4 779.0h1.25M1778.5 882.5h1.25M2071.8 792.0h1.25M1175.8 797.4h1.25M1563.0 741.2h1.25M1740.5 777.8h1.25M2472.1 794.9h1.25M1596.5 763.0h1.25M2474.6 782.3h1.25M1943.7 887.5h1.25M1527.2 871.6h1.25M1338.9 738.6h1.25M949.5 808.5h1.25M1214.2 806.7h1.25M1334.6 747.4h1.25M1734.7 803.6h1.25M2424.8 900.9h1.25M935.7 807.5h1.25M1378.4 836.7h1.25M2049.2 729.0h1.25M2401.1 738.5h1.25M1376.3 863.5h1.25M1732.1 744.2h1.25M2231.6 801.9h1.25M1294.6 765.6h1.25M2434.7 800.1h1.25M1863.7 893.8h1.25M2021.6 837.0h1.25M2066.8 773.2h1.25M1697.9 754.4h1.25M1599.5 774.0h1.25M1844.0 777.6h1.25M1332.3 848.4h1.25M1020.8 881.0h1.25M1256.7 739.7h1.25M1709.4 864.2h1.25M1495.4 800.9h1.25M2349.2 772.4h1.25M2494.8 899.9h1.25M2509.9 910.3h1.25M1303.3 883.8h1.25M1887.2 758.0h1.25M2521.9 849.4h1.25M2212.7 831.0h1.25M1306.5 842.9h1.25M1199.3 811.3h1.25M1662.9 849.8h1.25M2011.3 724.9h1.25M1579.3 793.2h1.25M2025.9 868.5h1.25M1950.3 798.9h1.25M1817.5 822.2h1.25M1189.3 911.6h1.25M2159.6 920.5h1.25M1646.3 888.9h1.25M1276.1 869.0h1.25M2424.9 887.7h1.25M2327.3 771.1h1.25M2176.1 813.9h1.25M1394.3 791.9h1.25M2195.0 889.6h1.25M2270.3 853.9h1.25M1160.3 748.1h1.25M2275.7 783.8h1.25M2277.2 778.3h1.25M1320.3 797.3h1.25M1043.8 862.2h1.25M1709.7 766.7h1.25M1352.0 915.8h1.25M1492.7 919.8h1.25M2339.5 741.7h1.25M2050.3 882.8h1.25M2024.8 829.3h1.25M2218.0 747.8h1.25M1768.5 770.8h1.25M1537.0 755.4h1.25M2045.9 834.1h1.25M2162.6 845.4h1.25M1866.3 905.9h1.25M2217.3 832.8h1.25M1416.8 907.1h1.25M1490.8 737.0h1.25M1428.6 861.5h1.25M2412.9 849.0h1.25M1970.5 909.1h1.25M2160.4 807.8h1.25M1640.1 872.5h1.25M1402.9 738.6h1.25M1900.0 882.6h1.25M1288.6 856.8h1.25M1691.5 784.9h1.25M2442.7 921.3h1.25M1613.5 879.4h1.25M1919.8 751.7h1.25M2479.6 751.9h1.25M1671.3 800.9h1.25M2450.8 801.2h1.25M2278.7 876.6h1.25M1845.0 765.0h1.25M1381.8 817.2h1.25M1530.3 849.0h1.25M1711.8 782.5h1.25M1878.8 921.3h1.25M1576.1 888.3h1.25M2028.4 915.0h1.25M2257.6 836.7h1.25M1511.3 769.9h1.25M1901.7 729.5h1.25M1772.6 793.4h1.25M1689.8 799.3h1.25M1048.2 866.7h1.25M1864.6 739.9h1.25M1866.2 895.4h1.25M2504.0 872.3h1.25M955.3 897.0h1.25M1335.2 905.5h1.25M2239.7 900.4h1.25M1367.2 872.8h1.25M1894.8 784.4h1.25M1773.8 907.2h1.25M1812.8 904.2h1.25M1811.7 920.4h1.25M928.0 810.8h1.25M2076.3 915.6h1.25M1905.9 814.5h1.25M1924.0 825.9h1.25M2040.3 911.1h1.25M902.9 782.0h1.25M1946.9 880.9h1.25M2040.0 824.9h1.25M1876.8 783.1h1.25M1845.7 912.6h1.25M2162.6 912.1h1.25M1449.6 881.5h1.25M1168.0 831.1h1.25M1325.6 817.6h1.25M2421.3 749.6h1.25M2264.0 797.8h1.25M1781.7 907.2h1.25M1100.2 778.5h1.25M1835.4 741.1h1.25M2199.2 820.5h1.25M1115.6 885.0h1.25M1236.8 909.6h1.25M2307.6 886.2h1.25M1040.6 873.9h1.25M1923.1 887.5h1.25M2501.0 783.5h1.25M2252.6 905.7h1.25M1396.1 856.8h1.25M2006.5 890.9h1.25M1813.1 772.8h1.25M2294.8 899.2h1.25M1278.8 859.6h1.25M1080.6 876.4h1.25M1384.2 736.2h1.25M1343.9 875.0h1.25M1648.2 884.0h1.25M1454.5 897.3h1.25M2119.2 734.8h1.25M1979.2 733.2h1.25M1286.3 852.7h1.25M1553.5 808.6h1.25M2178.2 863.1h1.25M2171.1 825.5h1.25M2031.2 742.2h1.25M1513.8 776.3h1.25M1344.5 868.3h1.25M2302.2 847.5h1.25M1671.1 794.2h1.25M2397.0 909.5h1.25M1620.1 832.8h1.25M2299.7 768.8h1.25M1305.7 737.2h1.25M1706.3 874.3h1.25M1137.7 805.1h1.25M1672.0 794.8h1.25M2261.7 899.8h1.25M1499.1 741.4h1.25M1927.8 868.5h1.25M2399.6 852.0h1.25M1386.5 822.1h1.25M1353.7 807.9h1.25M1650.6 903.9h1.25M2371.1 906.8h1.25M1666.8 914.7h1.25M1108.7 905.7h1.25M2316.1 801.1h1.25M2275.5 884.8h1.25M1496.0 886.7h1.25M1231.7 871.0h1.25" stroke="#e6e7e9" stroke-width="1.25" fill="none"/><path d="M904.6 359.5L904.6 779.8" stroke="#c9cbce" stroke-width="1" fill="none"/><path d="M904.6 364.5L2530.5 364.5" stroke="#c9cbce" stroke-width="1" fill="none"/><path d="M904.6 362L909 364.5" stroke="#c9cbce" stroke-width="1" fill="none"/><path d="M875.8 500L2530.5 500" stroke="#c9cbce" stroke-width="1" fill="none"/><path d="M846 779.8L2530.5 779.8" stroke="#d2d4d7" stroke-width="1" fill="none"/><path d="M875.7 779.8V924.9H2530.5" stroke="#9da1a7" stroke-width="1" fill="none"/><path d="M904.7 696.0L1778.9 640.5M906.5 724.1L1780.7 668.6M908.3 752.3L1782.5 696.8M904.7 696.0L908.3 752.3M938.3 693.9L941.9 750.2M971.9 691.7L975.5 748.0M1005.6 689.6L1009.1 745.9M1039.2 687.5L1042.8 743.7M1072.8 685.3L1076.4 741.6M1106.4 683.2L1110.0 739.5M1140.1 681.1L1143.6 737.3M1173.7 678.9L1177.3 735.2M1207.3 676.8L1210.9 733.1M1240.9 674.7L1244.5 730.9M1274.6 672.5L1278.1 728.8M1308.2 670.4L1311.8 726.7M1341.8 668.2L1345.4 724.5M1375.4 666.1L1379.0 722.4M1409.0 664.0L1412.6 720.3M1442.7 661.8L1446.2 718.1M1476.3 659.7L1479.9 716.0M1509.9 657.6L1513.5 713.9M1543.5 655.4L1547.1 711.7M1577.2 653.3L1580.7 709.6M1610.8 651.2L1614.4 707.5M1644.4 649.0L1648.0 705.3M1678.0 646.9L1681.6 703.2M1711.7 644.8L1715.2 701.1M1745.3 642.6L1748.9 698.9M1778.9 640.5L1782.5 696.8" stroke="#5a4ef5" stroke-width="1.75" fill="none"/><path d="M1788.8 640.7L2530.6 652.8M1788.3 669.0L2530.1 681.1M1787.9 697.3L2529.7 709.4M1788.8 640.7L1787.9 697.3M1822.5 641.2L1821.6 697.8M1856.2 641.8L1855.3 698.4M1890.0 642.4L1889.0 698.9M1923.7 642.9L1922.7 699.5M1957.4 643.5L1956.5 700.0M1991.1 644.0L1990.2 700.6M2024.8 644.6L2023.9 701.1M2058.5 645.1L2057.6 701.7M2092.3 645.6L2091.3 702.2M2126.0 646.2L2125.1 702.8M2159.7 646.8L2158.8 703.3M2193.4 647.3L2192.5 703.9M2227.1 647.9L2226.2 704.4M2260.9 648.4L2259.9 705.0M2294.6 648.9L2293.6 705.5M2328.3 649.5L2327.4 706.1M2362.0 650.0L2361.1 706.6M2395.7 650.6L2394.8 707.2M2429.4 651.1L2428.5 707.7M2463.2 651.7L2462.2 708.3M2496.9 652.2L2496.0 708.8M2530.6 652.8L2529.7 709.4" stroke="#5a4ef5" stroke-width="1.75" fill="none"/><path d="M1152.5 736.6L1404 719.8" stroke="#f9b233" stroke-width="10.5" stroke-linecap="round"/><rect x="933.4" y="720.0" rx="1" width="3.6" height="77.0" fill="#212830" stroke="#f2f3f4" stroke-width="1.15"/><rect x="1096.9" y="709.7" rx="1" width="3.6" height="62.8" fill="#212830" stroke="#f2f3f4" stroke-width="1.15"/><rect x="1259.9" y="698.6" rx="1" width="3.6" height="49.6" fill="#212830" stroke="#f2f3f4" stroke-width="1.15"/><rect x="1423.0" y="688.7" rx="1" width="3.6" height="57.0" fill="#212830" stroke="#f2f3f4" stroke-width="1.15"/><rect x="1586.0" y="678.5" rx="1" width="3.6" height="67.2" fill="#212830" stroke="#f2f3f4" stroke-width="1.15"/><rect x="1749.2" y="667.5" rx="1" width="3.6" height="78.0" fill="#212830" stroke="#f2f3f4" stroke-width="1.15"/><rect x="1816.1" y="666.7" rx="1" width="3.6" height="78.8" fill="#212830" stroke="#f2f3f4" stroke-width="1.15"/><rect x="1979.2" y="669.4" rx="1" width="3.6" height="69.3" fill="#212830" stroke="#f2f3f4" stroke-width="1.15"/><rect x="2142.6" y="672.0" rx="1" width="3.6" height="72.4" fill="#212830" stroke="#f2f3f4" stroke-width="1.15"/><rect x="2306.2" y="675.0" rx="1" width="3.6" height="76.9" fill="#212830" stroke="#f2f3f4" stroke-width="1.15"/><rect x="2469.6" y="677.6" rx="1" width="3.6" height="79.1" fill="#212830" stroke="#f2f3f4" stroke-width="1.15"/><text transform="translate(1258.7 644.8) scale(0.888 1)" font-size="41" fill="#ffffff" stroke="#ffffff" stroke-width="1.6" stroke-linejoin="round" font-family="Liberation Sans, sans-serif">(-3.62° W)</text><text transform="translate(1722.7 596.3) scale(0.876 1)" font-size="41" fill="#ffffff" stroke="#ffffff" stroke-width="1.6" stroke-linejoin="round" font-family="Liberation Sans, sans-serif">0.002m</text><text transform="translate(1740.7 632.7) scale(0.876 1)" font-size="41" fill="#ffffff" stroke="#ffffff" stroke-width="1.6" stroke-linejoin="round" font-family="Liberation Sans, sans-serif">4.64°</text><text transform="translate(2156 625.3) scale(0.885 1)" font-size="41" fill="#ffffff" stroke="#ffffff" stroke-width="1.6" stroke-linejoin="round" font-family="Liberation Sans, sans-serif">(1.02° E)</text><text transform="translate(709.3 795.3) scale(0.876 1)" font-size="41" fill="#ffffff" stroke="#ffffff" stroke-width="1.6" stroke-linejoin="round" font-family="Liberation Sans, sans-serif">530.10</text><text transform="translate(765 925.3) scale(0.876 1)" font-size="41" fill="#ffffff" stroke="#ffffff" stroke-width="1.6" stroke-linejoin="round" font-family="Liberation Sans, sans-serif">West</text><path d="M689.5 860L689.5 988" stroke="#e8eaec" stroke-width="1" fill="none"/><path d="M674.5 924.5L754 924.5" stroke="#e8eaec" stroke-width="1" fill="none"/><rect x="686.5" y="921.5" width="6" height="6" fill="#212830" stroke="#e8eaec"/><path d="M699.5 1169L699.5 1218" stroke="#e8eaec" stroke-width="1" fill="none"/><path d="M700 1219.5L750 1219.5" stroke="#e8eaec" stroke-width="1" fill="none"/><rect x="695.5" y="1214.5" width="9" height="9" fill="none" stroke="#e8eaec"/><path d="M700.5 1152.5L707 1160L713.5 1152.5M707 1160V1165.5" stroke="#e8eaec" fill="none"/><path d="M753.5 1205L767 1218M767 1205L753.5 1218" stroke="#e8eaec" fill="none"/><circle cx="2448.4" cy="292" r="53.5" fill="none" stroke="#4a515c" stroke-width="12"/><text x="2448.4" y="243" font-size="21" font-weight="bold" text-anchor="middle" fill="#c3c6ca" stroke="#212830" stroke-width="3" paint-order="stroke" font-family="Liberation Sans, sans-serif">N</text><text x="2448.4" y="356.3" font-size="21" font-weight="bold" text-anchor="middle" fill="#c3c6ca" stroke="#212830" stroke-width="3" paint-order="stroke" font-family="Liberation Sans, sans-serif">S</text><text x="2391.5" y="299.3" font-size="21" font-weight="bold" text-anchor="middle" fill="#c3c6ca" stroke="#212830" stroke-width="3" paint-order="stroke" font-family="Liberation Sans, sans-serif">W</text><text x="2504.5" y="299.3" font-size="21" font-weight="bold" text-anchor="middle" fill="#c3c6ca" stroke="#212830" stroke-width="3" paint-order="stroke" font-family="Liberation Sans, sans-serif">E</text><rect x="2422.5" y="266" width="51" height="51" fill="#b7babe"/><rect x="2426.5" y="270" width="43" height="43" fill="#aeb1b6"/><text transform="translate(2448.4 296.8) scale(0.8 1)" font-size="13.5" font-weight="bold" text-anchor="middle" fill="#4d525b" font-family="Liberation Sans, sans-serif">TOP</text><rect x="2424.5" y="379.5" width="47" height="17" rx="3.5" fill="#878e98" stroke="#9aa1ab"/><text x="2428.5" y="392" font-size="11" fill="#3a404a" font-family="Liberation Sans, sans-serif">WCS</text><path d="M2457 385H2465L2461 390.5Z" fill="none" stroke="#a5abb4" stroke-width="1"/><rect x="2495.5" y="422.5" width="31" height="211" rx="3" fill="#626973" stroke="#6b727c"/><g fill="none" stroke="#4f5660" stroke-width="1.3"><circle cx="2511" cy="452" r="10"/><circle cx="2511" cy="452" r="6"/><path d="M2503 444L2519 444L2521 452"/><path d="M2504 497C2502 492 2506 490 2507 494V487C2507 485 2510 485 2510 487V484C2510 482 2513 482 2513 484V486C2513 484 2516 484 2516 486V489C2516 487 2519 487 2519 489V498C2519 503 2515 505 2511 505C2507 505 2505 501 2504 497Z"/><path d="M2501 512L2515 530M2515 512L2501 530"/><circle cx="2516" cy="526" r="4"/><path d="M2519 529L2523 534"/><path d="M2511 551V585M2507 556L2511 550L2515 556"/><ellipse cx="2511" cy="572" rx="7" ry="3.5"/><rect x="2499" y="592" width="6" height="5"/><rect x="2507" y="592" width="6" height="5"/><rect x="2515" y="592" width="6" height="5"/><rect x="2499" y="601" width="16" height="12"/><path d="M2505 604L2511 607L2505 610Z" fill="#4f5660"/></g><path d="M2490 500H2530.5" stroke="#c9cbce" stroke-width="1" opacity="0.8"/><path d="M2508.5 471H2513.5L2511 474Z" fill="#4f5660"/><path d="M2508.5 543H2513.5L2511 546Z" fill="#4f5660"/><path d="M2508.5 587H2513.5L2511 590Z" fill="#4f5660"/></svg>
<span style="left:677.5px;top:191.5px;font-size:12px;line-height:16px;color:#d8dbe0;letter-spacing:0.16px;">[−][Top][2D Wireframe]</span>
<svg style="left:677px;top:208px;" width="17" height="16" viewBox="0 0 17 16"><path d="M1 1V8M1 1H5V5H1" stroke="#e4e6ea" fill="none"/><path d="M9 3L12 1L15 3V7H9Z" fill="#e4e6ea"/><path d="M1 11L4 9L7 11V15H1Z" fill="#e4e6ea"/><path d="M9 13H15V9M11 11L9 13L11 15" stroke="#e4e6ea" fill="none"/></svg>
<div style="left:2470px;top:202px;width:10px;height:3px;background:#e4e6ea;"></div>
<svg style="left:2490px;top:196px;" width="11" height="10" viewBox="0 0 11 10"><rect x="3" y="0.8" width="7" height="6.5" fill="none" stroke="#e4e6ea" stroke-width="1.3"/><rect x="0.9" y="3" width="7" height="6.3" fill="#212830" stroke="#e4e6ea" stroke-width="1.7"/></svg>
<svg style="left:2509.5px;top:197px;" width="10" height="9" viewBox="0 0 10 9"><path d="M1 0.5L9 8.5M9 0.5L1 8.5" stroke="#e4e6ea" stroke-width="2.2"/></svg>
<div style="left:2531px;top:188px;width:25px;height:1057px;background:#222933;"></div>
<div style="left:2534px;top:191px;width:22px;height:23px;background:#3a4250;"></div>
<div style="left:2534px;top:219px;width:22px;height:23px;background:#3a4250;"></div>
<div style="left:2534px;top:247px;width:22px;height:23px;background:#3a4250;"></div>
<div style="left:2534px;top:275px;width:22px;height:23px;background:#3a4250;"></div>
<svg style="left:2537px;top:193px;" width="18" height="18" viewBox="0 0 18 18"><path d="M0 6L6 1H13L7 6Z" fill="#c9cdd4"/><path d="M0 9H8M0 12H8" stroke="#c9cdd4" stroke-width="1.5"/><rect x="9" y="6" width="8" height="11" fill="#dfe2e6"/><rect x="10.5" y="7.5" width="5" height="3.5" fill="#55b4f2"/><path d="M11 14H15" stroke="#3b4453"/></svg>
<svg style="left:2537px;top:222px;" width="17" height="16" viewBox="0 0 17 16"><rect x="0.5" y="3" width="16" height="12.5" fill="#dfe2e6"/><rect x="5" y="0.5" width="7" height="4" rx="1" fill="#dfe2e6"/></svg>
<svg style="left:2539px;top:249px;" width="14" height="18" viewBox="0 0 14 18"><rect x="0.5" y="0.5" width="12.5" height="17" fill="#dfe2e6"/><rect x="2.5" y="2.5" width="8.5" height="6" fill="#79c0f7"/><path d="M2.5 11.5H11M2.5 14.5H11" stroke="#3b4453" stroke-width="1.2"/></svg>
<svg style="left:2537px;top:279px;" width="18" height="15" viewBox="0 0 18 15"><g fill="none" stroke="#dfe2e6" stroke-width="1.4"><rect x="0.7" y="0.7" width="3.8" height="13.5"/><rect x="6.9" y="0.7" width="3.8" height="13.5"/><rect x="13.1" y="0.7" width="3.8" height="13.5"/></g></svg>
<div style="left:674px;top:1250.5px;width:1882px;height:104px;background:#222933;"></div>
<div style="left:674px;top:1250.5px;width:25px;height:103.5px;background:#2a313c;"></div>
<div style="left:699px;top:1250px;width:1831px;height:84px;background:#cccccc;"></div>
<div style="left:699px;top:1333.5px;width:1831px;height:1px;background:#2a2a2a;"></div>
<div style="left:699px;top:1334.5px;width:1831px;height:19.5px;background:#ffffff;"></div>
<div style="left:674px;top:1354px;width:1882px;height:2.5px;background:#1d232c;"></div>
<div style="left:674px;top:1356.5px;width:1882px;height:3px;background:#363e4b;"></div>
<div style="left:678.5px;top:1254px;width:1.6px;height:1.6px;background:#e4e6ea;"></div>
<div style="left:681.5px;top:1254px;width:1.6px;height:1.6px;background:#e4e6ea;"></div>
<div style="left:684.5px;top:1254px;width:1.6px;height:1.6px;background:#e4e6ea;"></div>
<div style="left:687.5px;top:1254px;width:1.6px;height:1.6px;background:#e4e6ea;"></div>
<div style="left:690.5px;top:1254px;width:1.6px;height:1.6px;background:#e4e6ea;"></div>
<div style="left:693.5px;top:1254px;width:1.6px;height:1.6px;background:#e4e6ea;"></div>
<div style="left:678.5px;top:1257px;width:1.6px;height:1.6px;background:#e4e6ea;"></div>
<div style="left:681.5px;top:1257px;width:1.6px;height:1.6px;background:#e4e6ea;"></div>
<div style="left:684.5px;top:1257px;width:1.6px;height:1.6px;background:#e4e6ea;"></div>
<div style="left:687.5px;top:1257px;width:1.6px;height:1.6px;background:#e4e6ea;"></div>
<div style="left:690.5px;top:1257px;width:1.6px;height:1.6px;background:#e4e6ea;"></div>
<div style="left:693.5px;top:1257px;width:1.6px;height:1.6px;background:#e4e6ea;"></div>
<svg style="left:680.5px;top:1267.5px;" width="9" height="9" viewBox="0 0 9 9"><path d="M1 1L8 8M8 1L1 8" stroke="#e4e6ea" stroke-width="1.7"/></svg>
<svg style="left:678px;top:1288px;" width="15" height="17" viewBox="0 0 15 17"><path d="M2 15.5L9 8" stroke="#e4e6ea" stroke-width="2.6" stroke-linecap="round"/><path d="M13.5 3.5L11 6L9.5 4.5L12 2A3.6 3.6 0 1 0 13.5 3.5Z" fill="#e4e6ea"/></svg>
<span class="m" style="left:701px;top:1257.1px;font-size:11.66px;line-height:15px;color:#101010;">Insertion point [A align/B basepoint/R rotate/E elevation/V varia/X rotate on ucs x-axis/Y rotate on ucs y-axis/Z rotate on ucs z-axis/OX rotate on object x-axis/OY rotate on object y-axis/OZ rotate on object z-axis/SX scale x-axis/SY scale y-axis/SZ scale</span>
<span class="m" style="left:701px;top:1272.1px;font-size:11.66px;line-height:15px;color:#101010;">z-axis]:</span>
<span class="m" style="left:701px;top:1287.1px;font-size:11.66px;line-height:15px;color:#101010;">Command: Specify opposite corner or [Fence/WPolygon/CPolygon]:</span>
<span class="m" style="left:701px;top:1302.1px;font-size:11.66px;line-height:15px;color:#101010;">Command: Specify opposite corner or [Fence/WPolygon/CPolygon]:</span>
<span class="m" style="left:701px;top:1317.1px;font-size:11.66px;line-height:15px;color:#101010;">Command: Specify opposite corner or [Fence/WPolygon/CPolygon]:</span>
<svg style="left:703px;top:1338px;" width="17" height="12" viewBox="0 0 17 12"><rect x="0.5" y="0.5" width="15" height="10.5" fill="#fff" stroke="#6d7178"/><rect x="0.5" y="0.5" width="15" height="2" fill="#6d7178"/><path d="M2.5 5L4.5 6.5L2.5 8M6 8.5H9" stroke="#3a3d42" stroke-width="0.9" fill="none"/></svg>
<svg style="left:722.0px;top:1342.0px;" width="7" height="4" viewBox="0 0 7 4"><path d="M0 0H7L3.5 4Z" fill="#5d6168"/></svg>
<span class="m" style="left:735.5px;top:1336.0px;font-size:11.66px;line-height:16px;color:#7a7e85;font-style:italic;">Type a command</span>
<div style="left:20px;top:1365px;width:16px;height:2px;background:#e4e6ea;"></div>
<div style="left:20px;top:1370px;width:16px;height:2px;background:#e4e6ea;"></div>
<div style="left:20px;top:1375px;width:16px;height:2px;background:#e4e6ea;"></div>
<svg style="left:45px;top:1358px;" width="70" height="30" viewBox="0 0 70 30"><path d="M8 0H67.5L60 30H0Z" fill="#3b4453"/></svg>
<span style="left:62px;top:1363.5px;font-size:12px;line-height:16px;color:#fff;font-weight:bold;letter-spacing:0.27px;">Model</span>
<span style="left:121px;top:1363.5px;font-size:12px;line-height:16px;color:#dfe2e7;letter-spacing:-0.13px;">M 500 - 841x1189-A0-quer</span>
<span style="left:284px;top:1363.5px;font-size:12px;line-height:16px;color:#dfe2e7;letter-spacing:-0.14px;">M 500 - 594x841-A1-quer</span>
<span style="left:441px;top:1363.5px;font-size:12px;line-height:16px;color:#dfe2e7;letter-spacing:-0.14px;">M 500 - 420x594-A2-quer</span>
<svg style="left:267px;top:1361px;" width="9" height="22" viewBox="0 0 9 22"><path d="M8 1L1 21" stroke="#4a5261" stroke-width="1"/></svg>
<svg style="left:424px;top:1361px;" width="9" height="22" viewBox="0 0 9 22"><path d="M8 1L1 21" stroke="#4a5261" stroke-width="1"/></svg>
<svg style="left:581px;top:1361px;" width="9" height="22" viewBox="0 0 9 22"><path d="M8 1L1 21" stroke="#4a5261" stroke-width="1"/></svg>
<svg style="left:622px;top:1361px;" width="9" height="22" viewBox="0 0 9 22"><path d="M8 1L1 21" stroke="#4a5261" stroke-width="1"/></svg>
<svg style="left:600px;top:1364px;" width="14" height="14" viewBox="0 0 14 14"><path d="M7 0V14M0 7H14" stroke="#e4e6ea" stroke-width="1.8"/></svg>
<div style="left:795.5px;top:1361px;width:47.5px;height:24px;background:#373f4c;"></div>
<div style="left:846px;top:1361px;width:54px;height:24px;background:#373f4c;"></div>
<div style="left:903px;top:1361px;width:107px;height:24px;background:#373f4c;"></div>
<div style="left:1013px;top:1361px;width:123px;height:24px;background:#373f4c;"></div>
<div style="left:1138px;top:1361px;width:209px;height:24px;background:#373f4c;"></div>
<div style="left:1349px;top:1361px;width:49px;height:24px;background:#373f4c;"></div>
<div style="left:1400px;top:1361px;width:64px;height:24px;background:#373f4c;"></div>
<div style="left:1467.5px;top:1361px;width:217.5px;height:24px;background:#373f4c;"></div>
<div style="left:1688.5px;top:1361px;width:113.5px;height:24px;background:#373f4c;"></div>
<div style="left:1805.5px;top:1361px;width:103.5px;height:24px;background:#373f4c;"></div>
<div style="left:1912.5px;top:1361px;width:127.0px;height:24px;background:#373f4c;"></div>
<div style="left:2043px;top:1361px;width:39px;height:24px;background:#373f4c;"></div>
<div style="left:2084px;top:1361px;width:22.5px;height:24px;background:#373f4c;"></div>
<div style="left:2110px;top:1361px;width:96px;height:24px;background:#373f4c;"></div>
<div style="left:2208.5px;top:1361px;width:23.0px;height:24px;background:#373f4c;"></div>
<div style="left:2234px;top:1361px;width:41px;height:24px;background:#373f4c;"></div>
<div style="left:2279.5px;top:1361px;width:50.5px;height:24px;background:#373f4c;"></div>
<div style="left:2333px;top:1361px;width:88px;height:24px;background:#373f4c;"></div>
<div style="left:2425px;top:1361px;width:23px;height:24px;background:#373f4c;"></div>
<div style="left:2452px;top:1361px;width:50px;height:24px;background:#373f4c;"></div>
<div style="left:2505px;top:1361px;width:23.5px;height:24px;background:#373f4c;"></div>
<div style="left:2531px;top:1361px;width:24px;height:24px;background:#373f4c;"></div>
<div style="left:1491.5px;top:1361px;width:1px;height:24px;background:#2a313c;"></div>
<div style="left:1516.5px;top:1361px;width:1px;height:24px;background:#2a313c;"></div>
<div style="left:1541.5px;top:1361px;width:1px;height:24px;background:#2a313c;"></div>
<div style="left:1581.5px;top:1361px;width:1px;height:24px;background:#2a313c;"></div>
<div style="left:1621.5px;top:1361px;width:1px;height:24px;background:#2a313c;"></div>
<div style="left:1644.5px;top:1361px;width:1px;height:24px;background:#2a313c;"></div>
<div style="left:1711.5px;top:1361px;width:1px;height:24px;background:#2a313c;"></div>
<div style="left:1736.5px;top:1361px;width:1px;height:24px;background:#2a313c;"></div>
<div style="left:1761.5px;top:1361px;width:1px;height:24px;background:#2a313c;"></div>
<div style="left:1829.5px;top:1361px;width:1px;height:24px;background:#2a313c;"></div>
<div style="left:1869px;top:1361px;width:1px;height:24px;background:#2a313c;"></div>
<div style="left:1937px;top:1361px;width:1px;height:24px;background:#2a313c;"></div>
<div style="left:1959.5px;top:1361px;width:1px;height:24px;background:#2a313c;"></div>
<div style="left:2373px;top:1361px;width:1px;height:24px;background:#2a313c;"></div>
<div style="left:2398.5px;top:1361px;width:1px;height:24px;background:#2a313c;"></div>
<div style="left:796px;top:1362px;width:22px;height:22px;background:#4f78a8;"></div>
<svg style="left:798px;top:1364.5px;" width="18" height="16" viewBox="0 0 18.0 16"><path d="M3 1V13H16M3 13L1 10M3 13L6 15" stroke="#e0e3e7" stroke-width="1.2" fill="none"/><path d="M1.5 3L3 0.5L4.5 3M14 11.5L16.5 13L14 14.5" stroke="#e0e3e7" fill="none"/></svg>
<svg style="left:822px;top:1364.5px;" width="18" height="16" viewBox="0 0 18.0 16"><path d="M3 2V14H16" stroke="#e0e3e7" stroke-width="1.2" fill="none"/><path d="M4 13L13 4M13 4H9.5M13 4V7.5" stroke="#e0e3e7" stroke-width="1.1" fill="none"/><path d="M1.5 4L3 1.5L4.5 4" stroke="#e0e3e7" fill="none"/></svg>
<svg style="left:849px;top:1364.5px;" width="16" height="16" viewBox="0 0 16.0 16"><path d="M8 1L15 15H1Z" fill="none" stroke="#e0e3e7" stroke-width="1.2"/><path d="M8 5V10.5M8 12V13.5" stroke="#e0e3e7" stroke-width="1.3"/></svg>
<span style="left:870.5px;top:1364.5px;font-size:12px;line-height:16px;color:#e8eaee;letter-spacing:-0.80px;">1x</span>
<svg style="left:889.0px;top:1371.25px;" width="6" height="3.5" viewBox="0 0 6 3.5"><path d="M0 0H6L3.0 3.5Z" fill="#d5d9df"/></svg>
<svg style="left:907px;top:1364.5px;" width="16" height="16" viewBox="0 0 16.0 16"><circle cx="8" cy="8" r="7" fill="none" stroke="#e0e3e7" stroke-width="1.3"/><path d="M3 4C6 5 6 7 4.5 8.5C4 10 6 11 6 14M10 2C9 4 12 5 11 7C10 9 13 10 13 12" stroke="#e0e3e7" fill="none" stroke-width="1.4"/></svg>
<span style="left:927px;top:1364.5px;font-size:12px;line-height:16px;color:#e8eaee;letter-spacing:0.29px;">UTM84-32N</span>
<svg style="left:1000.0px;top:1371.25px;" width="6" height="3.5" viewBox="0 0 6 3.5"><path d="M0 0H6L3.0 3.5Z" fill="#d5d9df"/></svg>
<svg style="left:1019px;top:1364.5px;" width="13" height="16" viewBox="0 0 13.0 16"><path d="M1 1H8L12 5V15H1Z" fill="none" stroke="#e0e3e7" stroke-width="1.2"/><path d="M4 5V15M1 8H12M4 11.5H12M8 8V15" stroke="#e0e3e7" stroke-width="0.9"/></svg>
<span style="left:1037.5px;top:1364.5px;font-size:12px;line-height:16px;color:#e8eaee;letter-spacing:-0.28px;">1 : 129.957</span>
<svg style="left:1099.0px;top:1371.25px;" width="6" height="3.5" viewBox="0 0 6 3.5"><path d="M0 0H6L3.0 3.5Z" fill="#d5d9df"/></svg>
<div style="left:1111px;top:1362px;width:22px;height:22px;background:#4f78a8;"></div>
<svg style="left:1115px;top:1364.5px;" width="14" height="16" viewBox="0 0 14.0 16"><rect x="1" y="7" width="12" height="8.5" fill="#fff"/><path d="M3.5 7V4.5A3.5 3.5 0 0 1 10.5 4.5V7" stroke="#fff" stroke-width="1.8" fill="none"/><rect x="6.2" y="9.5" width="1.6" height="3.5" fill="#5688c8"/></svg>
<span style="left:1163px;top:1364.5px;font-size:12px;line-height:16px;color:#e8eaee;letter-spacing:0.07px;">313988.045, 5560742.526, 0.000</span>
<span style="left:1353px;top:1364.5px;font-size:12px;line-height:16px;color:#e8eaee;letter-spacing:-0.33px;">MODEL</span>
<svg style="left:1404px;top:1364.5px;" width="16" height="16" viewBox="0 0 16.0 16"><path d="M4 0V16M8 0V16M12 0V16M0 4H16M0 8H16M0 12H16" stroke="#e0e3e7" stroke-width="1.1"/></svg>
<svg style="left:1429px;top:1364.5px;" width="14" height="16" viewBox="0 0 14.0 16"><rect x="1.0" y="2.0" width="1.8" height="1.8" fill="#e0e3e7"/><rect x="1.0" y="7.5" width="1.8" height="1.8" fill="#e0e3e7"/><rect x="1.0" y="13.0" width="1.8" height="1.8" fill="#e0e3e7"/><rect x="6.5" y="2.0" width="1.8" height="1.8" fill="#e0e3e7"/><rect x="6.5" y="7.5" width="1.8" height="1.8" fill="#e0e3e7"/><rect x="6.5" y="13.0" width="1.8" height="1.8" fill="#e0e3e7"/><rect x="12.0" y="2.0" width="1.8" height="1.8" fill="#e0e3e7"/><rect x="12.0" y="7.5" width="1.8" height="1.8" fill="#e0e3e7"/><rect x="12.0" y="13.0" width="1.8" height="1.8" fill="#e0e3e7"/></svg>
<svg style="left:1452.5px;top:1371.25px;" width="6" height="3.5" viewBox="0 0 6 3.5"><path d="M0 0H6L3.0 3.5Z" fill="#d5d9df"/></svg>
<svg style="left:1471px;top:1364.5px;" width="16" height="16" viewBox="0 0 16.0 16"><path d="M4 12V3H14V8H9V12" fill="none" stroke="#e0e3e7" stroke-width="1.3"/><rect x="0.5" y="10" width="6" height="5" fill="#e0e3e7"/></svg>
<svg style="left:1496px;top:1364.5px;" width="17" height="16" viewBox="0 0 17.0 16"><path d="M4 1V9M0 5H8" stroke="#e0e3e7" stroke-width="1.3"/><rect x="7" y="10" width="9" height="4.5" fill="#e0e3e7"/></svg>
<div style="left:1518px;top:1362px;width:22px;height:22px;background:#4f78a8;"></div>
<svg style="left:1521px;top:1364.5px;" width="16" height="16" viewBox="0 0 16.0 16"><path d="M2 1V14H15M2 9H7V14" stroke="#fff" stroke-width="1.4" fill="none"/></svg>
<svg style="left:1545px;top:1364.5px;" width="17" height="16" viewBox="0 0 17.0 16"><circle cx="8" cy="9" r="6" fill="none" stroke="#e0e3e7" stroke-width="1.3"/><path d="M8 9H16M8 9L13.5 2.5" stroke="#e0e3e7" stroke-width="1.1"/></svg>
<svg style="left:1569.5px;top:1371.25px;" width="6" height="3.5" viewBox="0 0 6 3.5"><path d="M0 0H6L3.0 3.5Z" fill="#d5d9df"/></svg>
<svg style="left:1585px;top:1364.5px;" width="15" height="16" viewBox="0 0 15.0 16"><path d="M7.5 1V15" stroke="#54d06a" stroke-width="1.1"/><path d="M2 2L13 14" stroke="#f06060" stroke-width="1.1"/><path d="M2 13L7.5 8" stroke="#e0e3e7" stroke-width="1"/></svg>
<svg style="left:1609.5px;top:1371.25px;" width="6" height="3.5" viewBox="0 0 6 3.5"><path d="M0 0H6L3.0 3.5Z" fill="#d5d9df"/></svg>
<svg style="left:1625px;top:1364.5px;" width="17" height="16" viewBox="0 0 17.0 16"><path d="M1 14H16M1 14L14 4" stroke="#e0e3e7" stroke-width="1.3" fill="none"/><path d="M8 14A7 7 0 0 0 6.5 9.5" stroke="#e0e3e7" fill="none"/></svg>
<svg style="left:1650px;top:1364.5px;" width="17" height="16" viewBox="0 0 17.0 16"><rect x="3" y="3" width="12" height="11" fill="none" stroke="#e0e3e7" stroke-width="1.3"/><rect x="0.8" y="0.8" width="4.4" height="4.4" fill="#373f4c" stroke="#e0e3e7" stroke-width="1.2"/></svg>
<svg style="left:1674.0px;top:1371.25px;" width="6" height="3.5" viewBox="0 0 6 3.5"><path d="M0 0H6L3.0 3.5Z" fill="#d5d9df"/></svg>
<div style="left:1688px;top:1362px;width:22px;height:22px;background:#5688c8;"></div>
<svg style="left:1691px;top:1364.5px;" width="16" height="16" viewBox="0 0 16.0 16"><path d="M1 2.5H15M1 6.5H10M1 10.5H15M1 14H8" stroke="#fff" stroke-width="2"/></svg>
<svg style="left:1716px;top:1364.5px;" width="17" height="16" viewBox="0 0 17.0 16"><rect x="1.0" y="0.5" width="3.75" height="3.75" fill="#e0e3e7"/><rect x="1.0" y="4.25" width="3.75" height="3.75" fill="none"/><rect x="1.0" y="8.0" width="3.75" height="3.75" fill="#e0e3e7"/><rect x="1.0" y="11.75" width="3.75" height="3.75" fill="none"/><rect x="4.75" y="0.5" width="3.75" height="3.75" fill="none"/><rect x="4.75" y="4.25" width="3.75" height="3.75" fill="#e0e3e7"/><rect x="4.75" y="8.0" width="3.75" height="3.75" fill="none"/><rect x="4.75" y="11.75" width="3.75" height="3.75" fill="#e0e3e7"/><rect x="8.5" y="0.5" width="3.75" height="3.75" fill="#e0e3e7"/><rect x="8.5" y="4.25" width="3.75" height="3.75" fill="none"/><rect x="8.5" y="8.0" width="3.75" height="3.75" fill="#e0e3e7"/><rect x="8.5" y="11.75" width="3.75" height="3.75" fill="none"/><rect x="12.25" y="0.5" width="3.75" height="3.75" fill="none"/><rect x="12.25" y="4.25" width="3.75" height="3.75" fill="#e0e3e7"/><rect x="12.25" y="8.0" width="3.75" height="3.75" fill="none"/><rect x="12.25" y="11.75" width="3.75" height="3.75" fill="#e0e3e7"/><rect x="1" y="0.5" width="15" height="15" fill="none" stroke="#e0e3e7"/></svg>
<svg style="left:1741px;top:1364.5px;" width="17" height="16" viewBox="0 0 17.0 16"><rect x="6" y="5" width="10" height="10" fill="#6bcf7a"/><path d="M3 0V6M0 3H6" stroke="#e0e3e7" stroke-width="1.2"/><path d="M6 5L4 3H13L16 5" fill="none" stroke="#e0e3e7" stroke-width="0.8"/></svg>
<svg style="left:1766px;top:1364.5px;" width="17" height="16" viewBox="0 0 17.0 16"><path d="M4 7H13V15H4ZM4 7L8 2H17L13 7M17 2V10L13 15" fill="none" stroke="#e0e3e7" stroke-width="1.2"/><rect x="0.8" y="10.5" width="4.5" height="4.5" fill="#373f4c" stroke="#f0a05a" stroke-width="1.1"/></svg>
<svg style="left:1790.5px;top:1371.25px;" width="6" height="3.5" viewBox="0 0 6 3.5"><path d="M0 0H6L3.0 3.5Z" fill="#d5d9df"/></svg>
<svg style="left:1809px;top:1364.5px;" width="17" height="16" viewBox="0 0 17.0 16"><path d="M3 1V12H14M3 12L8 7" stroke="#e0e3e7" stroke-width="1.2" fill="none"/><path d="M1 3L3 0.5L5 3M12 10L14.5 12L12 14M11 2L14 6M14 2L11 6" stroke="#e0e3e7" stroke-width="1" fill="none"/></svg>
<svg style="left:1833px;top:1364.5px;" width="17" height="16" viewBox="0 0 17.0 16"><rect x="3" y="3" width="11" height="10" fill="none" stroke="#e0e3e7" stroke-width="1.2"/><g fill="#55b4f2"><rect x="1" y="1" width="3.5" height="3.5"/><rect x="12.5" y="1" width="3.5" height="3.5"/><rect x="1" y="11.5" width="3.5" height="3.5"/><rect x="12.5" y="11.5" width="3.5" height="3.5"/></g></svg>
<svg style="left:1857.5px;top:1371.25px;" width="6" height="3.5" viewBox="0 0 6 3.5"><path d="M0 0H6L3.0 3.5Z" fill="#d5d9df"/></svg>
<div style="left:1870px;top:1362px;width:22px;height:22px;background:#5688c8;"></div>
<svg style="left:1873px;top:1364.5px;" width="16" height="16" viewBox="0 0 16.0 16"><path d="M8 1L14.5 12.5H1.5Z" fill="none" stroke="#fff" stroke-width="1.2"/><circle cx="8" cy="9" r="3" fill="none" stroke="#fff"/><circle cx="8" cy="1.8" r="1.6" fill="#fff"/><circle cx="1.8" cy="13" r="1.6" fill="#fff"/><circle cx="14.2" cy="13" r="1.6" fill="#fff"/></svg>
<svg style="left:1898.0px;top:1371.25px;" width="6" height="3.5" viewBox="0 0 6 3.5"><path d="M0 0H6L3.0 3.5Z" fill="#d5d9df"/></svg>
<div style="left:1913px;top:1362px;width:23px;height:22px;background:#5688c8;"></div>
<svg style="left:1916px;top:1364.5px;" width="17" height="16" viewBox="0 0 17.0 16"><path d="M8 0.5L10.5 9L15 15L8 11L1 15L5.5 9Z" fill="#fff"/><circle cx="14" cy="3" r="2" fill="none" stroke="#fff" stroke-width="1"/></svg>
<svg style="left:1940px;top:1364.5px;" width="16" height="16" viewBox="0 0 16.0 16"><path d="M8 0.5L10.5 9L15 15L8 11L1 15L5.5 9Z" fill="#e0e3e7"/><path d="M12 1L10.5 4.5H13L11 8" stroke="#e0e3e7" fill="none" stroke-width="1"/></svg>
<svg style="left:1964px;top:1364.5px;" width="16" height="16" viewBox="0 0 16.0 16"><path d="M8 0.5L10.5 9L15 15L8 11L1 15L5.5 9Z" fill="#e0e3e7"/></svg>
<span style="left:1988.5px;top:1364.5px;font-size:12px;line-height:16px;color:#e8eaee;letter-spacing:-0.28px;">1:1000</span>
<svg style="left:2028.0px;top:1371.25px;" width="6" height="3.5" viewBox="0 0 6 3.5"><path d="M0 0H6L3.0 3.5Z" fill="#d5d9df"/></svg>
<svg style="left:2045.5px;top:1364.5px;" width="16.0" height="16" viewBox="0 0 16.0 16"><g fill="#e0e3e7"><circle cx="8" cy="8" r="5.2"/><rect x="6.4" y="0" width="3.2" height="16" transform="rotate(0 8 8)"/><rect x="6.4" y="0" width="3.2" height="16" transform="rotate(45 8 8)"/><rect x="6.4" y="0" width="3.2" height="16" transform="rotate(90 8 8)"/><rect x="6.4" y="0" width="3.2" height="16" transform="rotate(135 8 8)"/></g><circle cx="8" cy="8" r="2.3" fill="#373f4c"/></svg>
<svg style="left:2071.0px;top:1371.25px;" width="6" height="3.5" viewBox="0 0 6 3.5"><path d="M0 0H6L3.0 3.5Z" fill="#d5d9df"/></svg>
<svg style="left:2087px;top:1364.5px;" width="17" height="16" viewBox="0 0 17.0 16"><path d="M8.5 0V17M0 8H17" stroke="#e0e3e7" stroke-width="1.8"/></svg>
<svg style="left:2117px;top:1364.5px;" width="11" height="16" viewBox="0 0 11.0 16"><rect x="1" y="0.5" width="8" height="15" fill="#e0e3e7"/><path d="M5 3H9M6 5.5H9M5 8H9M6 10.5H9M5 13H9" stroke="#373f4c" stroke-width="1"/></svg>
<span style="left:2139px;top:1364.5px;font-size:12px;line-height:16px;color:#e8eaee;letter-spacing:0.17px;">Decimal</span>
<svg style="left:2195.0px;top:1371.25px;" width="6" height="3.5" viewBox="0 0 6 3.5"><path d="M0 0H6L3.0 3.5Z" fill="#d5d9df"/></svg>
<svg style="left:2213px;top:1364.5px;" width="14" height="16" viewBox="0 0 14.0 16"><rect x="1" y="1" width="12" height="14" fill="none" stroke="#e0e3e7" stroke-width="1.2"/><path d="M3.5 5H5M6.5 5H11M3.5 8H5M6.5 8H11M3.5 11H5M6.5 11H11" stroke="#e0e3e7" stroke-width="1"/></svg>
<svg style="left:2239px;top:1364.5px;" width="17" height="16" viewBox="0 0 17.0 16"><rect x="1" y="1" width="14" height="10" fill="none" stroke="#e0e3e7" stroke-width="1.2"/><rect x="1" y="1" width="14" height="2.5" fill="#e0e3e7"/><rect x="9" y="9" width="7" height="6" fill="#e0e3e7"/><path d="M10.5 9V7.5A2 2 0 0 1 14.5 7.5V9" stroke="#e0e3e7" fill="none"/></svg>
<svg style="left:2263.5px;top:1371.25px;" width="6" height="3.5" viewBox="0 0 6 3.5"><path d="M0 0H6L3.0 3.5Z" fill="#d5d9df"/></svg>
<svg style="left:2284px;top:1364.5px;" width="15" height="16" viewBox="0 0 15.0 16"><path d="M0.5 10L7.5 7L14.5 10L7.5 13Z" fill="#55b4f2"/><path d="M0.5 12.5L7.5 15.5L14.5 12.5" stroke="#e0e3e7" fill="none"/><path d="M2 6A6 4 0 0 1 13 6" stroke="#e0e3e7" fill="none" stroke-dasharray="2 1.5"/></svg>
<span style="left:2309px;top:1364.5px;font-size:12px;line-height:16px;color:#e8eaee;letter-spacing:-0.56px;">1.4</span>
<svg style="left:2337px;top:1364.5px;" width="17" height="16" viewBox="0 0 17.0 16"><path d="M1 5V1H5M12 1H16V5M16 11V15H12M5 15H1V11" stroke="#e0e3e7" stroke-width="1.2" fill="none"/><path d="M5 9L9 4L13 6L9 12Z" fill="#79c0f7"/></svg>
<svg style="left:2361.5px;top:1371.25px;" width="6" height="3.5" viewBox="0 0 6 3.5"><path d="M0 0H6L3.0 3.5Z" fill="#d5d9df"/></svg>
<div style="left:2374px;top:1362px;width:23px;height:22px;background:#5688c8;"></div>
<svg style="left:2377px;top:1364.5px;" width="17" height="16" viewBox="0 0 17.0 16"><path d="M1 9L9 1H15V7L7 15Z" fill="#fff"/><circle cx="12" cy="4" r="1.4" fill="#5688c8"/></svg>
<svg style="left:2401px;top:1364.5px;" width="17" height="16" viewBox="0 0 17.0 16"><rect x="1" y="1" width="6" height="6" fill="none" stroke="#e0e3e7" stroke-width="1.1"/><circle cx="13" cy="5" r="2.8" fill="none" stroke="#e0e3e7" stroke-width="1.1"/><path d="M7 9L10.5 15H3.5Z" fill="none" stroke="#e0e3e7" stroke-width="1.1"/></svg>
<div style="left:2425px;top:1362px;width:23px;height:22px;background:#5688c8;"></div>
<svg style="left:2428px;top:1364.5px;" width="17" height="16" viewBox="0 0 17.0 16"><circle cx="8.5" cy="8" r="6.8" fill="none" stroke="#dfe9f5" stroke-width="1.4"/><path d="M5 11.5L12 4.5" stroke="#dfe9f5" stroke-width="1.2"/></svg>
<svg style="left:2458.5px;top:1364.5px;" width="16.0" height="16" viewBox="0 0 16.0 16"><path d="M8 0.5L15.5 15H0.5Z" fill="#e0e3e7"/><path d="M8 5V10.5M8 12V13.5" stroke="#373f4c" stroke-width="1.5"/></svg>
<svg style="left:2482px;top:1364.5px;" width="16" height="16" viewBox="0 0 16.0 16"><path d="M3 2V13H14" stroke="#f0c030" stroke-width="1.3" fill="none"/><rect x="1" y="1" width="4" height="4" fill="#55b4f2"/><rect x="11" y="10" width="4" height="4" fill="#55b4f2"/><path d="M8 11L10.5 14L15.5 7" stroke="#54d06a" stroke-width="1.6" fill="none"/></svg>
<svg style="left:2508px;top:1364.5px;" width="16" height="16" viewBox="0 0 16.0 16"><rect x="1" y="2" width="14" height="12" fill="none" stroke="#e0e3e7" stroke-width="1.2"/><path d="M4 11L7 8M4 11V8.5M4 11H6.5M12 5L9 8M12 5V7.5M12 5H9.5" stroke="#e0e3e7" stroke-width="1" fill="none"/></svg>
<div style="left:2534px;top:1365.5px;width:16px;height:2.2px;background:#e4e6ea;"></div>
<div style="left:2534px;top:1371.5px;width:16px;height:2.2px;background:#e4e6ea;"></div>
<div style="left:2534px;top:1377.5px;width:16px;height:2.2px;background:#e4e6ea;"></div>
</div></body></html>
